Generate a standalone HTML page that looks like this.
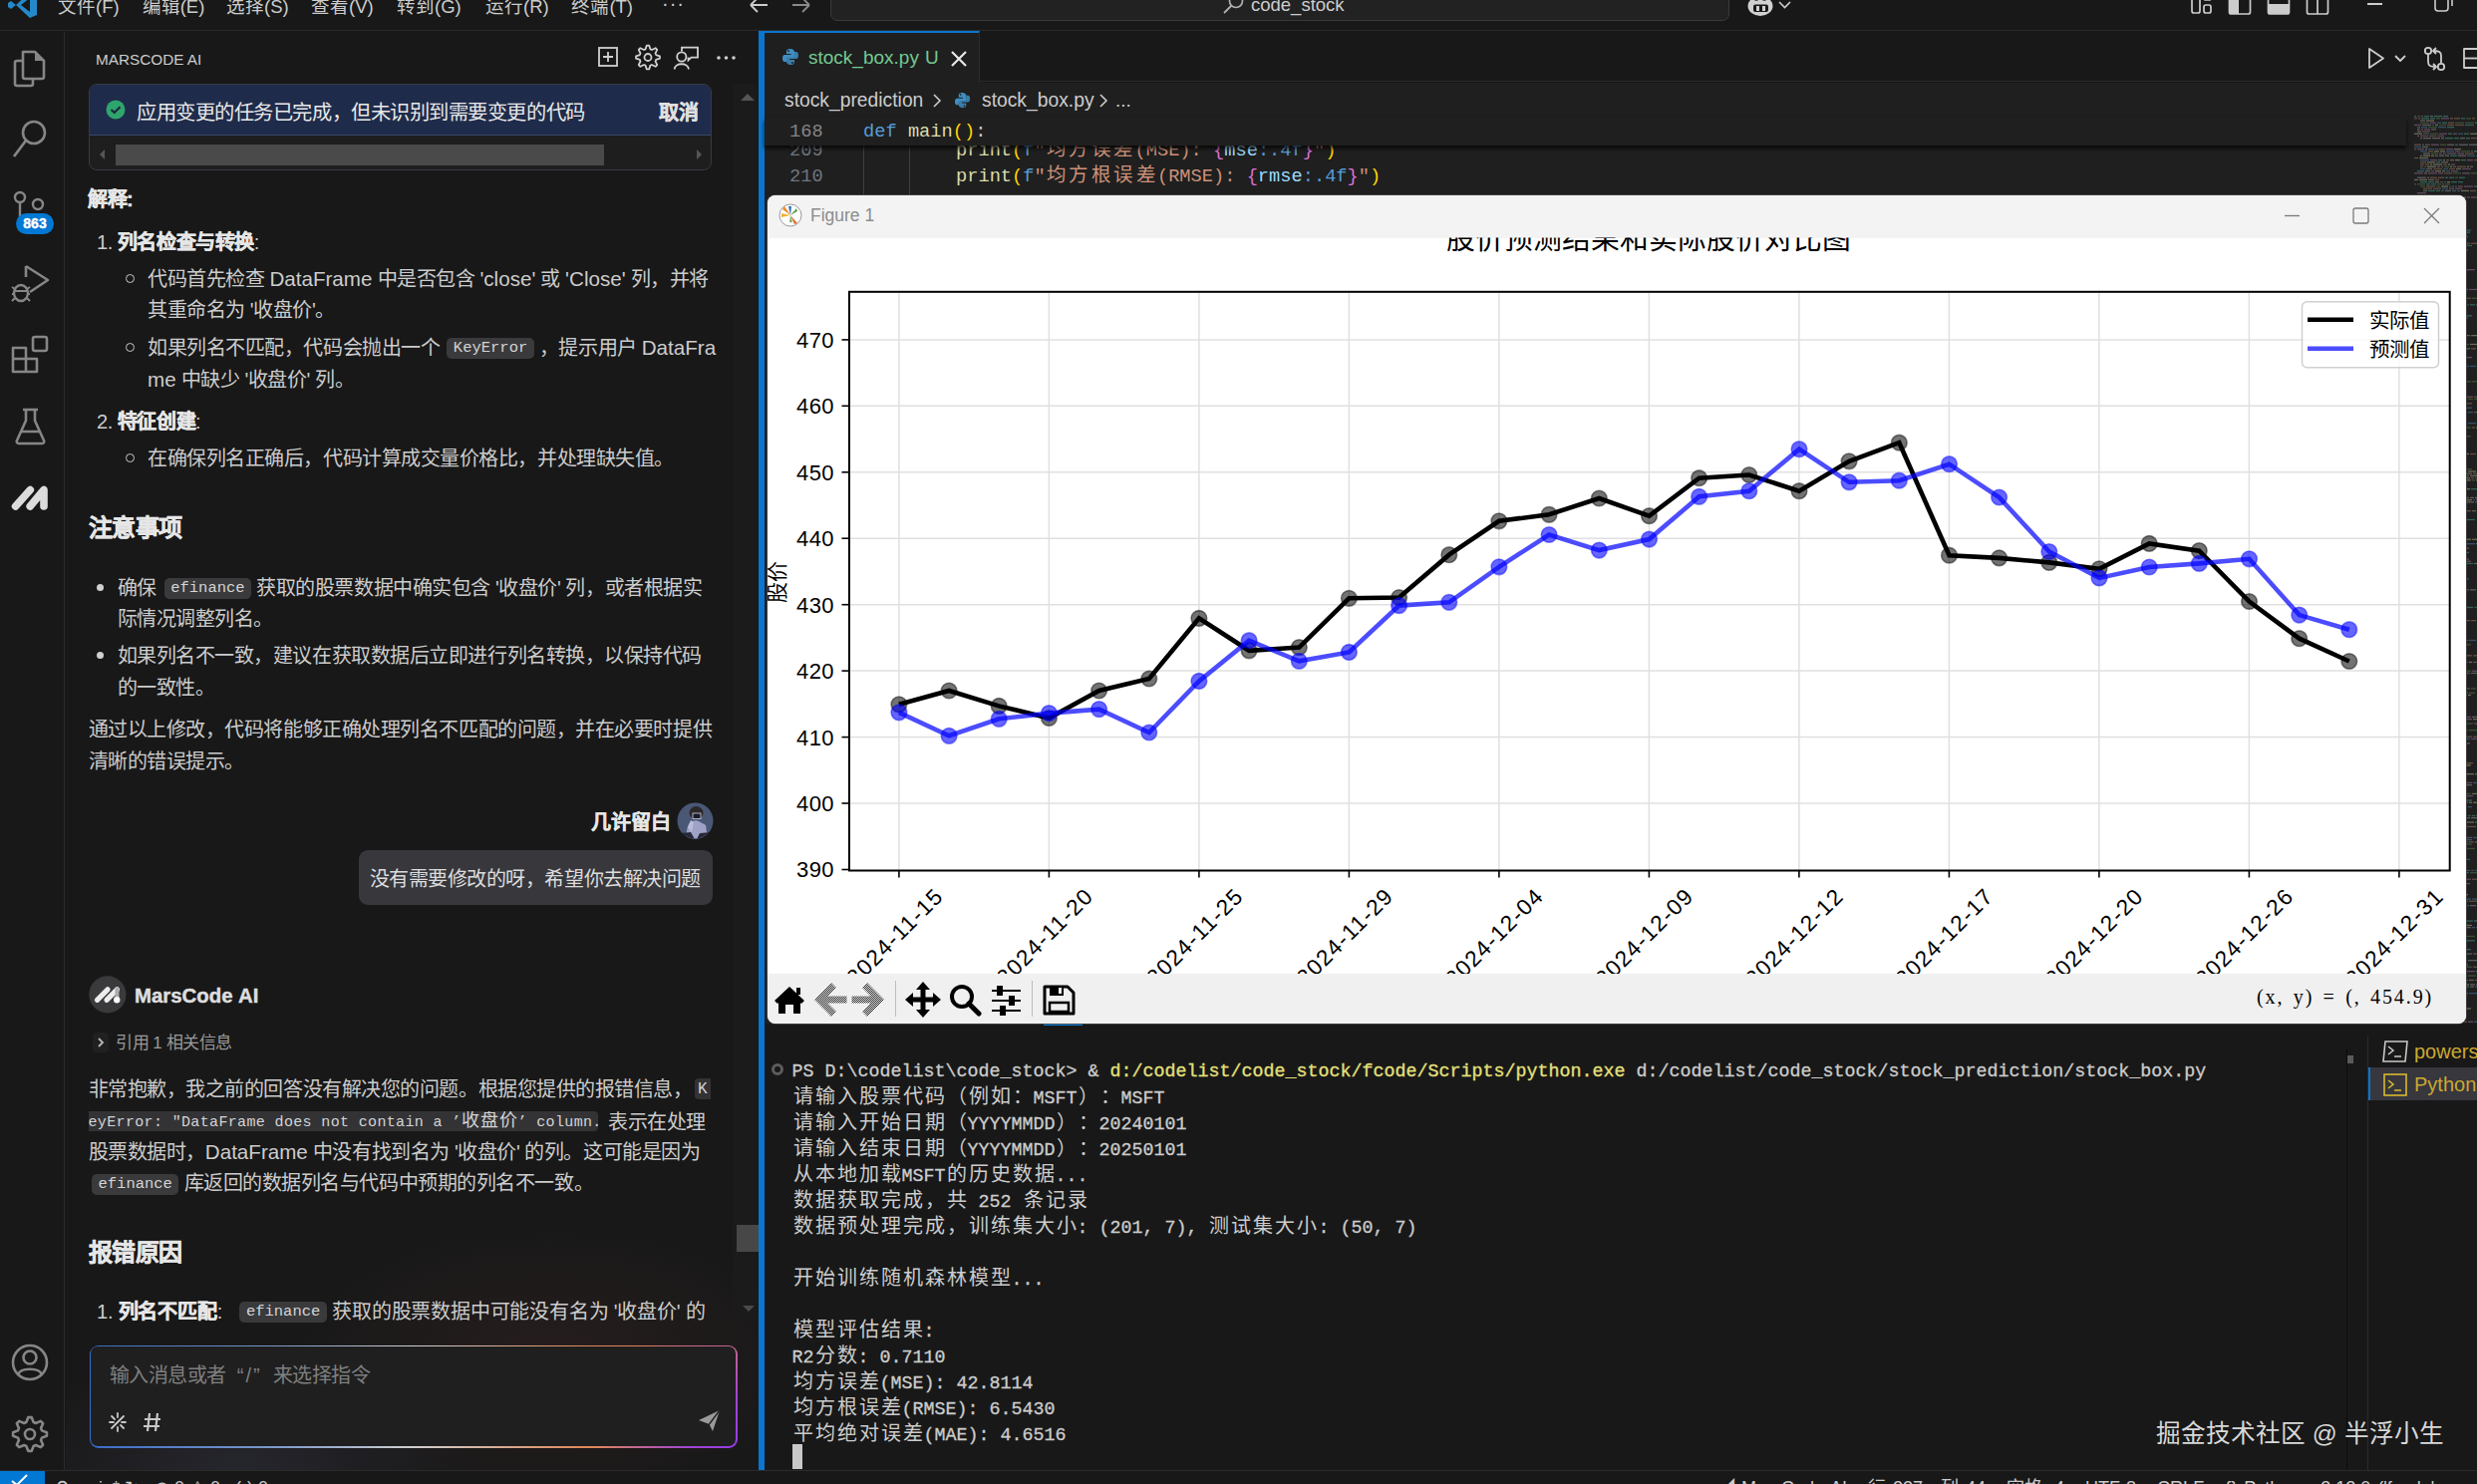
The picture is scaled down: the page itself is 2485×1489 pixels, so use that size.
<!DOCTYPE html><html lang="zh-CN"><head><meta charset="utf-8"><title>VS Code</title><style>
*{box-sizing:border-box;margin:0;padding:0}
html,body{width:2485px;height:1489px;overflow:hidden}
body{position:relative;background:#181818;font-family:"Liberation Sans",sans-serif;color:#cccccc}
.a{position:absolute;white-space:nowrap}
.mono{font-family:"Liberation Mono",monospace}
.b,b{font-weight:bold;-webkit-text-stroke:0.45px currentColor}
.pill{font-family:"Liberation Mono",monospace;background:#3a3a3c;border-radius:5px;color:#d4d4d4;font-size:15.5px;padding:1px 6.5px 2px 6.5px;position:relative;top:-2.5px;letter-spacing:0}
.L{font-size:1.03em;letter-spacing:0}
svg{position:absolute;overflow:visible}
</style></head><body><div class="a" style="left:0;top:0;width:2485px;height:31px;background:#181818;border-bottom:1px solid #2b2b2b"></div><svg style="left:8px;top:-8px" width="30" height="26" viewBox="0 0 30 26"><path d="M22 0 L29 3 L29 23 L22 26 L8 13 L3 17 L0 15 L0 11 L3 9 L8 13 Z" fill="#2489ca"/><path d="M22 6 L22 20 L13 13 Z" fill="#181818"/></svg><div class="a" style="left:58px;top:-5px;font-size:18.5px;line-height:24px;color:#cccccc">文件(F)</div><div class="a" style="left:142.7px;top:-5px;font-size:18.5px;line-height:24px;color:#cccccc">编辑(E)</div><div class="a" style="left:227px;top:-5px;font-size:18.5px;line-height:24px;color:#cccccc">选择(S)</div><div class="a" style="left:312px;top:-5px;font-size:18.5px;line-height:24px;color:#cccccc">查看(V)</div><div class="a" style="left:398px;top:-5px;font-size:18.5px;line-height:24px;color:#cccccc">转到(G)</div><div class="a" style="left:487px;top:-5px;font-size:18.5px;line-height:24px;color:#cccccc">运行(R)</div><div class="a" style="left:573.4px;top:-5px;font-size:18.5px;line-height:24px;color:#cccccc">终端(T)</div><div class="a" style="left:664px;top:-9px;font-size:20px;line-height:24px;color:#cccccc;letter-spacing:1px">···</div><svg style="left:750px;top:-3px" width="70" height="18" viewBox="0 0 70 18"><path d="M3 8 H20 M3 8 L10 1 M3 8 L10 15" stroke="#cccccc" stroke-width="1.8" fill="none"/><path d="M62 8 H45 M62 8 L55 1 M62 8 L55 15" stroke="#8a8a8a" stroke-width="1.8" fill="none"/></svg><div class="a" style="left:833px;top:-12px;width:902px;height:33px;background:#222222;border:1px solid #3a3a3a;border-radius:7px"></div><svg style="left:1226px;top:-6px" width="24" height="22" viewBox="0 0 24 22"><circle cx="14" cy="7" r="6.5" stroke="#b0b0b0" stroke-width="1.7" fill="none"/><path d="M9.5 11.5 L2 19" stroke="#b0b0b0" stroke-width="1.8"/></svg><div class="a" style="left:1255px;top:-7px;font-size:18.5px;line-height:24px;color:#cccccc">code_stock</div><svg style="left:1753px;top:-8px" width="48" height="26" viewBox="0 0 48 26"><ellipse cx="13" cy="14" rx="12.5" ry="10" fill="#d0d0d0"/><circle cx="9" cy="6" r="5.2" fill="#d0d0d0"/><circle cx="17" cy="6" r="5.2" fill="#d0d0d0"/><circle cx="9" cy="6" r="2.8" fill="#181818"/><circle cx="17" cy="6" r="2.8" fill="#181818"/><rect x="6" y="12.5" width="15" height="7.5" rx="2" fill="#181818"/><rect x="9" y="14" width="3" height="5" fill="#d0d0d0"/><rect x="15" y="14" width="3" height="5" fill="#d0d0d0"/><path d="M32 10 L37.5 15.5 L43 10" stroke="#cccccc" stroke-width="1.6" fill="none"/></svg><svg style="left:2198px;top:-6px" width="140" height="22" viewBox="0 0 140 22"><g stroke="#cccccc" stroke-width="1.7" fill="none"><rect x="1" y="-2" width="8" height="21" rx="2"/><rect x="13" y="-2" width="7" height="8" rx="2"/><rect x="13" y="11" width="7" height="8" rx="2"/><rect x="38.5" y="-2" width="21" height="22" rx="2"/><rect x="77.5" y="-2" width="21" height="22" rx="2"/><rect x="116.5" y="-2" width="21" height="22" rx="2"/><path d="M127 -2 V20"/></g><path d="M38.5 -2 H48 V20 H40.5 a2 2 0 0 1 -2 -2 Z" fill="#cccccc"/><path d="M77.5 10 H98.5 V18 a2 2 0 0 1 -2 2 H79.5 a2 2 0 0 1 -2 -2 Z" fill="#cccccc"/></svg><div class="a" style="left:2375px;top:3px;width:15px;height:1.6px;background:#cccccc"></div><svg style="left:2440px;top:-6px" width="24" height="20" viewBox="0 0 24 20"><rect x="3" y="4" width="13" height="13" rx="3" stroke="#cccccc" stroke-width="1.6" fill="none"/><path d="M8 1 H16 a4 4 0 0 1 4 4 V12" stroke="#cccccc" stroke-width="1.6" fill="none"/></svg><div class="a" style="left:0;top:32px;width:65px;height:1443px;background:#181818;border-right:1px solid #2b2b2b"></div><svg style="left:12px;top:49px" width="36" height="40" viewBox="0 0 36 40"><path d="M11 3 H23 L32 12 V28 a2 2 0 0 1 -2 2 H13 a2 2 0 0 1 -2 -2 Z" stroke="#868686" stroke-width="2.6" fill="none" stroke-linejoin="round"/><path d="M23 3 V12 H32" fill="#868686"/><path d="M11 12 H5 a2 2 0 0 0 -2 2 V35 a2 2 0 0 0 2 2 H19 a2 2 0 0 0 2 -2 V30" stroke="#868686" stroke-width="2.6" fill="none"/></svg><svg style="left:12px;top:120px" width="38" height="40" viewBox="0 0 38 40"><circle cx="22" cy="13" r="11" stroke="#868686" stroke-width="2.6" fill="none"/><path d="M14 21 L2 37" stroke="#868686" stroke-width="2.8"/></svg><svg style="left:12px;top:192px" width="40" height="44" viewBox="0 0 40 44"><circle cx="8" cy="6" r="5" stroke="#868686" stroke-width="2.4" fill="none"/><circle cx="26" cy="13" r="5" stroke="#868686" stroke-width="2.4" fill="none"/><path d="M8 11 V40" stroke="#868686" stroke-width="2.4"/></svg><div class="a b" style="left:16px;top:214px;width:38px;height:21px;border-radius:11px;background:#0078d4;color:#fff;font-size:14px;line-height:21px;text-align:center">863</div><svg style="left:10px;top:264px" width="42" height="42" viewBox="0 0 42 42"><path d="M16 3 L38 17 L20 29" stroke="#868686" stroke-width="2.6" fill="none" stroke-linejoin="round"/><path d="M16 3 V14" stroke="#868686" stroke-width="2.6"/><ellipse cx="11" cy="30" rx="7" ry="8" stroke="#868686" stroke-width="2.4" fill="none"/><path d="M2 24 L5 26 M2 31 H4 M2 38 L5 35 M20 24 L17 26 M20 31 H18 M20 38 L17 35 M5 28 H17" stroke="#868686" stroke-width="2"/></svg><svg style="left:11px;top:336px" width="40" height="40" viewBox="0 0 40 40"><path d="M2 13 H15 V24 H26 V37 H2 Z M2 24 H15 V37" stroke="#868686" stroke-width="2.6" fill="none" stroke-linejoin="round"/><rect x="22" y="2" width="14" height="14" rx="2" stroke="#868686" stroke-width="2.6" fill="none"/></svg><svg style="left:14px;top:409px" width="34" height="38" viewBox="0 0 34 38"><path d="M9 2 H24 M12 2 V13 L3 33 a2 2 0 0 0 2 3 H28 a2 2 0 0 0 2 -3 L21 13 V2 M7 24 H26" stroke="#868686" stroke-width="2.6" fill="none" stroke-linejoin="round"/></svg><svg style="left:11px;top:486px" width="40" height="28" viewBox="0 0 40 28"><g stroke="#dcdcdc" stroke-width="7.6" stroke-linecap="round" stroke-linejoin="round" fill="none"><path d="M4.6 22 L19.3 5.5"/><path d="M19.2 22 L33 5.5 L33 22"/></g></svg><svg style="left:11px;top:1348px" width="38" height="38" viewBox="0 0 38 38"><circle cx="19" cy="19" r="17" stroke="#868686" stroke-width="2.6" fill="none"/><circle cx="19" cy="14" r="6.5" stroke="#868686" stroke-width="2.6" fill="none"/><path d="M7 31 C10 24 28 24 31 31" stroke="#868686" stroke-width="2.6" fill="none"/></svg><svg style="left:11px;top:1420px" width="38" height="38" viewBox="0 0 38 38"><path d="M35.92 17.33 L35.92 20.67 L30.96 22.63 L30.02 24.89 L32.14 29.78 L29.78 32.14 L24.89 30.02 L22.63 30.96 L20.67 35.92 L17.33 35.92 L15.37 30.96 L13.11 30.02 L8.22 32.14 L5.86 29.78 L7.98 24.89 L7.04 22.63 L2.08 20.67 L2.08 17.33 L7.04 15.37 L7.98 13.11 L5.86 8.22 L8.22 5.86 L13.11 7.98 L15.37 7.04 L17.33 2.08 L20.67 2.08 L22.63 7.04 L24.89 7.98 L29.78 5.86 L32.14 8.22 L30.02 13.11 L30.96 15.37 Z" stroke="#868686" stroke-width="2.6" fill="none" stroke-linejoin="round"/><circle cx="19" cy="19" r="5" stroke="#868686" stroke-width="2.6" fill="none"/></svg><div class="a" style="left:66px;top:32px;width:695px;height:1443px;background:#181818"></div><div class="a" style="left:66px;top:1240px;width:695px;height:235px;background:radial-gradient(ellipse 45% 70% at 25% 100%, rgba(70,70,95,0.30), rgba(24,24,24,0) 75%),radial-gradient(ellipse 50% 80% at 70% 55%, rgba(80,45,45,0.28), rgba(24,24,24,0) 75%)"></div><div class="a" style="left:735px;top:84px;width:25px;height:1240px;background:#1b1b1b"></div><svg style="left:742px;top:92px" width="16" height="10" viewBox="0 0 16 10"><path d="M1 9 L8 2 L15 9 Z" fill="#555"/></svg><svg style="left:743px;top:1309px" width="16" height="10" viewBox="0 0 16 10"><path d="M2 1 L8 7 L14 1 Z" fill="#4a4a4a"/></svg><div class="a" style="left:739px;top:1229px;width:22px;height:27px;background:#474747"></div><div class="a" style="left:96px;top:51px;font-size:15.3px;line-height:18px;color:#cccccc">MARSCODE AI</div><svg style="left:598px;top:45px" width="145" height="28" viewBox="0 0 145 28"><g stroke="#d0d0d0" stroke-width="1.8" fill="none"><rect x="3" y="3" width="18" height="18"/><path d="M12 7 V17 M7 12 H17"/><path d="M86 6.5 V2.7 H102 V12.6 H95.5 L92.5 15.5 V12.6"/><circle cx="85.8" cy="12" r="4.6"/><path d="M78.5 24.5 C79.5 17.5 92 17.5 93 24.5"/></g><path d="M63.94 11.32 L63.94 13.68 L60.13 14.97 L59.50 16.51 L61.28 20.11 L59.61 21.78 L56.01 20.00 L54.47 20.63 L53.18 24.44 L50.82 24.44 L49.53 20.63 L47.99 20.00 L44.39 21.78 L42.72 20.11 L44.50 16.51 L43.87 14.97 L40.06 13.68 L40.06 11.32 L43.87 10.03 L44.50 8.49 L42.72 4.89 L44.39 3.22 L47.99 5.00 L49.53 4.37 L50.82 0.56 L53.18 0.56 L54.47 4.37 L56.01 5.00 L59.61 3.22 L61.28 4.89 L59.50 8.49 L60.13 10.03 Z" stroke="#d0d0d0" stroke-width="1.8" fill="none" stroke-linejoin="round"/><circle cx="52" cy="12.5" r="3.5" stroke="#d0d0d0" stroke-width="1.8" fill="none"/><circle cx="123" cy="13" r="1.8" fill="#d0d0d0"/><circle cx="130.5" cy="13" r="1.8" fill="#d0d0d0"/><circle cx="138" cy="13" r="1.8" fill="#d0d0d0"/></svg><div class="a" style="left:89px;top:84px;width:625px;height:87px;border:1.5px solid #353a45;border-radius:8px;background:#1e1e1e;overflow:hidden"><div style="position:absolute;left:0;top:0;width:100%;height:51px;background:#1f2b4a;border-bottom:1.5px solid #3a4866"></div></div><svg style="left:106px;top:100px" width="20" height="20" viewBox="0 0 20 20"><circle cx="10" cy="10" r="9.5" fill="#2fa56e"/><path d="M5.5 10 L8.7 13 L14.5 7.2" stroke="#1b2a3a" stroke-width="2.2" fill="none"/></svg><div class="a" style="left:137px;top:101px;font-size:20.3px;line-height:24px;color:#e8e8e8;letter-spacing:-0.45px">应用变更的任务已完成，但未识别到需要变更的代码</div><div class="a b" style="left:661px;top:101px;font-size:20px;line-height:24px;color:#e0e0e0">取消</div><svg style="left:97px;top:148px" width="612" height="14" viewBox="0 0 612 14"><path d="M8 2 L3 7 L8 12 Z" fill="#555"/><path d="M602 2 L607 7 L602 12 Z" fill="#555"/></svg><div class="a" style="left:116px;top:145px;width:490px;height:21px;background:#4a4a4a"></div><div class="a b" style="left:88px;top:187.6px;font-size:20px;line-height:24px;color:#e6e6e6;letter-spacing:-0.45px">解释:</div><div class="a" style="left:97px;top:230.6px;font-size:20px;line-height:24px;color:#cccccc;letter-spacing:-0.45px">1. <b style="color:#e6e6e6">列名检查与转换</b>:</div><div class="a" style="left:125.5px;top:274.5px;width:9px;height:9px;border:1.6px solid #c8c8c8;border-radius:50%"></div><div class="a" style="left:148px;top:267.6px;font-size:20px;line-height:24px;color:#cccccc;letter-spacing:-0.45px">代码首先检查 <span class="L">DataFrame</span> 中是否包含 <span class="L">'close'</span> 或 <span class="L">'Close'</span> 列，并将</div><div class="a" style="left:148px;top:298.6px;font-size:20px;line-height:24px;color:#cccccc;letter-spacing:-0.45px">其重命名为 '收盘价'。</div><div class="a" style="left:125.5px;top:343.5px;width:9px;height:9px;border:1.6px solid #c8c8c8;border-radius:50%"></div><div class="a" style="left:148px;top:336.6px;font-size:20px;line-height:24px;color:#cccccc;letter-spacing:-0.45px">如果列名不匹配，代码会抛出一个 <span class="pill" style="margin-left:2px">KeyError</span> ，提示用户 <span class="L">DataFra</span></div><div class="a" style="left:148px;top:368.6px;font-size:20px;line-height:24px;color:#cccccc;letter-spacing:-0.45px"><span class="L">me</span> 中缺少 '收盘价' 列。</div><div class="a" style="left:97px;top:411.2px;font-size:20px;line-height:24px;color:#cccccc;letter-spacing:-0.45px">2. <b style="color:#e6e6e6">特征创建</b>:</div><div class="a" style="left:125.5px;top:454.5px;width:9px;height:9px;border:1.6px solid #c8c8c8;border-radius:50%"></div><div class="a" style="left:148px;top:447.6px;font-size:20px;line-height:24px;color:#cccccc;letter-spacing:-0.45px">在确保列名正确后，代码计算成交量价格比，并处理缺失值。</div><div class="a b" style="left:88.5px;top:516.2px;font-size:24px;line-height:28px;color:#e6e6e6;letter-spacing:-0.45px">注意事项</div><div class="a" style="left:97.0px;top:585.5px;width:7px;height:7px;background:#d0d0d0;border-radius:50%"></div><div class="a" style="left:117.5px;top:577.6px;font-size:20px;line-height:24px;color:#cccccc;letter-spacing:-0.45px">确保 <span class="pill" style="margin:0 0 0 3px">efinance</span> 获取的股票数据中确实包含 '收盘价' 列，或者根据实</div><div class="a" style="left:117.5px;top:609.0px;font-size:20px;line-height:24px;color:#cccccc;letter-spacing:-0.45px">际情况调整列名。</div><div class="a" style="left:97.0px;top:653.5px;width:7px;height:7px;background:#d0d0d0;border-radius:50%"></div><div class="a" style="left:117.5px;top:645.6px;font-size:20px;line-height:24px;color:#cccccc;letter-spacing:-0.45px">如果列名不一致，建议在获取数据后立即进行列名转换，以保持代码</div><div class="a" style="left:117.5px;top:677.6px;font-size:20px;line-height:24px;color:#cccccc;letter-spacing:-0.45px">的一致性。</div><div class="a" style="left:88.5px;top:720.2px;font-size:20px;line-height:24px;color:#cccccc;letter-spacing:-0.45px">通过以上修改，代码将能够正确处理列名不匹配的问题，并在必要时提供</div><div class="a" style="left:88.5px;top:751.6px;font-size:20px;line-height:24px;color:#cccccc;letter-spacing:-0.45px">清晰的错误提示。</div><div class="a b" style="left:563px;top:812.5px;width:110px;text-align:right;font-size:20px;line-height:24px;color:#e6e6e6">几许留白</div><svg style="left:679px;top:805px" width="37" height="37" viewBox="0 0 37 37"><defs><clipPath id="av"><circle cx="18.5" cy="18.5" r="18"/></clipPath></defs><circle cx="18.5" cy="18.5" r="18" fill="#4a5876"/><g clip-path="url(#av)"><ellipse cx="19.5" cy="10.5" rx="7" ry="6.5" fill="#2b2829"/><path d="M8 37 L11 24 C13 19 18 17 22 19 L29 23 L31 37 Z" fill="#9fa2c6"/><path d="M11 25 L14 18 L17 20 L15 30 Z" fill="#b8bcd8"/><path d="M2 37 L4 31 L14 30 L18 37 Z M20 37 L23 31 L35 30 L37 37 Z" fill="#262838"/><rect x="16" y="11" width="8" height="5.5" fill="#1b1b30" stroke="#d8d8e0" stroke-width="0.8"/></g></svg><div class="a" style="left:359.5px;top:853px;width:355px;height:55px;background:#37373c;border-radius:9px"></div><div class="a" style="left:370.5px;top:870.1px;font-size:20px;line-height:24px;color:#dcdcdc;letter-spacing:-0.45px">没有需要修改的呀，希望你去解决问题</div><svg style="left:88px;top:979px" width="40" height="40" viewBox="0 0 40 40"><circle cx="19.9" cy="18.9" r="18.6" fill="#3a3a3c"/><g stroke="#ececec" stroke-width="5.2" stroke-linecap="round" fill="none"><path d="M9.5 24.3 L20 13.8"/><path d="M19 24.3 L29.5 13.8"/></g><path d="M29.5 13.8 V22" stroke="#aaa" stroke-width="4" stroke-linecap="round"/><circle cx="29.2" cy="24.2" r="3.2" fill="#ffffff"/></svg><div class="a b" style="left:135px;top:986.6px;font-size:19.8px;line-height:24px;color:#dedede;letter-spacing:0px"><span class="L">MarsCode</span> <span class="L">AI</span></div><svg style="left:93px;top:1036px" width="16" height="20" viewBox="0 0 16 20"><rect x="0" y="0" width="16" height="20" rx="4" fill="#202020"/><path d="M6 6 L10 10 L6 14" stroke="#b8b8b8" stroke-width="1.8" fill="none"/></svg><div class="a" style="left:116px;top:1034.6px;font-size:17px;line-height:24px;color:#9a9a9a;letter-spacing:-0.45px">引用 1 相关信息</div><div class="a" style="left:88.5px;top:1080.6px;font-size:20px;line-height:24px;color:#cccccc;letter-spacing:-0.45px">非常抱歉，我之前的回答没有解决您的问题。根据您提供的报错信息，</div><div class="a mono" style="left:697px;top:1082px;width:16px;height:21px;background:#333336;border-radius:4px 0 0 4px;font-size:16px;line-height:22px;color:#d4d4d4;padding-left:3px">K</div><div class="a mono" style="left:88.5px;top:1114.5px;width:511px;height:20.5px;background:#333336;border-radius:0 4px 4px 0;overflow:hidden;font-size:15px;line-height:21px;color:#d4d4d4;letter-spacing:0.35px">eyError: "DataFrame does not contain a ’<span style="font-size:18px;letter-spacing:1px">收盘价</span>’ column."</div><div class="a" style="left:610px;top:1113.6px;font-size:20px;line-height:24px;color:#cccccc;letter-spacing:-0.45px">表示在处理</div><div class="a" style="left:88.5px;top:1144.0px;font-size:20px;line-height:24px;color:#cccccc;letter-spacing:-0.45px">股票数据时，<span class="L">DataFrame</span> 中没有找到名为 '收盘价' 的列。这可能是因为</div><div class="a" style="left:92px;top:1175.1px;font-size:20px;line-height:24px;color:#cccccc;letter-spacing:-0.45px"><span class="pill" style="">efinance</span> 库返回的数据列名与代码中预期的列名不一致。</div><div class="a b" style="left:88.8px;top:1243.3px;font-size:24px;line-height:28px;color:#e6e6e6;letter-spacing:-0.45px">报错原因</div><div class="a" style="left:97px;top:1303.6px;font-size:20px;line-height:24px;color:#cccccc;letter-spacing:-0.2px">1. <b style="color:#e6e6e6">列名不匹配</b>: <span class="pill" style="margin-left:12px">efinance</span> 获取的股票数据中可能没有名为 '收盘价' 的</div><div class="a" style="left:89.5px;top:1349.5px;width:650px;height:103px;border-radius:9px;padding:1.6px;background:radial-gradient(ellipse 22% 140% at 100% 100%, rgba(150,60,230,1) 0%, rgba(150,60,230,0.85) 35%, rgba(150,60,230,0) 100%),linear-gradient(90deg,#3a6cc8 0%,#7a98c8 28%,#d0d0d0 50%,#e08a5a 76%,#e07a60 100%)"><div style="width:100%;height:100%;border-radius:7px;background:#1f1f20"></div></div><div class="a" style="left:109.5px;top:1368.1px;font-size:20px;line-height:24px;color:#7f7f7f;letter-spacing:-0.45px">输入消息或者<span style="display:inline-block;width:47px;text-align:center;letter-spacing:2px">“/”</span>来选择指令</div><svg style="left:108px;top:1416px" width="62" height="22" viewBox="0 0 62 22"><g stroke="#c8c8c8" stroke-width="1.8" stroke-linecap="round"><path d="M10 2 V6 M10 16 V20 M2 11 H6 M14 11 H18 M4 5 L7 8 M13 14 L16 17 M16 5 L4 17"/></g><path d="M42 2 L40 20 M50 2 L48 20 M37 8 H53 M36 15 H52" stroke="#c8c8c8" stroke-width="2.2"/></svg><svg style="left:698px;top:1412px" width="28" height="28" viewBox="0 0 28 28"><path d="M3 13 L24 3 L17 24 L13.5 17 Z" fill="#9a9a9a"/><path d="M13.5 17 L24 3 M13.5 17 L11 24" stroke="#202022" stroke-width="1.4"/></svg><div class="a" style="left:761px;top:31px;width:6px;height:1444px;background:#0a76d2"></div><div class="a" style="left:767px;top:32px;width:1718px;height:50px;background:#181818;border-bottom:1px solid #2b2b2b"></div><div class="a" style="left:767px;top:31px;width:216px;height:52px;background:#1f1f1f;border-top:2px solid #0a76d2;border-right:1px solid #2b2b2b"></div><svg style="left:784px;top:48px" width="18" height="18" viewBox="0 0 18 18"><path d="M9 1 C5 1 5 3 5 4 V6 H9.5 V7 H3 C1.5 7 1 9 1 10.5 C1 12 1.5 14 3 14 H5 V11.5 C5 10.5 6 9.5 7 9.5 H11 C12 9.5 13 8.5 13 7.5 V4 C13 2.5 11.5 1 9 1 Z" fill="#3e8ec2"/><path d="M9 17 C13 17 13 15 13 14 V12 H8.5 V11 H15 C16.5 11 17 9 17 7.5 C17 6 16.5 4 15 4 H13 V6.5 C13 7.5 12 8.5 11 8.5 H7 C6 8.5 5 9.5 5 10.5 V14 C5 15.5 6.5 17 9 17 Z" fill="#3e8ec2" opacity="0.85"/><circle cx="7" cy="3" r="0.9" fill="#1f1f1f"/><circle cx="11" cy="15" r="0.9" fill="#1f1f1f"/></svg><div class="a" style="left:811px;top:46px;font-size:19px;line-height:24px;color:#73c991">stock_box.py</div><div class="a" style="left:928px;top:46px;font-size:19px;line-height:24px;color:#73c991">U</div><svg style="left:953px;top:50px" width="18" height="18" viewBox="0 0 18 18"><path d="M2 2 L16 16 M16 2 L2 16" stroke="#e8e8e8" stroke-width="2.2"/></svg><svg style="left:2360px;top:44px" width="125" height="30" viewBox="0 0 125 30"><g stroke="#cccccc" stroke-width="1.8" fill="none" stroke-linejoin="round"><path d="M17 5 L31 14.5 L17 24 Z"/><path d="M43 12 L48 17 L53 12"/><circle cx="76" cy="7" r="3.2"/><circle cx="89" cy="23" r="3.2"/><path d="M76 10.5 V18 C76 22 78 23 84 23 M81 20 L84 23 L81 26"/><path d="M89 19.5 V12 C89 8 87 7 81 7 M84 4 L81 7 L84 10"/><rect x="112" y="5" width="20" height="19"/><path d="M112 14.5 H132"/></g></svg><div class="a" style="left:767px;top:83px;width:1718px;height:947px;background:#1f1f1f"></div><div class="a" style="left:787px;top:89px;font-size:19.3px;line-height:24px;color:#cccccc">stock_prediction</div><svg style="left:934px;top:93px" width="12" height="16" viewBox="0 0 12 16"><path d="M3 2 L9 8 L3 14" stroke="#cccccc" stroke-width="1.6" fill="none"/></svg><svg style="left:957px;top:92px" width="17.099999999999998" height="17.099999999999998" viewBox="0 0 18 18"><path d="M9 1 C5 1 5 3 5 4 V6 H9.5 V7 H3 C1.5 7 1 9 1 10.5 C1 12 1.5 14 3 14 H5 V11.5 C5 10.5 6 9.5 7 9.5 H11 C12 9.5 13 8.5 13 7.5 V4 C13 2.5 11.5 1 9 1 Z" fill="#3e8ec2"/><path d="M9 17 C13 17 13 15 13 14 V12 H8.5 V11 H15 C16.5 11 17 9 17 7.5 C17 6 16.5 4 15 4 H13 V6.5 C13 7.5 12 8.5 11 8.5 H7 C6 8.5 5 9.5 5 10.5 V14 C5 15.5 6.5 17 9 17 Z" fill="#3e8ec2" opacity="0.85"/><circle cx="7" cy="3" r="0.9" fill="#1f1f1f"/><circle cx="11" cy="15" r="0.9" fill="#1f1f1f"/></svg><div class="a" style="left:985px;top:89px;font-size:19.3px;line-height:24px;color:#cccccc">stock_box.py</div><svg style="left:1101px;top:93px" width="12" height="16" viewBox="0 0 12 16"><path d="M3 2 L9 8 L3 14" stroke="#cccccc" stroke-width="1.6" fill="none"/></svg><div class="a" style="left:1119px;top:89px;font-size:19px;line-height:24px;color:#cccccc">...</div><div class="a mono" style="left:792px;top:165.3px;font-size:18.7px;line-height:24px"><span style="color:#6e7681">210</span></div><div class="a mono" style="left:959px;top:165.3px;font-size:18.7px;line-height:24px"><span style="color:#dcdcaa">print</span><span style="color:#ffd700">(</span><span style="color:#569cd6">f</span><span style="color:#ce9178">&quot;<span style="display:inline-block;width:22.44px;text-align:center;font-size:19.5px">均</span><span style="display:inline-block;width:22.44px;text-align:center;font-size:19.5px">方</span><span style="display:inline-block;width:22.44px;text-align:center;font-size:19.5px">根</span><span style="display:inline-block;width:22.44px;text-align:center;font-size:19.5px">误</span><span style="display:inline-block;width:22.44px;text-align:center;font-size:19.5px">差</span>(RMSE): </span><span style="color:#da70d6">{</span><span style="color:#9cdcfe">rmse</span><span style="color:#569cd6">:.4f</span><span style="color:#da70d6">}</span><span style="color:#ce9178">&quot;</span><span style="color:#ffd700">)</span></div><div class="a mono" style="left:792px;top:139px;font-size:18.7px;line-height:24px"><span style="color:#6e7681">209</span></div><div class="a mono" style="left:959px;top:139px;font-size:18.7px;line-height:24px"><span style="color:#dcdcaa">print</span><span style="color:#ffd700">(</span><span style="color:#569cd6">f</span><span style="color:#ce9178">&quot;<span style="display:inline-block;width:22.44px;text-align:center;font-size:19.5px">均</span><span style="display:inline-block;width:22.44px;text-align:center;font-size:19.5px">方</span><span style="display:inline-block;width:22.44px;text-align:center;font-size:19.5px">误</span><span style="display:inline-block;width:22.44px;text-align:center;font-size:19.5px">差</span>(MSE): </span><span style="color:#da70d6">{</span><span style="color:#9cdcfe">mse</span><span style="color:#569cd6">:.4f</span><span style="color:#da70d6">}</span><span style="color:#ce9178">&quot;</span><span style="color:#ffd700">)</span></div><div class="a" style="left:866px;top:140px;width:1px;height:60px;background:#404040"></div><div class="a" style="left:912px;top:140px;width:1px;height:60px;background:#404040"></div><div class="a" style="left:767px;top:118px;width:1647px;height:28px;background:#1f1f1f;box-shadow:0 3px 4px rgba(0,0,0,0.75)"></div><div class="a mono" style="left:792px;top:120px;font-size:18.7px;line-height:24px"><span style="color:#858585">168</span></div><div class="a mono" style="left:866px;top:120px;font-size:18.7px;line-height:24px"><span style="color:#569cd6">def</span><span style="color:#ccc"> </span><span style="color:#dcdcaa">main</span><span style="color:#ffd700">()</span><span style="color:#cccccc">:</span></div><svg style="left:0;top:0" width="2485" height="1489" viewBox="0 0 2485 1489" ><rect x="2422" y="116.0" width="2" height="1.3" fill="#4ec9b0" opacity="0.4"/><rect x="2425" y="116.0" width="3" height="1.3" fill="#6a9955" opacity="0.4"/><rect x="2429" y="116.0" width="2" height="1.3" fill="#ce9178" opacity="0.4"/><rect x="2432" y="116.0" width="5" height="1.3" fill="#4ec9b0" opacity="0.4"/><rect x="2438" y="116.0" width="3" height="1.3" fill="#bbbbbb" opacity="0.4"/><rect x="2442" y="116.0" width="8" height="1.3" fill="#4ec9b0" opacity="0.4"/><rect x="2451" y="116.0" width="5" height="1.3" fill="#4ec9b0" opacity="0.4"/><rect x="2422" y="118.2" width="3" height="1.3" fill="#c586c0" opacity="0.4"/><rect x="2426" y="118.2" width="2" height="1.3" fill="#ce9178" opacity="0.4"/><rect x="2429" y="118.2" width="8" height="1.3" fill="#4ec9b0" opacity="0.4"/><rect x="2438" y="118.2" width="5" height="1.3" fill="#4ec9b0" opacity="0.4"/><rect x="2444" y="118.2" width="4" height="1.3" fill="#6a9955" opacity="0.4"/><rect x="2449" y="118.2" width="8" height="1.3" fill="#c586c0" opacity="0.4"/><rect x="2458" y="118.2" width="3" height="1.3" fill="#ce9178" opacity="0.4"/><rect x="2462" y="118.2" width="6" height="1.3" fill="#ce9178" opacity="0.4"/><rect x="2469" y="118.2" width="4" height="1.3" fill="#4ec9b0" opacity="0.4"/><rect x="2474" y="118.2" width="5" height="1.3" fill="#6a9955" opacity="0.4"/><rect x="2480" y="118.2" width="3" height="1.3" fill="#ce9178" opacity="0.4"/><rect x="2428" y="120.4" width="5" height="1.3" fill="#bbbbbb" opacity="0.4"/><rect x="2434" y="120.4" width="8" height="1.3" fill="#dcdcaa" opacity="0.4"/><rect x="2428" y="122.6" width="9" height="1.3" fill="#6a9955" opacity="0.4"/><rect x="2438" y="122.6" width="6" height="1.3" fill="#c586c0" opacity="0.4"/><rect x="2445" y="122.6" width="4" height="1.3" fill="#569cd6" opacity="0.4"/><rect x="2450" y="122.6" width="5" height="1.3" fill="#4ec9b0" opacity="0.4"/><rect x="2456" y="122.6" width="6" height="1.3" fill="#ce9178" opacity="0.4"/><rect x="2463" y="122.6" width="9" height="1.3" fill="#6a9955" opacity="0.4"/><rect x="2473" y="122.6" width="9" height="1.3" fill="#6a9955" opacity="0.4"/><rect x="2483" y="122.6" width="2" height="1.3" fill="#4ec9b0" opacity="0.4"/><rect x="2422" y="124.8" width="7" height="1.3" fill="#c586c0" opacity="0.4"/><rect x="2430" y="124.8" width="9" height="1.3" fill="#bbbbbb" opacity="0.4"/><rect x="2440" y="124.8" width="2" height="1.3" fill="#569cd6" opacity="0.4"/><rect x="2443" y="124.8" width="3" height="1.3" fill="#dcdcaa" opacity="0.4"/><rect x="2447" y="124.8" width="7" height="1.3" fill="#6a9955" opacity="0.4"/><rect x="2455" y="124.8" width="7" height="1.3" fill="#ce9178" opacity="0.4"/><rect x="2463" y="124.8" width="9" height="1.3" fill="#ce9178" opacity="0.4"/><rect x="2473" y="124.8" width="9" height="1.3" fill="#4ec9b0" opacity="0.4"/><rect x="2425" y="127.0" width="3" height="1.3" fill="#4ec9b0" opacity="0.4"/><rect x="2429" y="127.0" width="6" height="1.3" fill="#569cd6" opacity="0.4"/><rect x="2436" y="127.0" width="9" height="1.3" fill="#6a9955" opacity="0.4"/><rect x="2446" y="127.0" width="8" height="1.3" fill="#569cd6" opacity="0.4"/><rect x="2455" y="127.0" width="7" height="1.3" fill="#4ec9b0" opacity="0.4"/><rect x="2425" y="129.2" width="3" height="1.3" fill="#bbbbbb" opacity="0.4"/><rect x="2429" y="129.2" width="2" height="1.3" fill="#c586c0" opacity="0.4"/><rect x="2432" y="129.2" width="6" height="1.3" fill="#c586c0" opacity="0.4"/><rect x="2439" y="129.2" width="5" height="1.3" fill="#bbbbbb" opacity="0.4"/><rect x="2425" y="131.4" width="4" height="1.3" fill="#bbbbbb" opacity="0.4"/><rect x="2430" y="131.4" width="8" height="1.3" fill="#ce9178" opacity="0.4"/><rect x="2422" y="133.6" width="8" height="1.3" fill="#dcdcaa" opacity="0.4"/><rect x="2431" y="133.6" width="6" height="1.3" fill="#569cd6" opacity="0.4"/><rect x="2438" y="133.6" width="8" height="1.3" fill="#6a9955" opacity="0.4"/><rect x="2447" y="133.6" width="8" height="1.3" fill="#c586c0" opacity="0.4"/><rect x="2456" y="133.6" width="4" height="1.3" fill="#4ec9b0" opacity="0.4"/><rect x="2461" y="133.6" width="4" height="1.3" fill="#c586c0" opacity="0.4"/><rect x="2466" y="133.6" width="5" height="1.3" fill="#569cd6" opacity="0.4"/><rect x="2472" y="133.6" width="5" height="1.3" fill="#4ec9b0" opacity="0.4"/><rect x="2478" y="133.6" width="7" height="1.3" fill="#dcdcaa" opacity="0.4"/><rect x="2425" y="135.8" width="2" height="1.3" fill="#c586c0" opacity="0.4"/><rect x="2428" y="135.8" width="8" height="1.3" fill="#ce9178" opacity="0.4"/><rect x="2437" y="135.8" width="7" height="1.3" fill="#ce9178" opacity="0.4"/><rect x="2445" y="135.8" width="7" height="1.3" fill="#c586c0" opacity="0.4"/><rect x="2428" y="138.0" width="2" height="1.3" fill="#bbbbbb" opacity="0.4"/><rect x="2431" y="138.0" width="8" height="1.3" fill="#bbbbbb" opacity="0.4"/><rect x="2440" y="138.0" width="8" height="1.3" fill="#bbbbbb" opacity="0.4"/><rect x="2449" y="138.0" width="3" height="1.3" fill="#bbbbbb" opacity="0.4"/><rect x="2453" y="138.0" width="8" height="1.3" fill="#4ec9b0" opacity="0.4"/><rect x="2462" y="138.0" width="5" height="1.3" fill="#4ec9b0" opacity="0.4"/><rect x="2468" y="138.0" width="5" height="1.3" fill="#bbbbbb" opacity="0.4"/><rect x="2474" y="138.0" width="4" height="1.3" fill="#4ec9b0" opacity="0.4"/><rect x="2479" y="138.0" width="6" height="1.3" fill="#ce9178" opacity="0.4"/><rect x="2422" y="144.6" width="7" height="1.3" fill="#ce9178" opacity="0.4"/><rect x="2430" y="144.6" width="2" height="1.3" fill="#4ec9b0" opacity="0.4"/><rect x="2433" y="144.6" width="5" height="1.3" fill="#ce9178" opacity="0.4"/><rect x="2439" y="144.6" width="8" height="1.3" fill="#c586c0" opacity="0.4"/><rect x="2448" y="144.6" width="6" height="1.3" fill="#6a9955" opacity="0.4"/><rect x="2455" y="144.6" width="7" height="1.3" fill="#bbbbbb" opacity="0.4"/><rect x="2463" y="144.6" width="3" height="1.3" fill="#4ec9b0" opacity="0.4"/><rect x="2467" y="144.6" width="9" height="1.3" fill="#bbbbbb" opacity="0.4"/><rect x="2477" y="144.6" width="8" height="1.3" fill="#bbbbbb" opacity="0.4"/><rect x="2422" y="146.8" width="7" height="1.3" fill="#569cd6" opacity="0.4"/><rect x="2430" y="146.8" width="6" height="1.3" fill="#bbbbbb" opacity="0.4"/><rect x="2422" y="149.0" width="2" height="1.3" fill="#c586c0" opacity="0.4"/><rect x="2425" y="149.0" width="7" height="1.3" fill="#c586c0" opacity="0.4"/><rect x="2433" y="149.0" width="2" height="1.3" fill="#dcdcaa" opacity="0.4"/><rect x="2436" y="149.0" width="6" height="1.3" fill="#569cd6" opacity="0.4"/><rect x="2443" y="149.0" width="3" height="1.3" fill="#569cd6" opacity="0.4"/><rect x="2447" y="149.0" width="6" height="1.3" fill="#ce9178" opacity="0.4"/><rect x="2454" y="149.0" width="7" height="1.3" fill="#c586c0" opacity="0.4"/><rect x="2462" y="149.0" width="7" height="1.3" fill="#dcdcaa" opacity="0.4"/><rect x="2428" y="151.2" width="7" height="1.3" fill="#569cd6" opacity="0.4"/><rect x="2436" y="151.2" width="5" height="1.3" fill="#ce9178" opacity="0.4"/><rect x="2442" y="151.2" width="5" height="1.3" fill="#dcdcaa" opacity="0.4"/><rect x="2448" y="151.2" width="5" height="1.3" fill="#dcdcaa" opacity="0.4"/><rect x="2454" y="151.2" width="8" height="1.3" fill="#569cd6" opacity="0.4"/><rect x="2463" y="151.2" width="5" height="1.3" fill="#c586c0" opacity="0.4"/><rect x="2469" y="151.2" width="9" height="1.3" fill="#6a9955" opacity="0.4"/><rect x="2479" y="151.2" width="2" height="1.3" fill="#4ec9b0" opacity="0.4"/><rect x="2482" y="151.2" width="3" height="1.3" fill="#bbbbbb" opacity="0.4"/><rect x="2431" y="153.4" width="7" height="1.3" fill="#bbbbbb" opacity="0.4"/><rect x="2439" y="153.4" width="7" height="1.3" fill="#6a9955" opacity="0.4"/><rect x="2447" y="153.4" width="3" height="1.3" fill="#c586c0" opacity="0.4"/><rect x="2451" y="153.4" width="3" height="1.3" fill="#c586c0" opacity="0.4"/><rect x="2455" y="153.4" width="9" height="1.3" fill="#c586c0" opacity="0.4"/><rect x="2465" y="153.4" width="7" height="1.3" fill="#c586c0" opacity="0.4"/><rect x="2473" y="153.4" width="9" height="1.3" fill="#ce9178" opacity="0.4"/><rect x="2428" y="155.6" width="2" height="1.3" fill="#bbbbbb" opacity="0.4"/><rect x="2431" y="155.6" width="7" height="1.3" fill="#dcdcaa" opacity="0.4"/><rect x="2439" y="155.6" width="3" height="1.3" fill="#dcdcaa" opacity="0.4"/><rect x="2443" y="155.6" width="3" height="1.3" fill="#bbbbbb" opacity="0.4"/><rect x="2447" y="155.6" width="5" height="1.3" fill="#bbbbbb" opacity="0.4"/><rect x="2453" y="155.6" width="4" height="1.3" fill="#bbbbbb" opacity="0.4"/><rect x="2458" y="155.6" width="7" height="1.3" fill="#4ec9b0" opacity="0.4"/><rect x="2466" y="155.6" width="8" height="1.3" fill="#bbbbbb" opacity="0.4"/><rect x="2475" y="155.6" width="8" height="1.3" fill="#569cd6" opacity="0.4"/><rect x="2484" y="155.6" width="1" height="1.3" fill="#569cd6" opacity="0.4"/><rect x="2422" y="157.8" width="4" height="1.3" fill="#ce9178" opacity="0.4"/><rect x="2427" y="157.8" width="9" height="1.3" fill="#dcdcaa" opacity="0.4"/><rect x="2428" y="160.0" width="9" height="1.3" fill="#569cd6" opacity="0.4"/><rect x="2438" y="160.0" width="7" height="1.3" fill="#c586c0" opacity="0.4"/><rect x="2446" y="160.0" width="4" height="1.3" fill="#4ec9b0" opacity="0.4"/><rect x="2451" y="160.0" width="2" height="1.3" fill="#dcdcaa" opacity="0.4"/><rect x="2454" y="160.0" width="3" height="1.3" fill="#ce9178" opacity="0.4"/><rect x="2458" y="160.0" width="4" height="1.3" fill="#bbbbbb" opacity="0.4"/><rect x="2463" y="160.0" width="5" height="1.3" fill="#dcdcaa" opacity="0.4"/><rect x="2469" y="160.0" width="5" height="1.3" fill="#4ec9b0" opacity="0.4"/><rect x="2475" y="160.0" width="6" height="1.3" fill="#c586c0" opacity="0.4"/><rect x="2482" y="160.0" width="3" height="1.3" fill="#ce9178" opacity="0.4"/><rect x="2428" y="162.2" width="6" height="1.3" fill="#ce9178" opacity="0.4"/><rect x="2435" y="162.2" width="8" height="1.3" fill="#dcdcaa" opacity="0.4"/><rect x="2444" y="162.2" width="4" height="1.3" fill="#4ec9b0" opacity="0.4"/><rect x="2449" y="162.2" width="7" height="1.3" fill="#bbbbbb" opacity="0.4"/><rect x="2428" y="164.4" width="4" height="1.3" fill="#ce9178" opacity="0.4"/><rect x="2433" y="164.4" width="4" height="1.3" fill="#ce9178" opacity="0.4"/><rect x="2438" y="164.4" width="2" height="1.3" fill="#dcdcaa" opacity="0.4"/><rect x="2441" y="164.4" width="9" height="1.3" fill="#dcdcaa" opacity="0.4"/><rect x="2451" y="164.4" width="4" height="1.3" fill="#ce9178" opacity="0.4"/><rect x="2456" y="164.4" width="2" height="1.3" fill="#dcdcaa" opacity="0.4"/><rect x="2459" y="164.4" width="4" height="1.3" fill="#c586c0" opacity="0.4"/><rect x="2428" y="166.6" width="3" height="1.3" fill="#ce9178" opacity="0.4"/><rect x="2432" y="166.6" width="2" height="1.3" fill="#6a9955" opacity="0.4"/><rect x="2435" y="166.6" width="9" height="1.3" fill="#dcdcaa" opacity="0.4"/><rect x="2445" y="166.6" width="3" height="1.3" fill="#ce9178" opacity="0.4"/><rect x="2449" y="166.6" width="2" height="1.3" fill="#c586c0" opacity="0.4"/><rect x="2452" y="166.6" width="5" height="1.3" fill="#6a9955" opacity="0.4"/><rect x="2458" y="166.6" width="2" height="1.3" fill="#dcdcaa" opacity="0.4"/><rect x="2461" y="166.6" width="3" height="1.3" fill="#ce9178" opacity="0.4"/><rect x="2465" y="166.6" width="9" height="1.3" fill="#ce9178" opacity="0.4"/><rect x="2475" y="166.6" width="2" height="1.3" fill="#dcdcaa" opacity="0.4"/><rect x="2478" y="166.6" width="3" height="1.3" fill="#bbbbbb" opacity="0.4"/><rect x="2428" y="168.8" width="5" height="1.3" fill="#569cd6" opacity="0.4"/><rect x="2434" y="168.8" width="6" height="1.3" fill="#bbbbbb" opacity="0.4"/><rect x="2441" y="168.8" width="9" height="1.3" fill="#ce9178" opacity="0.4"/><rect x="2451" y="168.8" width="5" height="1.3" fill="#569cd6" opacity="0.4"/><rect x="2457" y="168.8" width="6" height="1.3" fill="#ce9178" opacity="0.4"/><rect x="2464" y="168.8" width="5" height="1.3" fill="#dcdcaa" opacity="0.4"/><rect x="2470" y="168.8" width="9" height="1.3" fill="#c586c0" opacity="0.4"/><rect x="2425" y="171.0" width="7" height="1.3" fill="#4ec9b0" opacity="0.4"/><rect x="2433" y="171.0" width="5" height="1.3" fill="#bbbbbb" opacity="0.4"/><rect x="2439" y="171.0" width="3" height="1.3" fill="#c586c0" opacity="0.4"/><rect x="2443" y="171.0" width="6" height="1.3" fill="#dcdcaa" opacity="0.4"/><rect x="2450" y="171.0" width="3" height="1.3" fill="#dcdcaa" opacity="0.4"/><rect x="2454" y="171.0" width="4" height="1.3" fill="#569cd6" opacity="0.4"/><rect x="2459" y="171.0" width="7" height="1.3" fill="#c586c0" opacity="0.4"/><rect x="2422" y="173.2" width="9" height="1.3" fill="#c586c0" opacity="0.4"/><rect x="2432" y="173.2" width="3" height="1.3" fill="#bbbbbb" opacity="0.4"/><rect x="2436" y="173.2" width="9" height="1.3" fill="#c586c0" opacity="0.4"/><rect x="2446" y="173.2" width="5" height="1.3" fill="#c586c0" opacity="0.4"/><rect x="2452" y="173.2" width="8" height="1.3" fill="#ce9178" opacity="0.4"/><rect x="2461" y="173.2" width="8" height="1.3" fill="#6a9955" opacity="0.4"/><rect x="2470" y="173.2" width="8" height="1.3" fill="#c586c0" opacity="0.4"/><rect x="2479" y="173.2" width="6" height="1.3" fill="#6a9955" opacity="0.4"/><rect x="2425" y="177.6" width="9" height="1.3" fill="#bbbbbb" opacity="0.4"/><rect x="2435" y="177.6" width="2" height="1.3" fill="#bbbbbb" opacity="0.4"/><rect x="2438" y="177.6" width="7" height="1.3" fill="#ce9178" opacity="0.4"/><rect x="2446" y="177.6" width="6" height="1.3" fill="#ce9178" opacity="0.4"/><rect x="2453" y="177.6" width="3" height="1.3" fill="#4ec9b0" opacity="0.4"/><rect x="2457" y="177.6" width="5" height="1.3" fill="#4ec9b0" opacity="0.4"/><rect x="2463" y="177.6" width="3" height="1.3" fill="#6a9955" opacity="0.4"/><rect x="2467" y="177.6" width="6" height="1.3" fill="#4ec9b0" opacity="0.4"/><rect x="2422" y="179.8" width="4" height="1.3" fill="#dcdcaa" opacity="0.4"/><rect x="2427" y="179.8" width="8" height="1.3" fill="#dcdcaa" opacity="0.4"/><rect x="2436" y="179.8" width="6" height="1.3" fill="#bbbbbb" opacity="0.4"/><rect x="2443" y="179.8" width="4" height="1.3" fill="#ce9178" opacity="0.4"/><rect x="2428" y="182.0" width="7" height="1.3" fill="#4ec9b0" opacity="0.4"/><rect x="2436" y="182.0" width="6" height="1.3" fill="#4ec9b0" opacity="0.4"/><rect x="2443" y="182.0" width="4" height="1.3" fill="#bbbbbb" opacity="0.4"/><rect x="2448" y="182.0" width="3" height="1.3" fill="#6a9955" opacity="0.4"/><rect x="2452" y="182.0" width="2" height="1.3" fill="#569cd6" opacity="0.4"/><rect x="2455" y="182.0" width="3" height="1.3" fill="#dcdcaa" opacity="0.4"/><rect x="2459" y="182.0" width="6" height="1.3" fill="#4ec9b0" opacity="0.4"/><rect x="2466" y="182.0" width="5" height="1.3" fill="#4ec9b0" opacity="0.4"/><rect x="2422" y="184.2" width="2" height="1.3" fill="#6a9955" opacity="0.4"/><rect x="2425" y="184.2" width="8" height="1.3" fill="#6a9955" opacity="0.4"/><rect x="2434" y="184.2" width="4" height="1.3" fill="#4ec9b0" opacity="0.4"/><rect x="2439" y="184.2" width="5" height="1.3" fill="#4ec9b0" opacity="0.4"/><rect x="2445" y="184.2" width="4" height="1.3" fill="#6a9955" opacity="0.4"/><rect x="2450" y="184.2" width="2" height="1.3" fill="#c586c0" opacity="0.4"/><rect x="2453" y="184.2" width="5" height="1.3" fill="#6a9955" opacity="0.4"/><rect x="2428" y="186.4" width="5" height="1.3" fill="#6a9955" opacity="0.4"/><rect x="2434" y="186.4" width="9" height="1.3" fill="#ce9178" opacity="0.4"/><rect x="2444" y="186.4" width="4" height="1.3" fill="#6a9955" opacity="0.4"/><rect x="2449" y="186.4" width="7" height="1.3" fill="#dcdcaa" opacity="0.4"/><rect x="2457" y="186.4" width="2" height="1.3" fill="#6a9955" opacity="0.4"/><rect x="2460" y="186.4" width="2" height="1.3" fill="#4ec9b0" opacity="0.4"/><rect x="2463" y="186.4" width="2" height="1.3" fill="#569cd6" opacity="0.4"/><rect x="2466" y="186.4" width="5" height="1.3" fill="#ce9178" opacity="0.4"/><rect x="2472" y="186.4" width="9" height="1.3" fill="#c586c0" opacity="0.4"/><rect x="2482" y="186.4" width="3" height="1.3" fill="#4ec9b0" opacity="0.4"/><rect x="2431" y="188.6" width="9" height="1.3" fill="#ce9178" opacity="0.4"/><rect x="2441" y="188.6" width="8" height="1.3" fill="#ce9178" opacity="0.4"/><rect x="2450" y="188.6" width="6" height="1.3" fill="#569cd6" opacity="0.4"/><rect x="2457" y="188.6" width="5" height="1.3" fill="#c586c0" opacity="0.4"/><rect x="2463" y="188.6" width="7" height="1.3" fill="#c586c0" opacity="0.4"/><rect x="2431" y="190.8" width="4" height="1.3" fill="#bbbbbb" opacity="0.4"/><rect x="2436" y="190.8" width="7" height="1.3" fill="#4ec9b0" opacity="0.4"/><rect x="2444" y="190.8" width="4" height="1.3" fill="#4ec9b0" opacity="0.4"/><rect x="2449" y="190.8" width="3" height="1.3" fill="#569cd6" opacity="0.4"/><rect x="2453" y="190.8" width="6" height="1.3" fill="#bbbbbb" opacity="0.4"/><rect x="2460" y="190.8" width="4" height="1.3" fill="#4ec9b0" opacity="0.4"/><rect x="2465" y="190.8" width="3" height="1.3" fill="#569cd6" opacity="0.4"/><rect x="2469" y="190.8" width="8" height="1.3" fill="#dcdcaa" opacity="0.4"/><rect x="2478" y="190.8" width="6" height="1.3" fill="#ce9178" opacity="0.4"/><rect x="2425" y="193.0" width="9" height="1.3" fill="#c586c0" opacity="0.4"/><rect x="2425" y="195.2" width="6" height="1.3" fill="#6a9955" opacity="0.4"/><rect x="2432" y="195.2" width="7" height="1.3" fill="#ce9178" opacity="0.4"/><rect x="2422" y="197.4" width="6" height="1.3" fill="#c586c0" opacity="0.4"/><rect x="2429" y="197.4" width="7" height="1.3" fill="#c586c0" opacity="0.4"/><rect x="2437" y="197.4" width="2" height="1.3" fill="#6a9955" opacity="0.4"/><rect x="2440" y="197.4" width="8" height="1.3" fill="#4ec9b0" opacity="0.4"/><rect x="2449" y="197.4" width="9" height="1.3" fill="#6a9955" opacity="0.4"/><rect x="2459" y="197.4" width="5" height="1.3" fill="#c586c0" opacity="0.4"/><rect x="2465" y="197.4" width="2" height="1.3" fill="#4ec9b0" opacity="0.4"/><rect x="2468" y="197.4" width="6" height="1.3" fill="#dcdcaa" opacity="0.4"/><rect x="2475" y="197.4" width="3" height="1.3" fill="#c586c0" opacity="0.4"/><rect x="2479" y="197.4" width="6" height="1.3" fill="#ce9178" opacity="0.4"/><rect x="2422" y="204.0" width="4" height="1.3" fill="#569cd6" opacity="0.4"/><rect x="2427" y="204.0" width="8" height="1.3" fill="#dcdcaa" opacity="0.4"/><rect x="2425" y="206.2" width="6" height="1.3" fill="#569cd6" opacity="0.4"/><rect x="2432" y="206.2" width="4" height="1.3" fill="#4ec9b0" opacity="0.4"/><rect x="2437" y="206.2" width="8" height="1.3" fill="#569cd6" opacity="0.4"/><rect x="2428" y="208.4" width="2" height="1.3" fill="#dcdcaa" opacity="0.4"/><rect x="2431" y="208.4" width="5" height="1.3" fill="#4ec9b0" opacity="0.4"/><rect x="2437" y="208.4" width="2" height="1.3" fill="#4ec9b0" opacity="0.4"/><rect x="2440" y="208.4" width="4" height="1.3" fill="#569cd6" opacity="0.4"/><rect x="2422" y="210.6" width="9" height="1.3" fill="#ce9178" opacity="0.4"/><rect x="2432" y="210.6" width="2" height="1.3" fill="#569cd6" opacity="0.4"/><rect x="2435" y="210.6" width="2" height="1.3" fill="#569cd6" opacity="0.4"/><rect x="2438" y="210.6" width="5" height="1.3" fill="#bbbbbb" opacity="0.4"/><rect x="2444" y="210.6" width="6" height="1.3" fill="#4ec9b0" opacity="0.4"/><rect x="2451" y="210.6" width="9" height="1.3" fill="#dcdcaa" opacity="0.4"/><rect x="2428" y="215.0" width="3" height="1.3" fill="#569cd6" opacity="0.4"/><rect x="2432" y="215.0" width="9" height="1.3" fill="#6a9955" opacity="0.4"/><rect x="2425" y="217.2" width="5" height="1.3" fill="#c586c0" opacity="0.4"/><rect x="2431" y="217.2" width="9" height="1.3" fill="#bbbbbb" opacity="0.4"/><rect x="2441" y="217.2" width="8" height="1.3" fill="#4ec9b0" opacity="0.4"/><rect x="2431" y="219.4" width="2" height="1.3" fill="#ce9178" opacity="0.4"/><rect x="2434" y="219.4" width="5" height="1.3" fill="#4ec9b0" opacity="0.4"/><rect x="2440" y="219.4" width="4" height="1.3" fill="#6a9955" opacity="0.4"/><rect x="2445" y="219.4" width="6" height="1.3" fill="#569cd6" opacity="0.4"/><rect x="2452" y="219.4" width="6" height="1.3" fill="#ce9178" opacity="0.4"/><rect x="2422" y="221.6" width="2" height="1.3" fill="#bbbbbb" opacity="0.4"/><rect x="2425" y="221.6" width="6" height="1.3" fill="#569cd6" opacity="0.4"/><rect x="2432" y="221.6" width="3" height="1.3" fill="#569cd6" opacity="0.4"/><rect x="2436" y="221.6" width="5" height="1.3" fill="#569cd6" opacity="0.4"/><rect x="2442" y="221.6" width="9" height="1.3" fill="#6a9955" opacity="0.4"/><rect x="2452" y="221.6" width="6" height="1.3" fill="#bbbbbb" opacity="0.4"/><rect x="2459" y="221.6" width="9" height="1.3" fill="#bbbbbb" opacity="0.4"/><rect x="2428" y="223.8" width="6" height="1.3" fill="#4ec9b0" opacity="0.4"/><rect x="2435" y="223.8" width="9" height="1.3" fill="#4ec9b0" opacity="0.4"/><rect x="2445" y="223.8" width="6" height="1.3" fill="#bbbbbb" opacity="0.4"/><rect x="2425" y="228.2" width="8" height="1.3" fill="#c586c0" opacity="0.4"/><rect x="2434" y="228.2" width="5" height="1.3" fill="#4ec9b0" opacity="0.4"/><rect x="2440" y="228.2" width="3" height="1.3" fill="#c586c0" opacity="0.4"/><rect x="2444" y="228.2" width="6" height="1.3" fill="#6a9955" opacity="0.4"/><rect x="2431" y="230.4" width="6" height="1.3" fill="#4ec9b0" opacity="0.4"/><rect x="2438" y="230.4" width="7" height="1.3" fill="#c586c0" opacity="0.4"/><rect x="2446" y="230.4" width="9" height="1.3" fill="#bbbbbb" opacity="0.4"/><rect x="2456" y="230.4" width="8" height="1.3" fill="#4ec9b0" opacity="0.4"/><rect x="2465" y="230.4" width="4" height="1.3" fill="#4ec9b0" opacity="0.4"/><rect x="2470" y="230.4" width="9" height="1.3" fill="#569cd6" opacity="0.4"/><rect x="2425" y="232.6" width="4" height="1.3" fill="#bbbbbb" opacity="0.4"/><rect x="2430" y="232.6" width="7" height="1.3" fill="#bbbbbb" opacity="0.4"/><rect x="2438" y="232.6" width="7" height="1.3" fill="#4ec9b0" opacity="0.4"/><rect x="2446" y="232.6" width="7" height="1.3" fill="#4ec9b0" opacity="0.4"/><rect x="2454" y="232.6" width="7" height="1.3" fill="#dcdcaa" opacity="0.4"/><rect x="2462" y="232.6" width="7" height="1.3" fill="#dcdcaa" opacity="0.4"/><rect x="2470" y="232.6" width="8" height="1.3" fill="#4ec9b0" opacity="0.4"/><rect x="2422" y="234.8" width="2" height="1.3" fill="#569cd6" opacity="0.4"/><rect x="2425" y="234.8" width="6" height="1.3" fill="#6a9955" opacity="0.4"/><rect x="2432" y="234.8" width="7" height="1.3" fill="#4ec9b0" opacity="0.4"/><rect x="2440" y="234.8" width="8" height="1.3" fill="#bbbbbb" opacity="0.4"/><rect x="2449" y="234.8" width="3" height="1.3" fill="#6a9955" opacity="0.4"/><rect x="2453" y="234.8" width="8" height="1.3" fill="#dcdcaa" opacity="0.4"/><rect x="2462" y="234.8" width="6" height="1.3" fill="#dcdcaa" opacity="0.4"/><rect x="2469" y="234.8" width="2" height="1.3" fill="#6a9955" opacity="0.4"/><rect x="2472" y="234.8" width="3" height="1.3" fill="#4ec9b0" opacity="0.4"/><rect x="2425" y="237.0" width="4" height="1.3" fill="#c586c0" opacity="0.4"/><rect x="2430" y="237.0" width="6" height="1.3" fill="#bbbbbb" opacity="0.4"/><rect x="2437" y="237.0" width="7" height="1.3" fill="#c586c0" opacity="0.4"/><rect x="2445" y="237.0" width="7" height="1.3" fill="#dcdcaa" opacity="0.4"/><rect x="2453" y="237.0" width="8" height="1.3" fill="#4ec9b0" opacity="0.4"/><rect x="2462" y="237.0" width="8" height="1.3" fill="#ce9178" opacity="0.4"/><rect x="2471" y="237.0" width="5" height="1.3" fill="#569cd6" opacity="0.4"/><rect x="2425" y="241.4" width="4" height="1.3" fill="#569cd6" opacity="0.4"/><rect x="2430" y="241.4" width="6" height="1.3" fill="#bbbbbb" opacity="0.4"/><rect x="2437" y="241.4" width="2" height="1.3" fill="#ce9178" opacity="0.4"/><rect x="2440" y="241.4" width="4" height="1.3" fill="#c586c0" opacity="0.4"/><rect x="2445" y="241.4" width="9" height="1.3" fill="#bbbbbb" opacity="0.4"/><rect x="2455" y="241.4" width="7" height="1.3" fill="#6a9955" opacity="0.4"/><rect x="2431" y="243.6" width="6" height="1.3" fill="#bbbbbb" opacity="0.4"/><rect x="2438" y="243.6" width="5" height="1.3" fill="#6a9955" opacity="0.4"/><rect x="2444" y="243.6" width="9" height="1.3" fill="#ce9178" opacity="0.4"/><rect x="2454" y="243.6" width="8" height="1.3" fill="#4ec9b0" opacity="0.4"/><rect x="2463" y="243.6" width="4" height="1.3" fill="#569cd6" opacity="0.4"/><rect x="2468" y="243.6" width="4" height="1.3" fill="#4ec9b0" opacity="0.4"/><rect x="2473" y="243.6" width="5" height="1.3" fill="#ce9178" opacity="0.4"/><rect x="2479" y="243.6" width="6" height="1.3" fill="#ce9178" opacity="0.4"/><rect x="2425" y="245.8" width="9" height="1.3" fill="#bbbbbb" opacity="0.4"/><rect x="2435" y="245.8" width="4" height="1.3" fill="#ce9178" opacity="0.4"/><rect x="2440" y="245.8" width="5" height="1.3" fill="#c586c0" opacity="0.4"/><rect x="2446" y="245.8" width="3" height="1.3" fill="#c586c0" opacity="0.4"/><rect x="2450" y="245.8" width="7" height="1.3" fill="#ce9178" opacity="0.4"/><rect x="2458" y="245.8" width="3" height="1.3" fill="#6a9955" opacity="0.4"/><rect x="2462" y="245.8" width="5" height="1.3" fill="#6a9955" opacity="0.4"/><rect x="2468" y="245.8" width="6" height="1.3" fill="#dcdcaa" opacity="0.4"/><rect x="2475" y="245.8" width="5" height="1.3" fill="#4ec9b0" opacity="0.4"/><rect x="2425" y="248.0" width="8" height="1.3" fill="#569cd6" opacity="0.4"/><rect x="2434" y="248.0" width="5" height="1.3" fill="#bbbbbb" opacity="0.4"/><rect x="2440" y="248.0" width="6" height="1.3" fill="#6a9955" opacity="0.4"/><rect x="2447" y="248.0" width="2" height="1.3" fill="#bbbbbb" opacity="0.4"/><rect x="2450" y="248.0" width="6" height="1.3" fill="#ce9178" opacity="0.4"/><rect x="2422" y="250.2" width="5" height="1.3" fill="#4ec9b0" opacity="0.4"/><rect x="2428" y="250.2" width="6" height="1.3" fill="#c586c0" opacity="0.4"/><rect x="2435" y="250.2" width="8" height="1.3" fill="#bbbbbb" opacity="0.4"/><rect x="2444" y="250.2" width="9" height="1.3" fill="#bbbbbb" opacity="0.4"/><rect x="2454" y="250.2" width="6" height="1.3" fill="#dcdcaa" opacity="0.4"/><rect x="2461" y="250.2" width="2" height="1.3" fill="#c586c0" opacity="0.4"/><rect x="2464" y="250.2" width="2" height="1.3" fill="#bbbbbb" opacity="0.4"/><rect x="2467" y="250.2" width="9" height="1.3" fill="#ce9178" opacity="0.4"/><rect x="2422" y="252.4" width="9" height="1.3" fill="#bbbbbb" opacity="0.4"/><rect x="2432" y="252.4" width="5" height="1.3" fill="#dcdcaa" opacity="0.4"/><rect x="2438" y="252.4" width="3" height="1.3" fill="#c586c0" opacity="0.4"/><rect x="2442" y="252.4" width="4" height="1.3" fill="#c586c0" opacity="0.4"/><rect x="2447" y="252.4" width="3" height="1.3" fill="#dcdcaa" opacity="0.4"/><rect x="2451" y="252.4" width="9" height="1.3" fill="#4ec9b0" opacity="0.4"/><rect x="2422" y="254.6" width="4" height="1.3" fill="#c586c0" opacity="0.4"/><rect x="2427" y="254.6" width="2" height="1.3" fill="#569cd6" opacity="0.4"/><rect x="2422" y="256.8" width="6" height="1.3" fill="#ce9178" opacity="0.4"/><rect x="2429" y="256.8" width="8" height="1.3" fill="#569cd6" opacity="0.4"/><rect x="2438" y="256.8" width="3" height="1.3" fill="#4ec9b0" opacity="0.4"/><rect x="2442" y="256.8" width="3" height="1.3" fill="#6a9955" opacity="0.4"/><rect x="2446" y="256.8" width="5" height="1.3" fill="#bbbbbb" opacity="0.4"/><rect x="2452" y="256.8" width="6" height="1.3" fill="#c586c0" opacity="0.4"/><rect x="2459" y="256.8" width="2" height="1.3" fill="#4ec9b0" opacity="0.4"/><rect x="2462" y="256.8" width="6" height="1.3" fill="#bbbbbb" opacity="0.4"/><rect x="2469" y="256.8" width="6" height="1.3" fill="#6a9955" opacity="0.4"/><rect x="2422" y="259.0" width="5" height="1.3" fill="#ce9178" opacity="0.4"/><rect x="2428" y="259.0" width="5" height="1.3" fill="#4ec9b0" opacity="0.4"/><rect x="2434" y="259.0" width="8" height="1.3" fill="#569cd6" opacity="0.4"/><rect x="2443" y="259.0" width="6" height="1.3" fill="#4ec9b0" opacity="0.4"/><rect x="2450" y="259.0" width="2" height="1.3" fill="#c586c0" opacity="0.4"/><rect x="2453" y="259.0" width="9" height="1.3" fill="#569cd6" opacity="0.4"/><rect x="2422" y="261.2" width="5" height="1.3" fill="#569cd6" opacity="0.4"/><rect x="2428" y="261.2" width="8" height="1.3" fill="#6a9955" opacity="0.4"/><rect x="2437" y="261.2" width="5" height="1.3" fill="#bbbbbb" opacity="0.4"/><rect x="2443" y="261.2" width="2" height="1.3" fill="#569cd6" opacity="0.4"/><rect x="2425" y="263.4" width="8" height="1.3" fill="#c586c0" opacity="0.4"/><rect x="2434" y="263.4" width="2" height="1.3" fill="#dcdcaa" opacity="0.4"/><rect x="2437" y="263.4" width="6" height="1.3" fill="#569cd6" opacity="0.4"/><rect x="2444" y="263.4" width="3" height="1.3" fill="#c586c0" opacity="0.4"/><rect x="2448" y="263.4" width="9" height="1.3" fill="#c586c0" opacity="0.4"/><rect x="2422" y="265.6" width="9" height="1.3" fill="#c586c0" opacity="0.4"/><rect x="2432" y="265.6" width="6" height="1.3" fill="#dcdcaa" opacity="0.4"/><rect x="2439" y="265.6" width="6" height="1.3" fill="#4ec9b0" opacity="0.4"/><rect x="2425" y="267.8" width="4" height="1.3" fill="#c586c0" opacity="0.4"/><rect x="2430" y="267.8" width="9" height="1.3" fill="#bbbbbb" opacity="0.4"/><rect x="2440" y="267.8" width="2" height="1.3" fill="#ce9178" opacity="0.4"/><rect x="2443" y="267.8" width="4" height="1.3" fill="#bbbbbb" opacity="0.4"/><rect x="2448" y="267.8" width="2" height="1.3" fill="#c586c0" opacity="0.4"/><rect x="2451" y="267.8" width="2" height="1.3" fill="#ce9178" opacity="0.4"/><rect x="2454" y="267.8" width="4" height="1.3" fill="#bbbbbb" opacity="0.4"/><rect x="2459" y="267.8" width="2" height="1.3" fill="#569cd6" opacity="0.4"/><rect x="2462" y="267.8" width="2" height="1.3" fill="#c586c0" opacity="0.4"/><rect x="2465" y="267.8" width="8" height="1.3" fill="#bbbbbb" opacity="0.4"/><rect x="2425" y="270.0" width="3" height="1.3" fill="#4ec9b0" opacity="0.4"/><rect x="2429" y="270.0" width="4" height="1.3" fill="#6a9955" opacity="0.4"/><rect x="2434" y="270.0" width="5" height="1.3" fill="#c586c0" opacity="0.4"/><rect x="2440" y="270.0" width="9" height="1.3" fill="#4ec9b0" opacity="0.4"/><rect x="2450" y="270.0" width="6" height="1.3" fill="#569cd6" opacity="0.4"/><rect x="2457" y="270.0" width="8" height="1.3" fill="#dcdcaa" opacity="0.4"/><rect x="2466" y="270.0" width="7" height="1.3" fill="#6a9955" opacity="0.4"/><rect x="2474" y="270.0" width="9" height="1.3" fill="#c586c0" opacity="0.4"/><rect x="2422" y="278.8" width="5" height="1.3" fill="#bbbbbb" opacity="0.4"/><rect x="2428" y="278.8" width="7" height="1.3" fill="#dcdcaa" opacity="0.4"/><rect x="2436" y="278.8" width="6" height="1.3" fill="#dcdcaa" opacity="0.4"/><rect x="2443" y="278.8" width="8" height="1.3" fill="#4ec9b0" opacity="0.4"/><rect x="2452" y="278.8" width="2" height="1.3" fill="#569cd6" opacity="0.4"/><rect x="2455" y="278.8" width="9" height="1.3" fill="#c586c0" opacity="0.4"/><rect x="2425" y="281.0" width="7" height="1.3" fill="#6a9955" opacity="0.4"/><rect x="2433" y="281.0" width="9" height="1.3" fill="#4ec9b0" opacity="0.4"/><rect x="2443" y="281.0" width="8" height="1.3" fill="#c586c0" opacity="0.4"/><rect x="2425" y="283.2" width="8" height="1.3" fill="#4ec9b0" opacity="0.4"/><rect x="2434" y="283.2" width="9" height="1.3" fill="#4ec9b0" opacity="0.4"/><rect x="2422" y="285.4" width="5" height="1.3" fill="#569cd6" opacity="0.4"/><rect x="2428" y="285.4" width="3" height="1.3" fill="#ce9178" opacity="0.4"/><rect x="2432" y="285.4" width="7" height="1.3" fill="#6a9955" opacity="0.4"/><rect x="2440" y="285.4" width="6" height="1.3" fill="#6a9955" opacity="0.4"/><rect x="2428" y="287.6" width="6" height="1.3" fill="#569cd6" opacity="0.4"/><rect x="2435" y="287.6" width="7" height="1.3" fill="#6a9955" opacity="0.4"/><rect x="2431" y="289.8" width="3" height="1.3" fill="#4ec9b0" opacity="0.4"/><rect x="2435" y="289.8" width="5" height="1.3" fill="#4ec9b0" opacity="0.4"/><rect x="2441" y="289.8" width="9" height="1.3" fill="#569cd6" opacity="0.4"/><rect x="2451" y="289.8" width="9" height="1.3" fill="#dcdcaa" opacity="0.4"/><rect x="2461" y="289.8" width="8" height="1.3" fill="#dcdcaa" opacity="0.4"/><rect x="2470" y="289.8" width="6" height="1.3" fill="#bbbbbb" opacity="0.4"/><rect x="2477" y="289.8" width="8" height="1.3" fill="#c586c0" opacity="0.4"/><rect x="2422" y="292.0" width="6" height="1.3" fill="#dcdcaa" opacity="0.4"/><rect x="2429" y="292.0" width="4" height="1.3" fill="#ce9178" opacity="0.4"/><rect x="2425" y="294.2" width="7" height="1.3" fill="#dcdcaa" opacity="0.4"/><rect x="2433" y="294.2" width="3" height="1.3" fill="#ce9178" opacity="0.4"/><rect x="2437" y="294.2" width="5" height="1.3" fill="#bbbbbb" opacity="0.4"/><rect x="2443" y="294.2" width="4" height="1.3" fill="#c586c0" opacity="0.4"/><rect x="2448" y="294.2" width="8" height="1.3" fill="#4ec9b0" opacity="0.4"/><rect x="2457" y="294.2" width="2" height="1.3" fill="#bbbbbb" opacity="0.4"/><rect x="2460" y="294.2" width="7" height="1.3" fill="#c586c0" opacity="0.4"/><rect x="2422" y="296.4" width="6" height="1.3" fill="#ce9178" opacity="0.4"/><rect x="2429" y="296.4" width="3" height="1.3" fill="#c586c0" opacity="0.4"/><rect x="2433" y="296.4" width="3" height="1.3" fill="#bbbbbb" opacity="0.4"/><rect x="2431" y="298.6" width="9" height="1.3" fill="#c586c0" opacity="0.4"/><rect x="2441" y="298.6" width="5" height="1.3" fill="#c586c0" opacity="0.4"/><rect x="2447" y="298.6" width="8" height="1.3" fill="#bbbbbb" opacity="0.4"/><rect x="2456" y="298.6" width="5" height="1.3" fill="#569cd6" opacity="0.4"/><rect x="2462" y="298.6" width="3" height="1.3" fill="#dcdcaa" opacity="0.4"/><rect x="2466" y="298.6" width="6" height="1.3" fill="#6a9955" opacity="0.4"/><rect x="2473" y="298.6" width="6" height="1.3" fill="#ce9178" opacity="0.4"/><rect x="2480" y="298.6" width="5" height="1.3" fill="#6a9955" opacity="0.4"/><rect x="2425" y="300.8" width="9" height="1.3" fill="#c586c0" opacity="0.4"/><rect x="2435" y="300.8" width="4" height="1.3" fill="#c586c0" opacity="0.4"/><rect x="2440" y="300.8" width="5" height="1.3" fill="#c586c0" opacity="0.4"/><rect x="2428" y="303.0" width="7" height="1.3" fill="#4ec9b0" opacity="0.4"/><rect x="2436" y="303.0" width="8" height="1.3" fill="#6a9955" opacity="0.4"/><rect x="2445" y="303.0" width="5" height="1.3" fill="#ce9178" opacity="0.4"/><rect x="2431" y="305.2" width="3" height="1.3" fill="#569cd6" opacity="0.4"/><rect x="2435" y="305.2" width="9" height="1.3" fill="#4ec9b0" opacity="0.4"/><rect x="2445" y="305.2" width="3" height="1.3" fill="#4ec9b0" opacity="0.4"/><rect x="2449" y="305.2" width="9" height="1.3" fill="#dcdcaa" opacity="0.4"/><rect x="2459" y="305.2" width="5" height="1.3" fill="#dcdcaa" opacity="0.4"/><rect x="2465" y="305.2" width="9" height="1.3" fill="#6a9955" opacity="0.4"/><rect x="2475" y="305.2" width="2" height="1.3" fill="#6a9955" opacity="0.4"/><rect x="2478" y="305.2" width="5" height="1.3" fill="#4ec9b0" opacity="0.4"/><rect x="2484" y="305.2" width="1" height="1.3" fill="#c586c0" opacity="0.4"/><rect x="2428" y="307.4" width="3" height="1.3" fill="#6a9955" opacity="0.4"/><rect x="2432" y="307.4" width="4" height="1.3" fill="#bbbbbb" opacity="0.4"/><rect x="2437" y="307.4" width="6" height="1.3" fill="#dcdcaa" opacity="0.4"/><rect x="2444" y="307.4" width="2" height="1.3" fill="#4ec9b0" opacity="0.4"/><rect x="2447" y="307.4" width="7" height="1.3" fill="#c586c0" opacity="0.4"/><rect x="2422" y="311.8" width="6" height="1.3" fill="#4ec9b0" opacity="0.4"/><rect x="2429" y="311.8" width="5" height="1.3" fill="#dcdcaa" opacity="0.4"/><rect x="2435" y="311.8" width="2" height="1.3" fill="#dcdcaa" opacity="0.4"/><rect x="2438" y="311.8" width="7" height="1.3" fill="#bbbbbb" opacity="0.4"/><rect x="2422" y="314.0" width="6" height="1.3" fill="#4ec9b0" opacity="0.4"/><rect x="2429" y="314.0" width="5" height="1.3" fill="#4ec9b0" opacity="0.4"/><rect x="2435" y="314.0" width="9" height="1.3" fill="#ce9178" opacity="0.4"/><rect x="2445" y="314.0" width="9" height="1.3" fill="#4ec9b0" opacity="0.4"/><rect x="2455" y="314.0" width="8" height="1.3" fill="#4ec9b0" opacity="0.4"/><rect x="2464" y="314.0" width="8" height="1.3" fill="#569cd6" opacity="0.4"/><rect x="2431" y="316.2" width="3" height="1.3" fill="#569cd6" opacity="0.4"/><rect x="2435" y="316.2" width="4" height="1.3" fill="#bbbbbb" opacity="0.4"/><rect x="2440" y="316.2" width="6" height="1.3" fill="#bbbbbb" opacity="0.4"/><rect x="2447" y="316.2" width="6" height="1.3" fill="#569cd6" opacity="0.4"/><rect x="2454" y="316.2" width="6" height="1.3" fill="#bbbbbb" opacity="0.4"/><rect x="2461" y="316.2" width="2" height="1.3" fill="#6a9955" opacity="0.4"/><rect x="2464" y="316.2" width="7" height="1.3" fill="#bbbbbb" opacity="0.4"/><rect x="2472" y="316.2" width="8" height="1.3" fill="#4ec9b0" opacity="0.4"/><rect x="2425" y="318.4" width="5" height="1.3" fill="#bbbbbb" opacity="0.4"/><rect x="2431" y="318.4" width="8" height="1.3" fill="#c586c0" opacity="0.4"/><rect x="2440" y="318.4" width="2" height="1.3" fill="#bbbbbb" opacity="0.4"/><rect x="2443" y="318.4" width="4" height="1.3" fill="#bbbbbb" opacity="0.4"/><rect x="2448" y="318.4" width="3" height="1.3" fill="#dcdcaa" opacity="0.4"/><rect x="2452" y="318.4" width="3" height="1.3" fill="#bbbbbb" opacity="0.4"/><rect x="2456" y="318.4" width="7" height="1.3" fill="#bbbbbb" opacity="0.4"/><rect x="2464" y="318.4" width="4" height="1.3" fill="#c586c0" opacity="0.4"/><rect x="2469" y="318.4" width="2" height="1.3" fill="#4ec9b0" opacity="0.4"/><rect x="2472" y="318.4" width="4" height="1.3" fill="#569cd6" opacity="0.4"/><rect x="2425" y="320.6" width="7" height="1.3" fill="#569cd6" opacity="0.4"/><rect x="2433" y="320.6" width="4" height="1.3" fill="#c586c0" opacity="0.4"/><rect x="2422" y="322.8" width="4" height="1.3" fill="#4ec9b0" opacity="0.4"/><rect x="2427" y="322.8" width="3" height="1.3" fill="#bbbbbb" opacity="0.4"/><rect x="2431" y="322.8" width="9" height="1.3" fill="#dcdcaa" opacity="0.4"/><rect x="2441" y="322.8" width="5" height="1.3" fill="#6a9955" opacity="0.4"/><rect x="2447" y="322.8" width="4" height="1.3" fill="#dcdcaa" opacity="0.4"/><rect x="2452" y="322.8" width="2" height="1.3" fill="#bbbbbb" opacity="0.4"/><rect x="2455" y="322.8" width="7" height="1.3" fill="#4ec9b0" opacity="0.4"/><rect x="2431" y="325.0" width="3" height="1.3" fill="#569cd6" opacity="0.4"/><rect x="2435" y="325.0" width="4" height="1.3" fill="#569cd6" opacity="0.4"/><rect x="2440" y="325.0" width="5" height="1.3" fill="#ce9178" opacity="0.4"/><rect x="2446" y="325.0" width="8" height="1.3" fill="#ce9178" opacity="0.4"/><rect x="2455" y="325.0" width="5" height="1.3" fill="#dcdcaa" opacity="0.4"/><rect x="2461" y="325.0" width="9" height="1.3" fill="#c586c0" opacity="0.4"/><rect x="2422" y="327.2" width="4" height="1.3" fill="#bbbbbb" opacity="0.4"/><rect x="2427" y="327.2" width="7" height="1.3" fill="#4ec9b0" opacity="0.4"/><rect x="2435" y="327.2" width="4" height="1.3" fill="#c586c0" opacity="0.4"/><rect x="2440" y="327.2" width="5" height="1.3" fill="#4ec9b0" opacity="0.4"/><rect x="2446" y="327.2" width="2" height="1.3" fill="#569cd6" opacity="0.4"/><rect x="2449" y="327.2" width="7" height="1.3" fill="#4ec9b0" opacity="0.4"/><rect x="2425" y="329.4" width="6" height="1.3" fill="#569cd6" opacity="0.4"/><rect x="2432" y="329.4" width="8" height="1.3" fill="#6a9955" opacity="0.4"/><rect x="2441" y="329.4" width="5" height="1.3" fill="#bbbbbb" opacity="0.4"/><rect x="2447" y="329.4" width="8" height="1.3" fill="#569cd6" opacity="0.4"/><rect x="2456" y="329.4" width="7" height="1.3" fill="#bbbbbb" opacity="0.4"/><rect x="2464" y="329.4" width="9" height="1.3" fill="#c586c0" opacity="0.4"/><rect x="2425" y="333.8" width="5" height="1.3" fill="#bbbbbb" opacity="0.4"/><rect x="2431" y="333.8" width="9" height="1.3" fill="#dcdcaa" opacity="0.4"/><rect x="2441" y="333.8" width="4" height="1.3" fill="#dcdcaa" opacity="0.4"/><rect x="2446" y="333.8" width="9" height="1.3" fill="#bbbbbb" opacity="0.4"/><rect x="2456" y="333.8" width="3" height="1.3" fill="#4ec9b0" opacity="0.4"/><rect x="2460" y="333.8" width="4" height="1.3" fill="#6a9955" opacity="0.4"/><rect x="2422" y="336.0" width="9" height="1.3" fill="#ce9178" opacity="0.4"/><rect x="2432" y="336.0" width="2" height="1.3" fill="#4ec9b0" opacity="0.4"/><rect x="2435" y="336.0" width="4" height="1.3" fill="#4ec9b0" opacity="0.4"/><rect x="2440" y="336.0" width="7" height="1.3" fill="#dcdcaa" opacity="0.4"/><rect x="2448" y="336.0" width="3" height="1.3" fill="#4ec9b0" opacity="0.4"/><rect x="2452" y="336.0" width="8" height="1.3" fill="#569cd6" opacity="0.4"/><rect x="2461" y="336.0" width="4" height="1.3" fill="#4ec9b0" opacity="0.4"/><rect x="2466" y="336.0" width="3" height="1.3" fill="#ce9178" opacity="0.4"/><rect x="2470" y="336.0" width="3" height="1.3" fill="#c586c0" opacity="0.4"/><rect x="2474" y="336.0" width="4" height="1.3" fill="#bbbbbb" opacity="0.4"/><rect x="2479" y="336.0" width="6" height="1.3" fill="#dcdcaa" opacity="0.4"/><rect x="2422" y="338.2" width="5" height="1.3" fill="#4ec9b0" opacity="0.4"/><rect x="2428" y="338.2" width="7" height="1.3" fill="#ce9178" opacity="0.4"/><rect x="2436" y="338.2" width="6" height="1.3" fill="#c586c0" opacity="0.4"/><rect x="2443" y="338.2" width="7" height="1.3" fill="#ce9178" opacity="0.4"/><rect x="2451" y="338.2" width="6" height="1.3" fill="#dcdcaa" opacity="0.4"/><rect x="2458" y="338.2" width="9" height="1.3" fill="#c586c0" opacity="0.4"/><rect x="2468" y="338.2" width="6" height="1.3" fill="#ce9178" opacity="0.4"/><rect x="2425" y="340.4" width="6" height="1.3" fill="#ce9178" opacity="0.4"/><rect x="2432" y="340.4" width="5" height="1.3" fill="#6a9955" opacity="0.4"/><rect x="2438" y="340.4" width="7" height="1.3" fill="#4ec9b0" opacity="0.4"/><rect x="2425" y="342.6" width="6" height="1.3" fill="#569cd6" opacity="0.4"/><rect x="2432" y="342.6" width="7" height="1.3" fill="#bbbbbb" opacity="0.4"/><rect x="2440" y="342.6" width="4" height="1.3" fill="#dcdcaa" opacity="0.4"/><rect x="2422" y="344.8" width="2" height="1.3" fill="#569cd6" opacity="0.4"/><rect x="2425" y="344.8" width="7" height="1.3" fill="#dcdcaa" opacity="0.4"/><rect x="2433" y="344.8" width="9" height="1.3" fill="#ce9178" opacity="0.4"/><rect x="2443" y="344.8" width="3" height="1.3" fill="#6a9955" opacity="0.4"/><rect x="2447" y="344.8" width="8" height="1.3" fill="#569cd6" opacity="0.4"/><rect x="2456" y="344.8" width="7" height="1.3" fill="#6a9955" opacity="0.4"/><rect x="2464" y="344.8" width="8" height="1.3" fill="#6a9955" opacity="0.4"/><rect x="2473" y="344.8" width="4" height="1.3" fill="#6a9955" opacity="0.4"/><rect x="2478" y="344.8" width="7" height="1.3" fill="#dcdcaa" opacity="0.4"/><rect x="2428" y="349.2" width="2" height="1.3" fill="#6a9955" opacity="0.4"/><rect x="2431" y="349.2" width="6" height="1.3" fill="#6a9955" opacity="0.4"/><rect x="2438" y="349.2" width="7" height="1.3" fill="#569cd6" opacity="0.4"/><rect x="2446" y="349.2" width="2" height="1.3" fill="#569cd6" opacity="0.4"/><rect x="2449" y="349.2" width="2" height="1.3" fill="#c586c0" opacity="0.4"/><rect x="2452" y="349.2" width="4" height="1.3" fill="#6a9955" opacity="0.4"/><rect x="2457" y="349.2" width="8" height="1.3" fill="#bbbbbb" opacity="0.4"/><rect x="2466" y="349.2" width="7" height="1.3" fill="#4ec9b0" opacity="0.4"/><rect x="2474" y="349.2" width="4" height="1.3" fill="#bbbbbb" opacity="0.4"/><rect x="2479" y="349.2" width="5" height="1.3" fill="#ce9178" opacity="0.4"/><rect x="2422" y="351.4" width="2" height="1.3" fill="#ce9178" opacity="0.4"/><rect x="2425" y="351.4" width="7" height="1.3" fill="#6a9955" opacity="0.4"/><rect x="2422" y="355.8" width="6" height="1.3" fill="#ce9178" opacity="0.4"/><rect x="2429" y="355.8" width="4" height="1.3" fill="#c586c0" opacity="0.4"/><rect x="2434" y="355.8" width="7" height="1.3" fill="#ce9178" opacity="0.4"/><rect x="2442" y="355.8" width="9" height="1.3" fill="#c586c0" opacity="0.4"/><rect x="2452" y="355.8" width="4" height="1.3" fill="#4ec9b0" opacity="0.4"/><rect x="2422" y="358.0" width="4" height="1.3" fill="#bbbbbb" opacity="0.4"/><rect x="2427" y="358.0" width="3" height="1.3" fill="#4ec9b0" opacity="0.4"/><rect x="2431" y="358.0" width="4" height="1.3" fill="#dcdcaa" opacity="0.4"/><rect x="2436" y="358.0" width="6" height="1.3" fill="#bbbbbb" opacity="0.4"/><rect x="2443" y="358.0" width="6" height="1.3" fill="#4ec9b0" opacity="0.4"/><rect x="2450" y="358.0" width="2" height="1.3" fill="#569cd6" opacity="0.4"/><rect x="2453" y="358.0" width="7" height="1.3" fill="#ce9178" opacity="0.4"/><rect x="2461" y="358.0" width="9" height="1.3" fill="#ce9178" opacity="0.4"/><rect x="2471" y="358.0" width="9" height="1.3" fill="#c586c0" opacity="0.4"/><rect x="2422" y="360.2" width="2" height="1.3" fill="#ce9178" opacity="0.4"/><rect x="2425" y="360.2" width="2" height="1.3" fill="#bbbbbb" opacity="0.4"/><rect x="2428" y="360.2" width="4" height="1.3" fill="#c586c0" opacity="0.4"/><rect x="2422" y="362.4" width="5" height="1.3" fill="#c586c0" opacity="0.4"/><rect x="2428" y="362.4" width="8" height="1.3" fill="#c586c0" opacity="0.4"/><rect x="2431" y="364.6" width="8" height="1.3" fill="#dcdcaa" opacity="0.4"/><rect x="2440" y="364.6" width="4" height="1.3" fill="#ce9178" opacity="0.4"/><rect x="2445" y="364.6" width="6" height="1.3" fill="#4ec9b0" opacity="0.4"/><rect x="2452" y="364.6" width="6" height="1.3" fill="#569cd6" opacity="0.4"/><rect x="2459" y="364.6" width="2" height="1.3" fill="#569cd6" opacity="0.4"/><rect x="2462" y="364.6" width="9" height="1.3" fill="#569cd6" opacity="0.4"/><rect x="2425" y="366.8" width="8" height="1.3" fill="#569cd6" opacity="0.4"/><rect x="2434" y="366.8" width="9" height="1.3" fill="#4ec9b0" opacity="0.4"/><rect x="2444" y="366.8" width="9" height="1.3" fill="#c586c0" opacity="0.4"/><rect x="2454" y="366.8" width="5" height="1.3" fill="#4ec9b0" opacity="0.4"/><rect x="2460" y="366.8" width="6" height="1.3" fill="#c586c0" opacity="0.4"/><rect x="2467" y="366.8" width="2" height="1.3" fill="#4ec9b0" opacity="0.4"/><rect x="2470" y="366.8" width="7" height="1.3" fill="#569cd6" opacity="0.4"/><rect x="2478" y="366.8" width="6" height="1.3" fill="#569cd6" opacity="0.4"/><rect x="2431" y="371.2" width="6" height="1.3" fill="#6a9955" opacity="0.4"/><rect x="2438" y="371.2" width="5" height="1.3" fill="#4ec9b0" opacity="0.4"/><rect x="2444" y="371.2" width="2" height="1.3" fill="#c586c0" opacity="0.4"/><rect x="2447" y="371.2" width="6" height="1.3" fill="#c586c0" opacity="0.4"/><rect x="2454" y="371.2" width="5" height="1.3" fill="#c586c0" opacity="0.4"/><rect x="2460" y="371.2" width="7" height="1.3" fill="#c586c0" opacity="0.4"/><rect x="2425" y="373.4" width="5" height="1.3" fill="#bbbbbb" opacity="0.4"/><rect x="2431" y="373.4" width="9" height="1.3" fill="#bbbbbb" opacity="0.4"/><rect x="2441" y="373.4" width="2" height="1.3" fill="#dcdcaa" opacity="0.4"/><rect x="2444" y="373.4" width="2" height="1.3" fill="#bbbbbb" opacity="0.4"/><rect x="2447" y="373.4" width="5" height="1.3" fill="#ce9178" opacity="0.4"/><rect x="2453" y="373.4" width="6" height="1.3" fill="#dcdcaa" opacity="0.4"/><rect x="2460" y="373.4" width="5" height="1.3" fill="#bbbbbb" opacity="0.4"/><rect x="2466" y="373.4" width="3" height="1.3" fill="#ce9178" opacity="0.4"/><rect x="2470" y="373.4" width="4" height="1.3" fill="#c586c0" opacity="0.4"/><rect x="2422" y="380.0" width="4" height="1.3" fill="#569cd6" opacity="0.4"/><rect x="2427" y="380.0" width="2" height="1.3" fill="#4ec9b0" opacity="0.4"/><rect x="2430" y="380.0" width="2" height="1.3" fill="#c586c0" opacity="0.4"/><rect x="2433" y="380.0" width="2" height="1.3" fill="#569cd6" opacity="0.4"/><rect x="2436" y="380.0" width="3" height="1.3" fill="#569cd6" opacity="0.4"/><rect x="2440" y="380.0" width="2" height="1.3" fill="#4ec9b0" opacity="0.4"/><rect x="2443" y="380.0" width="7" height="1.3" fill="#c586c0" opacity="0.4"/><rect x="2451" y="380.0" width="3" height="1.3" fill="#dcdcaa" opacity="0.4"/><rect x="2431" y="382.2" width="8" height="1.3" fill="#4ec9b0" opacity="0.4"/><rect x="2440" y="382.2" width="5" height="1.3" fill="#c586c0" opacity="0.4"/><rect x="2446" y="382.2" width="5" height="1.3" fill="#4ec9b0" opacity="0.4"/><rect x="2452" y="382.2" width="2" height="1.3" fill="#4ec9b0" opacity="0.4"/><rect x="2455" y="382.2" width="3" height="1.3" fill="#dcdcaa" opacity="0.4"/><rect x="2459" y="382.2" width="6" height="1.3" fill="#bbbbbb" opacity="0.4"/><rect x="2466" y="382.2" width="3" height="1.3" fill="#c586c0" opacity="0.4"/><rect x="2470" y="382.2" width="3" height="1.3" fill="#dcdcaa" opacity="0.4"/><rect x="2474" y="382.2" width="5" height="1.3" fill="#6a9955" opacity="0.4"/><rect x="2480" y="382.2" width="5" height="1.3" fill="#6a9955" opacity="0.4"/><rect x="2422" y="384.4" width="6" height="1.3" fill="#6a9955" opacity="0.4"/><rect x="2429" y="384.4" width="2" height="1.3" fill="#569cd6" opacity="0.4"/><rect x="2432" y="384.4" width="7" height="1.3" fill="#6a9955" opacity="0.4"/><rect x="2440" y="384.4" width="9" height="1.3" fill="#dcdcaa" opacity="0.4"/><rect x="2450" y="384.4" width="6" height="1.3" fill="#ce9178" opacity="0.4"/><rect x="2425" y="386.6" width="8" height="1.3" fill="#ce9178" opacity="0.4"/><rect x="2425" y="388.8" width="2" height="1.3" fill="#ce9178" opacity="0.4"/><rect x="2428" y="388.8" width="5" height="1.3" fill="#569cd6" opacity="0.4"/><rect x="2434" y="388.8" width="3" height="1.3" fill="#ce9178" opacity="0.4"/><rect x="2438" y="388.8" width="6" height="1.3" fill="#c586c0" opacity="0.4"/><rect x="2445" y="388.8" width="8" height="1.3" fill="#4ec9b0" opacity="0.4"/><rect x="2454" y="388.8" width="5" height="1.3" fill="#6a9955" opacity="0.4"/><rect x="2460" y="388.8" width="2" height="1.3" fill="#4ec9b0" opacity="0.4"/><rect x="2422" y="391.0" width="4" height="1.3" fill="#bbbbbb" opacity="0.4"/><rect x="2427" y="391.0" width="7" height="1.3" fill="#dcdcaa" opacity="0.4"/><rect x="2435" y="391.0" width="6" height="1.3" fill="#ce9178" opacity="0.4"/><rect x="2442" y="391.0" width="4" height="1.3" fill="#6a9955" opacity="0.4"/><rect x="2447" y="391.0" width="5" height="1.3" fill="#569cd6" opacity="0.4"/><rect x="2453" y="391.0" width="5" height="1.3" fill="#bbbbbb" opacity="0.4"/><rect x="2459" y="391.0" width="4" height="1.3" fill="#4ec9b0" opacity="0.4"/><rect x="2422" y="393.2" width="3" height="1.3" fill="#569cd6" opacity="0.4"/><rect x="2426" y="393.2" width="7" height="1.3" fill="#6a9955" opacity="0.4"/><rect x="2434" y="393.2" width="3" height="1.3" fill="#bbbbbb" opacity="0.4"/><rect x="2438" y="393.2" width="8" height="1.3" fill="#569cd6" opacity="0.4"/><rect x="2447" y="393.2" width="3" height="1.3" fill="#bbbbbb" opacity="0.4"/><rect x="2451" y="393.2" width="2" height="1.3" fill="#6a9955" opacity="0.4"/><rect x="2454" y="393.2" width="5" height="1.3" fill="#6a9955" opacity="0.4"/><rect x="2460" y="393.2" width="6" height="1.3" fill="#bbbbbb" opacity="0.4"/><rect x="2428" y="395.4" width="8" height="1.3" fill="#569cd6" opacity="0.4"/><rect x="2437" y="395.4" width="5" height="1.3" fill="#bbbbbb" opacity="0.4"/><rect x="2443" y="395.4" width="4" height="1.3" fill="#ce9178" opacity="0.4"/><rect x="2431" y="397.6" width="2" height="1.3" fill="#6a9955" opacity="0.4"/><rect x="2434" y="397.6" width="7" height="1.3" fill="#ce9178" opacity="0.4"/><rect x="2442" y="397.6" width="4" height="1.3" fill="#dcdcaa" opacity="0.4"/><rect x="2447" y="397.6" width="9" height="1.3" fill="#569cd6" opacity="0.4"/><rect x="2457" y="397.6" width="7" height="1.3" fill="#c586c0" opacity="0.4"/><rect x="2465" y="397.6" width="9" height="1.3" fill="#bbbbbb" opacity="0.4"/><rect x="2475" y="397.6" width="6" height="1.3" fill="#ce9178" opacity="0.4"/><rect x="2482" y="397.6" width="3" height="1.3" fill="#c586c0" opacity="0.4"/><rect x="2431" y="399.8" width="5" height="1.3" fill="#ce9178" opacity="0.4"/><rect x="2437" y="399.8" width="5" height="1.3" fill="#6a9955" opacity="0.4"/><rect x="2443" y="399.8" width="6" height="1.3" fill="#dcdcaa" opacity="0.4"/><rect x="2450" y="399.8" width="4" height="1.3" fill="#569cd6" opacity="0.4"/><rect x="2455" y="399.8" width="4" height="1.3" fill="#c586c0" opacity="0.4"/><rect x="2460" y="399.8" width="7" height="1.3" fill="#ce9178" opacity="0.4"/><rect x="2468" y="399.8" width="7" height="1.3" fill="#c586c0" opacity="0.4"/><rect x="2476" y="399.8" width="5" height="1.3" fill="#6a9955" opacity="0.4"/><rect x="2482" y="399.8" width="3" height="1.3" fill="#6a9955" opacity="0.4"/><rect x="2431" y="402.0" width="4" height="1.3" fill="#569cd6" opacity="0.4"/><rect x="2436" y="402.0" width="3" height="1.3" fill="#c586c0" opacity="0.4"/><rect x="2440" y="402.0" width="8" height="1.3" fill="#c586c0" opacity="0.4"/><rect x="2425" y="404.2" width="6" height="1.3" fill="#bbbbbb" opacity="0.4"/><rect x="2432" y="404.2" width="6" height="1.3" fill="#c586c0" opacity="0.4"/><rect x="2439" y="404.2" width="3" height="1.3" fill="#569cd6" opacity="0.4"/><rect x="2443" y="404.2" width="3" height="1.3" fill="#6a9955" opacity="0.4"/><rect x="2447" y="404.2" width="5" height="1.3" fill="#bbbbbb" opacity="0.4"/><rect x="2453" y="404.2" width="9" height="1.3" fill="#4ec9b0" opacity="0.4"/><rect x="2463" y="404.2" width="2" height="1.3" fill="#bbbbbb" opacity="0.4"/><rect x="2466" y="404.2" width="8" height="1.3" fill="#569cd6" opacity="0.4"/><rect x="2475" y="404.2" width="5" height="1.3" fill="#ce9178" opacity="0.4"/><rect x="2425" y="406.4" width="2" height="1.3" fill="#c586c0" opacity="0.4"/><rect x="2428" y="406.4" width="6" height="1.3" fill="#ce9178" opacity="0.4"/><rect x="2435" y="406.4" width="8" height="1.3" fill="#4ec9b0" opacity="0.4"/><rect x="2444" y="406.4" width="5" height="1.3" fill="#dcdcaa" opacity="0.4"/><rect x="2450" y="406.4" width="8" height="1.3" fill="#569cd6" opacity="0.4"/><rect x="2459" y="406.4" width="8" height="1.3" fill="#dcdcaa" opacity="0.4"/><rect x="2431" y="408.6" width="5" height="1.3" fill="#569cd6" opacity="0.4"/><rect x="2437" y="408.6" width="4" height="1.3" fill="#569cd6" opacity="0.4"/><rect x="2442" y="408.6" width="3" height="1.3" fill="#bbbbbb" opacity="0.4"/><rect x="2446" y="408.6" width="8" height="1.3" fill="#6a9955" opacity="0.4"/><rect x="2455" y="408.6" width="6" height="1.3" fill="#569cd6" opacity="0.4"/><rect x="2462" y="408.6" width="3" height="1.3" fill="#bbbbbb" opacity="0.4"/><rect x="2466" y="408.6" width="5" height="1.3" fill="#dcdcaa" opacity="0.4"/><rect x="2472" y="408.6" width="8" height="1.3" fill="#569cd6" opacity="0.4"/><rect x="2422" y="410.8" width="8" height="1.3" fill="#bbbbbb" opacity="0.4"/><rect x="2431" y="410.8" width="9" height="1.3" fill="#4ec9b0" opacity="0.4"/><rect x="2441" y="410.8" width="8" height="1.3" fill="#ce9178" opacity="0.4"/><rect x="2422" y="413.0" width="7" height="1.3" fill="#dcdcaa" opacity="0.4"/><rect x="2430" y="413.0" width="2" height="1.3" fill="#bbbbbb" opacity="0.4"/><rect x="2433" y="413.0" width="9" height="1.3" fill="#4ec9b0" opacity="0.4"/><rect x="2443" y="413.0" width="2" height="1.3" fill="#6a9955" opacity="0.4"/><rect x="2446" y="413.0" width="5" height="1.3" fill="#c586c0" opacity="0.4"/><rect x="2452" y="413.0" width="5" height="1.3" fill="#ce9178" opacity="0.4"/><rect x="2458" y="413.0" width="7" height="1.3" fill="#4ec9b0" opacity="0.4"/><rect x="2466" y="413.0" width="9" height="1.3" fill="#ce9178" opacity="0.4"/><rect x="2476" y="413.0" width="5" height="1.3" fill="#569cd6" opacity="0.4"/><rect x="2482" y="413.0" width="3" height="1.3" fill="#ce9178" opacity="0.4"/><rect x="2425" y="417.4" width="7" height="1.3" fill="#bbbbbb" opacity="0.4"/><rect x="2433" y="417.4" width="9" height="1.3" fill="#c586c0" opacity="0.4"/><rect x="2443" y="417.4" width="4" height="1.3" fill="#bbbbbb" opacity="0.4"/><rect x="2448" y="417.4" width="3" height="1.3" fill="#569cd6" opacity="0.4"/><rect x="2452" y="417.4" width="7" height="1.3" fill="#569cd6" opacity="0.4"/><rect x="2460" y="417.4" width="2" height="1.3" fill="#6a9955" opacity="0.4"/><rect x="2463" y="417.4" width="6" height="1.3" fill="#bbbbbb" opacity="0.4"/><rect x="2422" y="419.6" width="8" height="1.3" fill="#bbbbbb" opacity="0.4"/><rect x="2431" y="419.6" width="7" height="1.3" fill="#ce9178" opacity="0.4"/><rect x="2422" y="421.8" width="8" height="1.3" fill="#ce9178" opacity="0.4"/><rect x="2431" y="421.8" width="5" height="1.3" fill="#dcdcaa" opacity="0.4"/><rect x="2437" y="421.8" width="8" height="1.3" fill="#bbbbbb" opacity="0.4"/><rect x="2446" y="421.8" width="5" height="1.3" fill="#c586c0" opacity="0.4"/><rect x="2422" y="424.0" width="5" height="1.3" fill="#bbbbbb" opacity="0.4"/><rect x="2428" y="424.0" width="5" height="1.3" fill="#dcdcaa" opacity="0.4"/><rect x="2434" y="424.0" width="4" height="1.3" fill="#6a9955" opacity="0.4"/><rect x="2439" y="424.0" width="8" height="1.3" fill="#bbbbbb" opacity="0.4"/><rect x="2448" y="424.0" width="6" height="1.3" fill="#dcdcaa" opacity="0.4"/><rect x="2455" y="424.0" width="4" height="1.3" fill="#dcdcaa" opacity="0.4"/><rect x="2460" y="424.0" width="9" height="1.3" fill="#6a9955" opacity="0.4"/><rect x="2470" y="424.0" width="5" height="1.3" fill="#6a9955" opacity="0.4"/><rect x="2476" y="424.0" width="8" height="1.3" fill="#569cd6" opacity="0.4"/><rect x="2425" y="426.2" width="4" height="1.3" fill="#bbbbbb" opacity="0.4"/><rect x="2430" y="426.2" width="2" height="1.3" fill="#dcdcaa" opacity="0.4"/><rect x="2433" y="426.2" width="6" height="1.3" fill="#6a9955" opacity="0.4"/><rect x="2440" y="426.2" width="5" height="1.3" fill="#569cd6" opacity="0.4"/><rect x="2446" y="426.2" width="6" height="1.3" fill="#6a9955" opacity="0.4"/><rect x="2453" y="426.2" width="9" height="1.3" fill="#bbbbbb" opacity="0.4"/><rect x="2463" y="426.2" width="8" height="1.3" fill="#ce9178" opacity="0.4"/><rect x="2472" y="426.2" width="3" height="1.3" fill="#569cd6" opacity="0.4"/><rect x="2422" y="428.4" width="6" height="1.3" fill="#dcdcaa" opacity="0.4"/><rect x="2429" y="428.4" width="8" height="1.3" fill="#4ec9b0" opacity="0.4"/><rect x="2438" y="428.4" width="3" height="1.3" fill="#dcdcaa" opacity="0.4"/><rect x="2442" y="428.4" width="7" height="1.3" fill="#dcdcaa" opacity="0.4"/><rect x="2450" y="428.4" width="4" height="1.3" fill="#ce9178" opacity="0.4"/><rect x="2455" y="428.4" width="7" height="1.3" fill="#569cd6" opacity="0.4"/><rect x="2463" y="428.4" width="2" height="1.3" fill="#569cd6" opacity="0.4"/><rect x="2466" y="428.4" width="2" height="1.3" fill="#c586c0" opacity="0.4"/><rect x="2469" y="428.4" width="3" height="1.3" fill="#569cd6" opacity="0.4"/><rect x="2473" y="428.4" width="6" height="1.3" fill="#6a9955" opacity="0.4"/><rect x="2480" y="428.4" width="3" height="1.3" fill="#ce9178" opacity="0.4"/><rect x="2484" y="428.4" width="1" height="1.3" fill="#dcdcaa" opacity="0.4"/><rect x="2425" y="430.6" width="4" height="1.3" fill="#c586c0" opacity="0.4"/><rect x="2430" y="430.6" width="8" height="1.3" fill="#dcdcaa" opacity="0.4"/><rect x="2439" y="430.6" width="4" height="1.3" fill="#ce9178" opacity="0.4"/><rect x="2444" y="430.6" width="3" height="1.3" fill="#569cd6" opacity="0.4"/><rect x="2448" y="430.6" width="6" height="1.3" fill="#c586c0" opacity="0.4"/><rect x="2422" y="432.8" width="3" height="1.3" fill="#569cd6" opacity="0.4"/><rect x="2426" y="432.8" width="9" height="1.3" fill="#569cd6" opacity="0.4"/><rect x="2436" y="432.8" width="3" height="1.3" fill="#ce9178" opacity="0.4"/><rect x="2440" y="432.8" width="3" height="1.3" fill="#6a9955" opacity="0.4"/><rect x="2444" y="432.8" width="8" height="1.3" fill="#c586c0" opacity="0.4"/><rect x="2453" y="432.8" width="4" height="1.3" fill="#bbbbbb" opacity="0.4"/><rect x="2458" y="432.8" width="9" height="1.3" fill="#ce9178" opacity="0.4"/><rect x="2422" y="437.2" width="9" height="1.3" fill="#c586c0" opacity="0.4"/><rect x="2432" y="437.2" width="9" height="1.3" fill="#c586c0" opacity="0.4"/><rect x="2442" y="437.2" width="2" height="1.3" fill="#c586c0" opacity="0.4"/><rect x="2445" y="437.2" width="7" height="1.3" fill="#bbbbbb" opacity="0.4"/><rect x="2453" y="437.2" width="9" height="1.3" fill="#569cd6" opacity="0.4"/><rect x="2463" y="437.2" width="6" height="1.3" fill="#dcdcaa" opacity="0.4"/><rect x="2470" y="437.2" width="9" height="1.3" fill="#6a9955" opacity="0.4"/><rect x="2431" y="439.4" width="4" height="1.3" fill="#569cd6" opacity="0.4"/><rect x="2436" y="439.4" width="7" height="1.3" fill="#569cd6" opacity="0.4"/><rect x="2422" y="441.6" width="2" height="1.3" fill="#569cd6" opacity="0.4"/><rect x="2425" y="441.6" width="7" height="1.3" fill="#dcdcaa" opacity="0.4"/><rect x="2433" y="441.6" width="3" height="1.3" fill="#ce9178" opacity="0.4"/><rect x="2437" y="441.6" width="9" height="1.3" fill="#bbbbbb" opacity="0.4"/><rect x="2447" y="441.6" width="4" height="1.3" fill="#4ec9b0" opacity="0.4"/><rect x="2452" y="441.6" width="5" height="1.3" fill="#569cd6" opacity="0.4"/><rect x="2458" y="441.6" width="8" height="1.3" fill="#569cd6" opacity="0.4"/><rect x="2467" y="441.6" width="4" height="1.3" fill="#6a9955" opacity="0.4"/><rect x="2425" y="446.0" width="5" height="1.3" fill="#6a9955" opacity="0.4"/><rect x="2431" y="446.0" width="8" height="1.3" fill="#6a9955" opacity="0.4"/><rect x="2440" y="446.0" width="8" height="1.3" fill="#6a9955" opacity="0.4"/><rect x="2449" y="446.0" width="2" height="1.3" fill="#dcdcaa" opacity="0.4"/><rect x="2452" y="446.0" width="6" height="1.3" fill="#6a9955" opacity="0.4"/><rect x="2459" y="446.0" width="7" height="1.3" fill="#dcdcaa" opacity="0.4"/><rect x="2425" y="448.2" width="6" height="1.3" fill="#dcdcaa" opacity="0.4"/><rect x="2432" y="448.2" width="7" height="1.3" fill="#c586c0" opacity="0.4"/><rect x="2440" y="448.2" width="9" height="1.3" fill="#dcdcaa" opacity="0.4"/><rect x="2450" y="448.2" width="3" height="1.3" fill="#6a9955" opacity="0.4"/><rect x="2454" y="448.2" width="5" height="1.3" fill="#6a9955" opacity="0.4"/><rect x="2460" y="448.2" width="6" height="1.3" fill="#c586c0" opacity="0.4"/><rect x="2431" y="450.4" width="2" height="1.3" fill="#bbbbbb" opacity="0.4"/><rect x="2434" y="450.4" width="8" height="1.3" fill="#ce9178" opacity="0.4"/><rect x="2443" y="450.4" width="2" height="1.3" fill="#bbbbbb" opacity="0.4"/><rect x="2422" y="452.6" width="5" height="1.3" fill="#dcdcaa" opacity="0.4"/><rect x="2428" y="452.6" width="9" height="1.3" fill="#ce9178" opacity="0.4"/><rect x="2422" y="454.8" width="8" height="1.3" fill="#ce9178" opacity="0.4"/><rect x="2431" y="454.8" width="4" height="1.3" fill="#569cd6" opacity="0.4"/><rect x="2436" y="454.8" width="3" height="1.3" fill="#c586c0" opacity="0.4"/><rect x="2440" y="454.8" width="2" height="1.3" fill="#569cd6" opacity="0.4"/><rect x="2443" y="454.8" width="9" height="1.3" fill="#569cd6" opacity="0.4"/><rect x="2453" y="454.8" width="4" height="1.3" fill="#4ec9b0" opacity="0.4"/><rect x="2458" y="454.8" width="4" height="1.3" fill="#dcdcaa" opacity="0.4"/><rect x="2463" y="454.8" width="2" height="1.3" fill="#bbbbbb" opacity="0.4"/><rect x="2466" y="454.8" width="3" height="1.3" fill="#569cd6" opacity="0.4"/><rect x="2470" y="454.8" width="2" height="1.3" fill="#6a9955" opacity="0.4"/><rect x="2473" y="454.8" width="4" height="1.3" fill="#dcdcaa" opacity="0.4"/><rect x="2478" y="454.8" width="6" height="1.3" fill="#ce9178" opacity="0.4"/><rect x="2425" y="457.0" width="8" height="1.3" fill="#4ec9b0" opacity="0.4"/><rect x="2434" y="457.0" width="7" height="1.3" fill="#4ec9b0" opacity="0.4"/><rect x="2442" y="457.0" width="8" height="1.3" fill="#ce9178" opacity="0.4"/><rect x="2422" y="459.2" width="2" height="1.3" fill="#dcdcaa" opacity="0.4"/><rect x="2425" y="459.2" width="3" height="1.3" fill="#dcdcaa" opacity="0.4"/><rect x="2429" y="459.2" width="8" height="1.3" fill="#ce9178" opacity="0.4"/><rect x="2438" y="459.2" width="8" height="1.3" fill="#bbbbbb" opacity="0.4"/><rect x="2447" y="459.2" width="3" height="1.3" fill="#4ec9b0" opacity="0.4"/><rect x="2451" y="459.2" width="8" height="1.3" fill="#ce9178" opacity="0.4"/><rect x="2460" y="459.2" width="4" height="1.3" fill="#bbbbbb" opacity="0.4"/><rect x="2428" y="461.4" width="3" height="1.3" fill="#569cd6" opacity="0.4"/><rect x="2432" y="461.4" width="9" height="1.3" fill="#c586c0" opacity="0.4"/><rect x="2431" y="463.6" width="8" height="1.3" fill="#4ec9b0" opacity="0.4"/><rect x="2422" y="468.0" width="3" height="1.3" fill="#c586c0" opacity="0.4"/><rect x="2426" y="468.0" width="9" height="1.3" fill="#4ec9b0" opacity="0.4"/><rect x="2436" y="468.0" width="6" height="1.3" fill="#569cd6" opacity="0.4"/><rect x="2425" y="470.2" width="4" height="1.3" fill="#4ec9b0" opacity="0.4"/><rect x="2430" y="470.2" width="7" height="1.3" fill="#dcdcaa" opacity="0.4"/><rect x="2438" y="470.2" width="4" height="1.3" fill="#569cd6" opacity="0.4"/><rect x="2443" y="470.2" width="3" height="1.3" fill="#6a9955" opacity="0.4"/><rect x="2447" y="470.2" width="9" height="1.3" fill="#bbbbbb" opacity="0.4"/><rect x="2457" y="470.2" width="6" height="1.3" fill="#4ec9b0" opacity="0.4"/><rect x="2464" y="470.2" width="2" height="1.3" fill="#4ec9b0" opacity="0.4"/><rect x="2467" y="470.2" width="2" height="1.3" fill="#4ec9b0" opacity="0.4"/><rect x="2470" y="470.2" width="3" height="1.3" fill="#bbbbbb" opacity="0.4"/><rect x="2474" y="470.2" width="6" height="1.3" fill="#6a9955" opacity="0.4"/><rect x="2422" y="472.4" width="9" height="1.3" fill="#ce9178" opacity="0.4"/><rect x="2432" y="472.4" width="2" height="1.3" fill="#6a9955" opacity="0.4"/><rect x="2435" y="472.4" width="7" height="1.3" fill="#ce9178" opacity="0.4"/><rect x="2443" y="472.4" width="9" height="1.3" fill="#bbbbbb" opacity="0.4"/><rect x="2453" y="472.4" width="4" height="1.3" fill="#c586c0" opacity="0.4"/><rect x="2458" y="472.4" width="3" height="1.3" fill="#6a9955" opacity="0.4"/><rect x="2462" y="472.4" width="4" height="1.3" fill="#569cd6" opacity="0.4"/><rect x="2467" y="472.4" width="8" height="1.3" fill="#bbbbbb" opacity="0.4"/><rect x="2476" y="472.4" width="8" height="1.3" fill="#dcdcaa" opacity="0.4"/><rect x="2425" y="474.6" width="7" height="1.3" fill="#6a9955" opacity="0.4"/><rect x="2433" y="474.6" width="6" height="1.3" fill="#4ec9b0" opacity="0.4"/><rect x="2440" y="474.6" width="7" height="1.3" fill="#dcdcaa" opacity="0.4"/><rect x="2448" y="474.6" width="2" height="1.3" fill="#dcdcaa" opacity="0.4"/><rect x="2451" y="474.6" width="4" height="1.3" fill="#ce9178" opacity="0.4"/><rect x="2456" y="474.6" width="6" height="1.3" fill="#ce9178" opacity="0.4"/><rect x="2463" y="474.6" width="8" height="1.3" fill="#c586c0" opacity="0.4"/><rect x="2472" y="474.6" width="8" height="1.3" fill="#bbbbbb" opacity="0.4"/><rect x="2481" y="474.6" width="4" height="1.3" fill="#ce9178" opacity="0.4"/><rect x="2422" y="476.8" width="9" height="1.3" fill="#6a9955" opacity="0.4"/><rect x="2432" y="476.8" width="2" height="1.3" fill="#6a9955" opacity="0.4"/><rect x="2435" y="476.8" width="6" height="1.3" fill="#6a9955" opacity="0.4"/><rect x="2442" y="476.8" width="8" height="1.3" fill="#c586c0" opacity="0.4"/><rect x="2451" y="476.8" width="2" height="1.3" fill="#6a9955" opacity="0.4"/><rect x="2454" y="476.8" width="4" height="1.3" fill="#dcdcaa" opacity="0.4"/><rect x="2459" y="476.8" width="4" height="1.3" fill="#6a9955" opacity="0.4"/><rect x="2464" y="476.8" width="9" height="1.3" fill="#6a9955" opacity="0.4"/><rect x="2474" y="476.8" width="3" height="1.3" fill="#ce9178" opacity="0.4"/><rect x="2478" y="476.8" width="7" height="1.3" fill="#dcdcaa" opacity="0.4"/><rect x="2431" y="479.0" width="5" height="1.3" fill="#6a9955" opacity="0.4"/><rect x="2437" y="479.0" width="2" height="1.3" fill="#569cd6" opacity="0.4"/><rect x="2440" y="479.0" width="8" height="1.3" fill="#bbbbbb" opacity="0.4"/><rect x="2449" y="479.0" width="5" height="1.3" fill="#6a9955" opacity="0.4"/><rect x="2455" y="479.0" width="2" height="1.3" fill="#dcdcaa" opacity="0.4"/><rect x="2458" y="479.0" width="8" height="1.3" fill="#bbbbbb" opacity="0.4"/><rect x="2467" y="479.0" width="3" height="1.3" fill="#ce9178" opacity="0.4"/><rect x="2471" y="479.0" width="7" height="1.3" fill="#dcdcaa" opacity="0.4"/><rect x="2479" y="479.0" width="3" height="1.3" fill="#c586c0" opacity="0.4"/><rect x="2483" y="479.0" width="2" height="1.3" fill="#ce9178" opacity="0.4"/><rect x="2425" y="481.2" width="7" height="1.3" fill="#bbbbbb" opacity="0.4"/><rect x="2433" y="481.2" width="5" height="1.3" fill="#c586c0" opacity="0.4"/><rect x="2439" y="481.2" width="5" height="1.3" fill="#c586c0" opacity="0.4"/><rect x="2445" y="481.2" width="3" height="1.3" fill="#c586c0" opacity="0.4"/><rect x="2449" y="481.2" width="6" height="1.3" fill="#6a9955" opacity="0.4"/><rect x="2456" y="481.2" width="7" height="1.3" fill="#bbbbbb" opacity="0.4"/><rect x="2464" y="481.2" width="4" height="1.3" fill="#c586c0" opacity="0.4"/><rect x="2469" y="481.2" width="2" height="1.3" fill="#bbbbbb" opacity="0.4"/><rect x="2472" y="481.2" width="7" height="1.3" fill="#dcdcaa" opacity="0.4"/><rect x="2480" y="481.2" width="3" height="1.3" fill="#6a9955" opacity="0.4"/><rect x="2484" y="481.2" width="1" height="1.3" fill="#dcdcaa" opacity="0.4"/><rect x="2422" y="485.6" width="6" height="1.3" fill="#ce9178" opacity="0.4"/><rect x="2429" y="485.6" width="2" height="1.3" fill="#4ec9b0" opacity="0.4"/><rect x="2432" y="485.6" width="2" height="1.3" fill="#c586c0" opacity="0.4"/><rect x="2435" y="485.6" width="9" height="1.3" fill="#ce9178" opacity="0.4"/><rect x="2445" y="485.6" width="5" height="1.3" fill="#6a9955" opacity="0.4"/><rect x="2451" y="485.6" width="6" height="1.3" fill="#bbbbbb" opacity="0.4"/><rect x="2428" y="490.0" width="4" height="1.3" fill="#6a9955" opacity="0.4"/><rect x="2433" y="490.0" width="2" height="1.3" fill="#6a9955" opacity="0.4"/><rect x="2436" y="490.0" width="5" height="1.3" fill="#c586c0" opacity="0.4"/><rect x="2442" y="490.0" width="8" height="1.3" fill="#4ec9b0" opacity="0.4"/><rect x="2451" y="490.0" width="2" height="1.3" fill="#4ec9b0" opacity="0.4"/><rect x="2454" y="490.0" width="2" height="1.3" fill="#ce9178" opacity="0.4"/><rect x="2457" y="490.0" width="7" height="1.3" fill="#dcdcaa" opacity="0.4"/><rect x="2465" y="490.0" width="9" height="1.3" fill="#bbbbbb" opacity="0.4"/><rect x="2475" y="490.0" width="3" height="1.3" fill="#dcdcaa" opacity="0.4"/><rect x="2479" y="490.0" width="6" height="1.3" fill="#4ec9b0" opacity="0.4"/><rect x="2422" y="492.2" width="7" height="1.3" fill="#ce9178" opacity="0.4"/><rect x="2430" y="492.2" width="5" height="1.3" fill="#569cd6" opacity="0.4"/><rect x="2436" y="492.2" width="3" height="1.3" fill="#569cd6" opacity="0.4"/><rect x="2440" y="492.2" width="8" height="1.3" fill="#c586c0" opacity="0.4"/><rect x="2422" y="494.4" width="5" height="1.3" fill="#569cd6" opacity="0.4"/><rect x="2428" y="494.4" width="5" height="1.3" fill="#c586c0" opacity="0.4"/><rect x="2434" y="494.4" width="2" height="1.3" fill="#6a9955" opacity="0.4"/><rect x="2437" y="494.4" width="7" height="1.3" fill="#4ec9b0" opacity="0.4"/><rect x="2445" y="494.4" width="2" height="1.3" fill="#dcdcaa" opacity="0.4"/><rect x="2448" y="494.4" width="2" height="1.3" fill="#6a9955" opacity="0.4"/><rect x="2451" y="494.4" width="9" height="1.3" fill="#4ec9b0" opacity="0.4"/><rect x="2422" y="498.8" width="5" height="1.3" fill="#569cd6" opacity="0.4"/><rect x="2428" y="498.8" width="6" height="1.3" fill="#ce9178" opacity="0.4"/><rect x="2435" y="498.8" width="9" height="1.3" fill="#dcdcaa" opacity="0.4"/><rect x="2445" y="498.8" width="3" height="1.3" fill="#bbbbbb" opacity="0.4"/><rect x="2449" y="498.8" width="7" height="1.3" fill="#6a9955" opacity="0.4"/><rect x="2457" y="498.8" width="6" height="1.3" fill="#bbbbbb" opacity="0.4"/><rect x="2464" y="498.8" width="3" height="1.3" fill="#6a9955" opacity="0.4"/><rect x="2468" y="498.8" width="9" height="1.3" fill="#bbbbbb" opacity="0.4"/><rect x="2478" y="498.8" width="4" height="1.3" fill="#bbbbbb" opacity="0.4"/><rect x="2483" y="498.8" width="2" height="1.3" fill="#dcdcaa" opacity="0.4"/><rect x="2431" y="501.0" width="2" height="1.3" fill="#bbbbbb" opacity="0.4"/><rect x="2434" y="501.0" width="5" height="1.3" fill="#dcdcaa" opacity="0.4"/><rect x="2440" y="501.0" width="2" height="1.3" fill="#c586c0" opacity="0.4"/><rect x="2443" y="501.0" width="5" height="1.3" fill="#4ec9b0" opacity="0.4"/><rect x="2449" y="501.0" width="7" height="1.3" fill="#569cd6" opacity="0.4"/><rect x="2457" y="501.0" width="4" height="1.3" fill="#dcdcaa" opacity="0.4"/><rect x="2462" y="501.0" width="9" height="1.3" fill="#4ec9b0" opacity="0.4"/><rect x="2472" y="501.0" width="8" height="1.3" fill="#dcdcaa" opacity="0.4"/><rect x="2481" y="501.0" width="2" height="1.3" fill="#569cd6" opacity="0.4"/><rect x="2484" y="501.0" width="1" height="1.3" fill="#bbbbbb" opacity="0.4"/><rect x="2425" y="503.2" width="5" height="1.3" fill="#bbbbbb" opacity="0.4"/><rect x="2431" y="503.2" width="3" height="1.3" fill="#569cd6" opacity="0.4"/><rect x="2435" y="503.2" width="7" height="1.3" fill="#c586c0" opacity="0.4"/><rect x="2443" y="503.2" width="7" height="1.3" fill="#c586c0" opacity="0.4"/><rect x="2451" y="503.2" width="2" height="1.3" fill="#c586c0" opacity="0.4"/><rect x="2454" y="503.2" width="9" height="1.3" fill="#ce9178" opacity="0.4"/><rect x="2464" y="503.2" width="4" height="1.3" fill="#bbbbbb" opacity="0.4"/><rect x="2469" y="503.2" width="4" height="1.3" fill="#6a9955" opacity="0.4"/><rect x="2474" y="503.2" width="8" height="1.3" fill="#bbbbbb" opacity="0.4"/><rect x="2483" y="503.2" width="2" height="1.3" fill="#c586c0" opacity="0.4"/><rect x="2425" y="507.6" width="4" height="1.3" fill="#6a9955" opacity="0.4"/><rect x="2430" y="507.6" width="9" height="1.3" fill="#4ec9b0" opacity="0.4"/><rect x="2440" y="507.6" width="7" height="1.3" fill="#bbbbbb" opacity="0.4"/><rect x="2448" y="507.6" width="9" height="1.3" fill="#4ec9b0" opacity="0.4"/><rect x="2428" y="509.8" width="5" height="1.3" fill="#ce9178" opacity="0.4"/><rect x="2434" y="509.8" width="9" height="1.3" fill="#dcdcaa" opacity="0.4"/><rect x="2425" y="512.0" width="5" height="1.3" fill="#6a9955" opacity="0.4"/><rect x="2431" y="512.0" width="8" height="1.3" fill="#6a9955" opacity="0.4"/><rect x="2440" y="512.0" width="5" height="1.3" fill="#c586c0" opacity="0.4"/><rect x="2446" y="512.0" width="3" height="1.3" fill="#bbbbbb" opacity="0.4"/><rect x="2450" y="512.0" width="6" height="1.3" fill="#bbbbbb" opacity="0.4"/><rect x="2457" y="512.0" width="4" height="1.3" fill="#4ec9b0" opacity="0.4"/><rect x="2462" y="512.0" width="6" height="1.3" fill="#c586c0" opacity="0.4"/><rect x="2469" y="512.0" width="2" height="1.3" fill="#bbbbbb" opacity="0.4"/><rect x="2472" y="512.0" width="7" height="1.3" fill="#ce9178" opacity="0.4"/><rect x="2480" y="512.0" width="4" height="1.3" fill="#bbbbbb" opacity="0.4"/><rect x="2428" y="516.4" width="4" height="1.3" fill="#6a9955" opacity="0.4"/><rect x="2433" y="516.4" width="8" height="1.3" fill="#4ec9b0" opacity="0.4"/><rect x="2442" y="516.4" width="8" height="1.3" fill="#c586c0" opacity="0.4"/><rect x="2451" y="516.4" width="6" height="1.3" fill="#ce9178" opacity="0.4"/><rect x="2422" y="518.6" width="5" height="1.3" fill="#569cd6" opacity="0.4"/><rect x="2428" y="518.6" width="4" height="1.3" fill="#c586c0" opacity="0.4"/><rect x="2433" y="518.6" width="3" height="1.3" fill="#dcdcaa" opacity="0.4"/><rect x="2437" y="518.6" width="3" height="1.3" fill="#ce9178" opacity="0.4"/><rect x="2441" y="518.6" width="9" height="1.3" fill="#dcdcaa" opacity="0.4"/><rect x="2451" y="518.6" width="6" height="1.3" fill="#c586c0" opacity="0.4"/><rect x="2458" y="518.6" width="5" height="1.3" fill="#c586c0" opacity="0.4"/><rect x="2431" y="520.8" width="5" height="1.3" fill="#ce9178" opacity="0.4"/><rect x="2437" y="520.8" width="6" height="1.3" fill="#c586c0" opacity="0.4"/><rect x="2444" y="520.8" width="2" height="1.3" fill="#4ec9b0" opacity="0.4"/><rect x="2447" y="520.8" width="8" height="1.3" fill="#dcdcaa" opacity="0.4"/><rect x="2456" y="520.8" width="2" height="1.3" fill="#ce9178" opacity="0.4"/><rect x="2459" y="520.8" width="7" height="1.3" fill="#6a9955" opacity="0.4"/><rect x="2467" y="520.8" width="6" height="1.3" fill="#dcdcaa" opacity="0.4"/><rect x="2474" y="520.8" width="9" height="1.3" fill="#4ec9b0" opacity="0.4"/><rect x="2425" y="525.2" width="6" height="1.3" fill="#c586c0" opacity="0.4"/><rect x="2432" y="525.2" width="4" height="1.3" fill="#ce9178" opacity="0.4"/><rect x="2437" y="525.2" width="7" height="1.3" fill="#4ec9b0" opacity="0.4"/><rect x="2425" y="527.4" width="2" height="1.3" fill="#6a9955" opacity="0.4"/><rect x="2428" y="527.4" width="9" height="1.3" fill="#ce9178" opacity="0.4"/><rect x="2438" y="527.4" width="3" height="1.3" fill="#4ec9b0" opacity="0.4"/><rect x="2442" y="527.4" width="7" height="1.3" fill="#569cd6" opacity="0.4"/><rect x="2450" y="527.4" width="5" height="1.3" fill="#dcdcaa" opacity="0.4"/><rect x="2456" y="527.4" width="7" height="1.3" fill="#dcdcaa" opacity="0.4"/><rect x="2464" y="527.4" width="8" height="1.3" fill="#ce9178" opacity="0.4"/><rect x="2422" y="529.6" width="3" height="1.3" fill="#569cd6" opacity="0.4"/><rect x="2426" y="529.6" width="9" height="1.3" fill="#bbbbbb" opacity="0.4"/><rect x="2436" y="529.6" width="2" height="1.3" fill="#ce9178" opacity="0.4"/><rect x="2439" y="529.6" width="4" height="1.3" fill="#4ec9b0" opacity="0.4"/><rect x="2444" y="529.6" width="5" height="1.3" fill="#4ec9b0" opacity="0.4"/><rect x="2422" y="531.8" width="3" height="1.3" fill="#6a9955" opacity="0.4"/><rect x="2426" y="531.8" width="6" height="1.3" fill="#ce9178" opacity="0.4"/><rect x="2433" y="531.8" width="2" height="1.3" fill="#4ec9b0" opacity="0.4"/><rect x="2436" y="531.8" width="3" height="1.3" fill="#569cd6" opacity="0.4"/><rect x="2425" y="534.0" width="9" height="1.3" fill="#ce9178" opacity="0.4"/><rect x="2425" y="536.2" width="7" height="1.3" fill="#dcdcaa" opacity="0.4"/><rect x="2433" y="536.2" width="3" height="1.3" fill="#569cd6" opacity="0.4"/><rect x="2437" y="536.2" width="4" height="1.3" fill="#4ec9b0" opacity="0.4"/><rect x="2425" y="538.4" width="6" height="1.3" fill="#4ec9b0" opacity="0.4"/><rect x="2432" y="538.4" width="3" height="1.3" fill="#4ec9b0" opacity="0.4"/><rect x="2436" y="538.4" width="8" height="1.3" fill="#c586c0" opacity="0.4"/><rect x="2445" y="538.4" width="5" height="1.3" fill="#dcdcaa" opacity="0.4"/><rect x="2451" y="538.4" width="5" height="1.3" fill="#c586c0" opacity="0.4"/><rect x="2457" y="538.4" width="9" height="1.3" fill="#569cd6" opacity="0.4"/><rect x="2422" y="540.6" width="8" height="1.3" fill="#569cd6" opacity="0.4"/><rect x="2431" y="540.6" width="8" height="1.3" fill="#ce9178" opacity="0.4"/><rect x="2440" y="540.6" width="2" height="1.3" fill="#bbbbbb" opacity="0.4"/><rect x="2443" y="540.6" width="2" height="1.3" fill="#dcdcaa" opacity="0.4"/><rect x="2446" y="540.6" width="7" height="1.3" fill="#6a9955" opacity="0.4"/><rect x="2454" y="540.6" width="8" height="1.3" fill="#c586c0" opacity="0.4"/><rect x="2463" y="540.6" width="7" height="1.3" fill="#569cd6" opacity="0.4"/><rect x="2471" y="540.6" width="8" height="1.3" fill="#dcdcaa" opacity="0.4"/><rect x="2480" y="540.6" width="5" height="1.3" fill="#dcdcaa" opacity="0.4"/><rect x="2428" y="542.8" width="7" height="1.3" fill="#ce9178" opacity="0.4"/><rect x="2436" y="542.8" width="4" height="1.3" fill="#569cd6" opacity="0.4"/><rect x="2422" y="545.0" width="8" height="1.3" fill="#569cd6" opacity="0.4"/><rect x="2431" y="545.0" width="2" height="1.3" fill="#6a9955" opacity="0.4"/><rect x="2434" y="545.0" width="3" height="1.3" fill="#ce9178" opacity="0.4"/><rect x="2438" y="545.0" width="4" height="1.3" fill="#4ec9b0" opacity="0.4"/><rect x="2443" y="545.0" width="7" height="1.3" fill="#bbbbbb" opacity="0.4"/><rect x="2451" y="545.0" width="5" height="1.3" fill="#ce9178" opacity="0.4"/><rect x="2457" y="545.0" width="2" height="1.3" fill="#c586c0" opacity="0.4"/><rect x="2460" y="545.0" width="4" height="1.3" fill="#bbbbbb" opacity="0.4"/><rect x="2465" y="545.0" width="8" height="1.3" fill="#dcdcaa" opacity="0.4"/><rect x="2474" y="545.0" width="9" height="1.3" fill="#569cd6" opacity="0.4"/><rect x="2484" y="545.0" width="1" height="1.3" fill="#dcdcaa" opacity="0.4"/><rect x="2422" y="547.2" width="6" height="1.3" fill="#569cd6" opacity="0.4"/><rect x="2429" y="547.2" width="6" height="1.3" fill="#569cd6" opacity="0.4"/><rect x="2422" y="549.4" width="3" height="1.3" fill="#6a9955" opacity="0.4"/><rect x="2426" y="549.4" width="3" height="1.3" fill="#ce9178" opacity="0.4"/><rect x="2430" y="549.4" width="2" height="1.3" fill="#bbbbbb" opacity="0.4"/><rect x="2433" y="549.4" width="5" height="1.3" fill="#4ec9b0" opacity="0.4"/><rect x="2439" y="549.4" width="6" height="1.3" fill="#4ec9b0" opacity="0.4"/><rect x="2446" y="549.4" width="6" height="1.3" fill="#6a9955" opacity="0.4"/><rect x="2453" y="549.4" width="4" height="1.3" fill="#4ec9b0" opacity="0.4"/><rect x="2458" y="549.4" width="2" height="1.3" fill="#ce9178" opacity="0.4"/><rect x="2461" y="549.4" width="6" height="1.3" fill="#4ec9b0" opacity="0.4"/><rect x="2468" y="549.4" width="9" height="1.3" fill="#ce9178" opacity="0.4"/><rect x="2422" y="551.6" width="3" height="1.3" fill="#ce9178" opacity="0.4"/><rect x="2426" y="551.6" width="4" height="1.3" fill="#6a9955" opacity="0.4"/><rect x="2431" y="551.6" width="8" height="1.3" fill="#ce9178" opacity="0.4"/><rect x="2440" y="551.6" width="6" height="1.3" fill="#6a9955" opacity="0.4"/><rect x="2447" y="551.6" width="5" height="1.3" fill="#569cd6" opacity="0.4"/><rect x="2453" y="551.6" width="3" height="1.3" fill="#569cd6" opacity="0.4"/><rect x="2457" y="551.6" width="6" height="1.3" fill="#dcdcaa" opacity="0.4"/><rect x="2431" y="553.8" width="5" height="1.3" fill="#569cd6" opacity="0.4"/><rect x="2437" y="553.8" width="8" height="1.3" fill="#c586c0" opacity="0.4"/><rect x="2446" y="553.8" width="7" height="1.3" fill="#bbbbbb" opacity="0.4"/><rect x="2454" y="553.8" width="6" height="1.3" fill="#ce9178" opacity="0.4"/><rect x="2461" y="553.8" width="9" height="1.3" fill="#bbbbbb" opacity="0.4"/><rect x="2471" y="553.8" width="6" height="1.3" fill="#4ec9b0" opacity="0.4"/><rect x="2422" y="556.0" width="8" height="1.3" fill="#ce9178" opacity="0.4"/><rect x="2431" y="556.0" width="8" height="1.3" fill="#4ec9b0" opacity="0.4"/><rect x="2440" y="556.0" width="7" height="1.3" fill="#c586c0" opacity="0.4"/><rect x="2422" y="558.2" width="7" height="1.3" fill="#bbbbbb" opacity="0.4"/><rect x="2430" y="558.2" width="6" height="1.3" fill="#6a9955" opacity="0.4"/><rect x="2437" y="558.2" width="5" height="1.3" fill="#6a9955" opacity="0.4"/><rect x="2443" y="558.2" width="2" height="1.3" fill="#dcdcaa" opacity="0.4"/><rect x="2446" y="558.2" width="2" height="1.3" fill="#c586c0" opacity="0.4"/><rect x="2449" y="558.2" width="3" height="1.3" fill="#ce9178" opacity="0.4"/><rect x="2425" y="560.4" width="2" height="1.3" fill="#ce9178" opacity="0.4"/><rect x="2428" y="560.4" width="8" height="1.3" fill="#dcdcaa" opacity="0.4"/><rect x="2437" y="560.4" width="9" height="1.3" fill="#6a9955" opacity="0.4"/><rect x="2447" y="560.4" width="3" height="1.3" fill="#ce9178" opacity="0.4"/><rect x="2451" y="560.4" width="5" height="1.3" fill="#569cd6" opacity="0.4"/><rect x="2457" y="560.4" width="4" height="1.3" fill="#bbbbbb" opacity="0.4"/><rect x="2462" y="560.4" width="7" height="1.3" fill="#569cd6" opacity="0.4"/><rect x="2470" y="560.4" width="7" height="1.3" fill="#c586c0" opacity="0.4"/><rect x="2428" y="562.6" width="6" height="1.3" fill="#dcdcaa" opacity="0.4"/><rect x="2435" y="562.6" width="3" height="1.3" fill="#569cd6" opacity="0.4"/><rect x="2439" y="562.6" width="9" height="1.3" fill="#6a9955" opacity="0.4"/><rect x="2449" y="562.6" width="4" height="1.3" fill="#bbbbbb" opacity="0.4"/><rect x="2454" y="562.6" width="3" height="1.3" fill="#4ec9b0" opacity="0.4"/><rect x="2458" y="562.6" width="8" height="1.3" fill="#dcdcaa" opacity="0.4"/><rect x="2467" y="562.6" width="3" height="1.3" fill="#bbbbbb" opacity="0.4"/><rect x="2471" y="562.6" width="8" height="1.3" fill="#ce9178" opacity="0.4"/><rect x="2425" y="564.8" width="3" height="1.3" fill="#bbbbbb" opacity="0.4"/><rect x="2429" y="564.8" width="9" height="1.3" fill="#569cd6" opacity="0.4"/><rect x="2439" y="564.8" width="9" height="1.3" fill="#6a9955" opacity="0.4"/><rect x="2449" y="564.8" width="7" height="1.3" fill="#6a9955" opacity="0.4"/><rect x="2457" y="564.8" width="7" height="1.3" fill="#bbbbbb" opacity="0.4"/><rect x="2465" y="564.8" width="8" height="1.3" fill="#569cd6" opacity="0.4"/><rect x="2474" y="564.8" width="7" height="1.3" fill="#4ec9b0" opacity="0.4"/><rect x="2482" y="564.8" width="3" height="1.3" fill="#bbbbbb" opacity="0.4"/><rect x="2422" y="567.0" width="6" height="1.3" fill="#dcdcaa" opacity="0.4"/><rect x="2429" y="567.0" width="4" height="1.3" fill="#bbbbbb" opacity="0.4"/><rect x="2434" y="567.0" width="8" height="1.3" fill="#ce9178" opacity="0.4"/><rect x="2443" y="567.0" width="5" height="1.3" fill="#4ec9b0" opacity="0.4"/><rect x="2449" y="567.0" width="7" height="1.3" fill="#6a9955" opacity="0.4"/><rect x="2457" y="567.0" width="5" height="1.3" fill="#6a9955" opacity="0.4"/><rect x="2463" y="567.0" width="5" height="1.3" fill="#bbbbbb" opacity="0.4"/><rect x="2422" y="569.2" width="2" height="1.3" fill="#6a9955" opacity="0.4"/><rect x="2425" y="569.2" width="9" height="1.3" fill="#6a9955" opacity="0.4"/><rect x="2425" y="571.4" width="8" height="1.3" fill="#ce9178" opacity="0.4"/><rect x="2434" y="571.4" width="8" height="1.3" fill="#bbbbbb" opacity="0.4"/><rect x="2443" y="571.4" width="9" height="1.3" fill="#6a9955" opacity="0.4"/><rect x="2453" y="571.4" width="2" height="1.3" fill="#ce9178" opacity="0.4"/><rect x="2456" y="571.4" width="7" height="1.3" fill="#bbbbbb" opacity="0.4"/><rect x="2464" y="571.4" width="2" height="1.3" fill="#569cd6" opacity="0.4"/><rect x="2425" y="575.8" width="8" height="1.3" fill="#569cd6" opacity="0.4"/><rect x="2434" y="575.8" width="4" height="1.3" fill="#c586c0" opacity="0.4"/><rect x="2439" y="575.8" width="8" height="1.3" fill="#bbbbbb" opacity="0.4"/><rect x="2448" y="575.8" width="8" height="1.3" fill="#bbbbbb" opacity="0.4"/><rect x="2428" y="578.0" width="3" height="1.3" fill="#c586c0" opacity="0.4"/><rect x="2432" y="578.0" width="7" height="1.3" fill="#6a9955" opacity="0.4"/><rect x="2440" y="578.0" width="7" height="1.3" fill="#4ec9b0" opacity="0.4"/><rect x="2448" y="578.0" width="6" height="1.3" fill="#ce9178" opacity="0.4"/><rect x="2455" y="578.0" width="4" height="1.3" fill="#4ec9b0" opacity="0.4"/><rect x="2425" y="580.2" width="7" height="1.3" fill="#dcdcaa" opacity="0.4"/><rect x="2433" y="580.2" width="8" height="1.3" fill="#569cd6" opacity="0.4"/><rect x="2442" y="580.2" width="4" height="1.3" fill="#ce9178" opacity="0.4"/><rect x="2447" y="580.2" width="6" height="1.3" fill="#dcdcaa" opacity="0.4"/><rect x="2454" y="580.2" width="5" height="1.3" fill="#ce9178" opacity="0.4"/><rect x="2460" y="580.2" width="5" height="1.3" fill="#bbbbbb" opacity="0.4"/><rect x="2466" y="580.2" width="4" height="1.3" fill="#4ec9b0" opacity="0.4"/><rect x="2471" y="580.2" width="3" height="1.3" fill="#6a9955" opacity="0.4"/><rect x="2475" y="580.2" width="2" height="1.3" fill="#569cd6" opacity="0.4"/><rect x="2422" y="582.4" width="2" height="1.3" fill="#6a9955" opacity="0.4"/><rect x="2425" y="582.4" width="8" height="1.3" fill="#dcdcaa" opacity="0.4"/><rect x="2434" y="582.4" width="3" height="1.3" fill="#ce9178" opacity="0.4"/><rect x="2438" y="582.4" width="2" height="1.3" fill="#569cd6" opacity="0.4"/><rect x="2441" y="582.4" width="2" height="1.3" fill="#c586c0" opacity="0.4"/><rect x="2444" y="582.4" width="4" height="1.3" fill="#bbbbbb" opacity="0.4"/><rect x="2428" y="584.6" width="4" height="1.3" fill="#ce9178" opacity="0.4"/><rect x="2433" y="584.6" width="5" height="1.3" fill="#bbbbbb" opacity="0.4"/><rect x="2439" y="584.6" width="3" height="1.3" fill="#c586c0" opacity="0.4"/><rect x="2443" y="584.6" width="4" height="1.3" fill="#ce9178" opacity="0.4"/><rect x="2448" y="584.6" width="3" height="1.3" fill="#4ec9b0" opacity="0.4"/><rect x="2452" y="584.6" width="3" height="1.3" fill="#4ec9b0" opacity="0.4"/><rect x="2428" y="586.8" width="9" height="1.3" fill="#ce9178" opacity="0.4"/><rect x="2438" y="586.8" width="8" height="1.3" fill="#dcdcaa" opacity="0.4"/><rect x="2447" y="586.8" width="2" height="1.3" fill="#569cd6" opacity="0.4"/><rect x="2450" y="586.8" width="2" height="1.3" fill="#569cd6" opacity="0.4"/><rect x="2453" y="586.8" width="7" height="1.3" fill="#c586c0" opacity="0.4"/><rect x="2461" y="586.8" width="5" height="1.3" fill="#6a9955" opacity="0.4"/><rect x="2422" y="589.0" width="3" height="1.3" fill="#dcdcaa" opacity="0.4"/><rect x="2426" y="589.0" width="3" height="1.3" fill="#6a9955" opacity="0.4"/><rect x="2430" y="589.0" width="5" height="1.3" fill="#bbbbbb" opacity="0.4"/><rect x="2436" y="589.0" width="8" height="1.3" fill="#4ec9b0" opacity="0.4"/><rect x="2445" y="589.0" width="2" height="1.3" fill="#c586c0" opacity="0.4"/><rect x="2428" y="591.2" width="2" height="1.3" fill="#bbbbbb" opacity="0.4"/><rect x="2431" y="591.2" width="2" height="1.3" fill="#ce9178" opacity="0.4"/><rect x="2434" y="591.2" width="5" height="1.3" fill="#c586c0" opacity="0.4"/><rect x="2440" y="591.2" width="5" height="1.3" fill="#4ec9b0" opacity="0.4"/><rect x="2446" y="591.2" width="4" height="1.3" fill="#ce9178" opacity="0.4"/><rect x="2451" y="591.2" width="4" height="1.3" fill="#6a9955" opacity="0.4"/><rect x="2456" y="591.2" width="2" height="1.3" fill="#dcdcaa" opacity="0.4"/><rect x="2459" y="591.2" width="9" height="1.3" fill="#6a9955" opacity="0.4"/><rect x="2469" y="591.2" width="8" height="1.3" fill="#ce9178" opacity="0.4"/><rect x="2478" y="591.2" width="6" height="1.3" fill="#bbbbbb" opacity="0.4"/><rect x="2422" y="593.4" width="8" height="1.3" fill="#569cd6" opacity="0.4"/><rect x="2431" y="593.4" width="5" height="1.3" fill="#bbbbbb" opacity="0.4"/><rect x="2437" y="593.4" width="6" height="1.3" fill="#bbbbbb" opacity="0.4"/><rect x="2444" y="593.4" width="9" height="1.3" fill="#4ec9b0" opacity="0.4"/><rect x="2422" y="595.6" width="4" height="1.3" fill="#c586c0" opacity="0.4"/><rect x="2427" y="595.6" width="7" height="1.3" fill="#bbbbbb" opacity="0.4"/><rect x="2425" y="597.8" width="7" height="1.3" fill="#4ec9b0" opacity="0.4"/><rect x="2433" y="597.8" width="7" height="1.3" fill="#ce9178" opacity="0.4"/><rect x="2441" y="597.8" width="8" height="1.3" fill="#6a9955" opacity="0.4"/><rect x="2450" y="597.8" width="8" height="1.3" fill="#569cd6" opacity="0.4"/><rect x="2425" y="602.2" width="5" height="1.3" fill="#bbbbbb" opacity="0.4"/><rect x="2431" y="602.2" width="5" height="1.3" fill="#bbbbbb" opacity="0.4"/><rect x="2437" y="602.2" width="6" height="1.3" fill="#6a9955" opacity="0.4"/><rect x="2444" y="602.2" width="5" height="1.3" fill="#bbbbbb" opacity="0.4"/><rect x="2450" y="602.2" width="2" height="1.3" fill="#6a9955" opacity="0.4"/><rect x="2453" y="602.2" width="2" height="1.3" fill="#6a9955" opacity="0.4"/><rect x="2456" y="602.2" width="4" height="1.3" fill="#c586c0" opacity="0.4"/><rect x="2461" y="602.2" width="4" height="1.3" fill="#4ec9b0" opacity="0.4"/><rect x="2466" y="602.2" width="5" height="1.3" fill="#6a9955" opacity="0.4"/><rect x="2422" y="604.4" width="9" height="1.3" fill="#bbbbbb" opacity="0.4"/><rect x="2432" y="604.4" width="5" height="1.3" fill="#c586c0" opacity="0.4"/><rect x="2438" y="604.4" width="7" height="1.3" fill="#6a9955" opacity="0.4"/><rect x="2446" y="604.4" width="5" height="1.3" fill="#569cd6" opacity="0.4"/><rect x="2452" y="604.4" width="8" height="1.3" fill="#bbbbbb" opacity="0.4"/><rect x="2461" y="604.4" width="5" height="1.3" fill="#6a9955" opacity="0.4"/><rect x="2428" y="606.6" width="5" height="1.3" fill="#dcdcaa" opacity="0.4"/><rect x="2434" y="606.6" width="9" height="1.3" fill="#569cd6" opacity="0.4"/><rect x="2444" y="606.6" width="4" height="1.3" fill="#569cd6" opacity="0.4"/><rect x="2428" y="608.8" width="9" height="1.3" fill="#ce9178" opacity="0.4"/><rect x="2438" y="608.8" width="7" height="1.3" fill="#ce9178" opacity="0.4"/><rect x="2446" y="608.8" width="5" height="1.3" fill="#bbbbbb" opacity="0.4"/><rect x="2452" y="608.8" width="5" height="1.3" fill="#c586c0" opacity="0.4"/><rect x="2458" y="608.8" width="3" height="1.3" fill="#569cd6" opacity="0.4"/><rect x="2462" y="608.8" width="3" height="1.3" fill="#ce9178" opacity="0.4"/><rect x="2466" y="608.8" width="6" height="1.3" fill="#569cd6" opacity="0.4"/><rect x="2473" y="608.8" width="8" height="1.3" fill="#4ec9b0" opacity="0.4"/><rect x="2482" y="608.8" width="3" height="1.3" fill="#6a9955" opacity="0.4"/><rect x="2431" y="613.2" width="5" height="1.3" fill="#6a9955" opacity="0.4"/><rect x="2437" y="613.2" width="5" height="1.3" fill="#569cd6" opacity="0.4"/><rect x="2443" y="613.2" width="3" height="1.3" fill="#4ec9b0" opacity="0.4"/><rect x="2447" y="613.2" width="7" height="1.3" fill="#dcdcaa" opacity="0.4"/><rect x="2425" y="615.4" width="3" height="1.3" fill="#569cd6" opacity="0.4"/><rect x="2429" y="615.4" width="6" height="1.3" fill="#4ec9b0" opacity="0.4"/><rect x="2436" y="615.4" width="5" height="1.3" fill="#6a9955" opacity="0.4"/><rect x="2442" y="615.4" width="4" height="1.3" fill="#dcdcaa" opacity="0.4"/><rect x="2425" y="617.6" width="8" height="1.3" fill="#dcdcaa" opacity="0.4"/><rect x="2434" y="617.6" width="9" height="1.3" fill="#dcdcaa" opacity="0.4"/><rect x="2444" y="617.6" width="4" height="1.3" fill="#6a9955" opacity="0.4"/><rect x="2449" y="617.6" width="4" height="1.3" fill="#4ec9b0" opacity="0.4"/><rect x="2454" y="617.6" width="7" height="1.3" fill="#569cd6" opacity="0.4"/><rect x="2431" y="619.8" width="8" height="1.3" fill="#4ec9b0" opacity="0.4"/><rect x="2440" y="619.8" width="9" height="1.3" fill="#c586c0" opacity="0.4"/><rect x="2450" y="619.8" width="8" height="1.3" fill="#6a9955" opacity="0.4"/><rect x="2459" y="619.8" width="3" height="1.3" fill="#c586c0" opacity="0.4"/><rect x="2425" y="622.0" width="5" height="1.3" fill="#569cd6" opacity="0.4"/><rect x="2431" y="622.0" width="2" height="1.3" fill="#bbbbbb" opacity="0.4"/><rect x="2434" y="622.0" width="2" height="1.3" fill="#ce9178" opacity="0.4"/><rect x="2437" y="622.0" width="4" height="1.3" fill="#bbbbbb" opacity="0.4"/><rect x="2442" y="622.0" width="5" height="1.3" fill="#dcdcaa" opacity="0.4"/><rect x="2448" y="622.0" width="6" height="1.3" fill="#c586c0" opacity="0.4"/><rect x="2455" y="622.0" width="8" height="1.3" fill="#569cd6" opacity="0.4"/><rect x="2464" y="622.0" width="2" height="1.3" fill="#ce9178" opacity="0.4"/><rect x="2467" y="622.0" width="6" height="1.3" fill="#569cd6" opacity="0.4"/><rect x="2474" y="622.0" width="4" height="1.3" fill="#ce9178" opacity="0.4"/><rect x="2479" y="622.0" width="5" height="1.3" fill="#ce9178" opacity="0.4"/><rect x="2428" y="624.2" width="8" height="1.3" fill="#569cd6" opacity="0.4"/><rect x="2437" y="624.2" width="7" height="1.3" fill="#4ec9b0" opacity="0.4"/><rect x="2445" y="624.2" width="3" height="1.3" fill="#dcdcaa" opacity="0.4"/><rect x="2449" y="624.2" width="6" height="1.3" fill="#4ec9b0" opacity="0.4"/><rect x="2428" y="626.4" width="2" height="1.3" fill="#c586c0" opacity="0.4"/><rect x="2431" y="626.4" width="3" height="1.3" fill="#4ec9b0" opacity="0.4"/><rect x="2435" y="626.4" width="7" height="1.3" fill="#c586c0" opacity="0.4"/><rect x="2443" y="626.4" width="7" height="1.3" fill="#569cd6" opacity="0.4"/><rect x="2451" y="626.4" width="3" height="1.3" fill="#bbbbbb" opacity="0.4"/><rect x="2455" y="626.4" width="8" height="1.3" fill="#569cd6" opacity="0.4"/><rect x="2464" y="626.4" width="5" height="1.3" fill="#6a9955" opacity="0.4"/><rect x="2470" y="626.4" width="3" height="1.3" fill="#6a9955" opacity="0.4"/><rect x="2425" y="628.6" width="7" height="1.3" fill="#569cd6" opacity="0.4"/><rect x="2433" y="628.6" width="9" height="1.3" fill="#ce9178" opacity="0.4"/><rect x="2443" y="628.6" width="2" height="1.3" fill="#569cd6" opacity="0.4"/><rect x="2446" y="628.6" width="5" height="1.3" fill="#bbbbbb" opacity="0.4"/><rect x="2452" y="628.6" width="4" height="1.3" fill="#bbbbbb" opacity="0.4"/><rect x="2457" y="628.6" width="5" height="1.3" fill="#4ec9b0" opacity="0.4"/><rect x="2428" y="630.8" width="4" height="1.3" fill="#ce9178" opacity="0.4"/><rect x="2433" y="630.8" width="4" height="1.3" fill="#dcdcaa" opacity="0.4"/><rect x="2438" y="630.8" width="5" height="1.3" fill="#ce9178" opacity="0.4"/><rect x="2444" y="630.8" width="6" height="1.3" fill="#c586c0" opacity="0.4"/><rect x="2451" y="630.8" width="2" height="1.3" fill="#c586c0" opacity="0.4"/><rect x="2425" y="633.0" width="5" height="1.3" fill="#569cd6" opacity="0.4"/><rect x="2431" y="633.0" width="6" height="1.3" fill="#c586c0" opacity="0.4"/><rect x="2431" y="635.2" width="9" height="1.3" fill="#c586c0" opacity="0.4"/><rect x="2441" y="635.2" width="5" height="1.3" fill="#4ec9b0" opacity="0.4"/><rect x="2447" y="635.2" width="9" height="1.3" fill="#c586c0" opacity="0.4"/><rect x="2457" y="635.2" width="7" height="1.3" fill="#569cd6" opacity="0.4"/><rect x="2465" y="635.2" width="6" height="1.3" fill="#c586c0" opacity="0.4"/><rect x="2422" y="637.4" width="5" height="1.3" fill="#6a9955" opacity="0.4"/><rect x="2428" y="637.4" width="3" height="1.3" fill="#ce9178" opacity="0.4"/><rect x="2432" y="637.4" width="8" height="1.3" fill="#dcdcaa" opacity="0.4"/><rect x="2441" y="637.4" width="4" height="1.3" fill="#569cd6" opacity="0.4"/><rect x="2446" y="637.4" width="4" height="1.3" fill="#ce9178" opacity="0.4"/><rect x="2451" y="637.4" width="9" height="1.3" fill="#dcdcaa" opacity="0.4"/><rect x="2461" y="637.4" width="8" height="1.3" fill="#dcdcaa" opacity="0.4"/><rect x="2431" y="639.6" width="2" height="1.3" fill="#6a9955" opacity="0.4"/><rect x="2434" y="639.6" width="9" height="1.3" fill="#c586c0" opacity="0.4"/><rect x="2444" y="639.6" width="2" height="1.3" fill="#4ec9b0" opacity="0.4"/><rect x="2447" y="639.6" width="6" height="1.3" fill="#6a9955" opacity="0.4"/><rect x="2454" y="639.6" width="5" height="1.3" fill="#4ec9b0" opacity="0.4"/><rect x="2425" y="641.8" width="3" height="1.3" fill="#c586c0" opacity="0.4"/><rect x="2429" y="641.8" width="7" height="1.3" fill="#bbbbbb" opacity="0.4"/><rect x="2437" y="641.8" width="9" height="1.3" fill="#ce9178" opacity="0.4"/><rect x="2447" y="641.8" width="7" height="1.3" fill="#6a9955" opacity="0.4"/><rect x="2455" y="641.8" width="4" height="1.3" fill="#ce9178" opacity="0.4"/><rect x="2460" y="641.8" width="3" height="1.3" fill="#4ec9b0" opacity="0.4"/><rect x="2464" y="641.8" width="2" height="1.3" fill="#bbbbbb" opacity="0.4"/><rect x="2467" y="641.8" width="9" height="1.3" fill="#4ec9b0" opacity="0.4"/><rect x="2477" y="641.8" width="7" height="1.3" fill="#569cd6" opacity="0.4"/><rect x="2422" y="644.0" width="9" height="1.3" fill="#bbbbbb" opacity="0.4"/><rect x="2432" y="644.0" width="9" height="1.3" fill="#c586c0" opacity="0.4"/><rect x="2442" y="644.0" width="7" height="1.3" fill="#4ec9b0" opacity="0.4"/><rect x="2450" y="644.0" width="7" height="1.3" fill="#4ec9b0" opacity="0.4"/><rect x="2458" y="644.0" width="6" height="1.3" fill="#569cd6" opacity="0.4"/><rect x="2465" y="644.0" width="6" height="1.3" fill="#569cd6" opacity="0.4"/><rect x="2422" y="646.2" width="2" height="1.3" fill="#4ec9b0" opacity="0.4"/><rect x="2425" y="646.2" width="8" height="1.3" fill="#dcdcaa" opacity="0.4"/><rect x="2434" y="646.2" width="4" height="1.3" fill="#6a9955" opacity="0.4"/><rect x="2439" y="646.2" width="7" height="1.3" fill="#c586c0" opacity="0.4"/><rect x="2447" y="646.2" width="4" height="1.3" fill="#4ec9b0" opacity="0.4"/><rect x="2452" y="646.2" width="6" height="1.3" fill="#569cd6" opacity="0.4"/><rect x="2459" y="646.2" width="7" height="1.3" fill="#bbbbbb" opacity="0.4"/><rect x="2467" y="646.2" width="4" height="1.3" fill="#569cd6" opacity="0.4"/><rect x="2472" y="646.2" width="7" height="1.3" fill="#6a9955" opacity="0.4"/><rect x="2422" y="648.4" width="7" height="1.3" fill="#dcdcaa" opacity="0.4"/><rect x="2430" y="648.4" width="6" height="1.3" fill="#c586c0" opacity="0.4"/><rect x="2437" y="648.4" width="2" height="1.3" fill="#4ec9b0" opacity="0.4"/><rect x="2440" y="648.4" width="3" height="1.3" fill="#ce9178" opacity="0.4"/><rect x="2444" y="648.4" width="8" height="1.3" fill="#4ec9b0" opacity="0.4"/><rect x="2453" y="648.4" width="5" height="1.3" fill="#bbbbbb" opacity="0.4"/><rect x="2459" y="648.4" width="8" height="1.3" fill="#bbbbbb" opacity="0.4"/><rect x="2425" y="650.6" width="3" height="1.3" fill="#c586c0" opacity="0.4"/><rect x="2429" y="650.6" width="5" height="1.3" fill="#c586c0" opacity="0.4"/><rect x="2435" y="650.6" width="4" height="1.3" fill="#bbbbbb" opacity="0.4"/><rect x="2440" y="650.6" width="8" height="1.3" fill="#4ec9b0" opacity="0.4"/><rect x="2449" y="650.6" width="2" height="1.3" fill="#dcdcaa" opacity="0.4"/><rect x="2452" y="650.6" width="9" height="1.3" fill="#bbbbbb" opacity="0.4"/><rect x="2462" y="650.6" width="5" height="1.3" fill="#c586c0" opacity="0.4"/><rect x="2468" y="650.6" width="7" height="1.3" fill="#4ec9b0" opacity="0.4"/><rect x="2428" y="655.0" width="4" height="1.3" fill="#6a9955" opacity="0.4"/><rect x="2433" y="655.0" width="3" height="1.3" fill="#569cd6" opacity="0.4"/><rect x="2437" y="655.0" width="2" height="1.3" fill="#ce9178" opacity="0.4"/><rect x="2440" y="655.0" width="8" height="1.3" fill="#6a9955" opacity="0.4"/><rect x="2449" y="655.0" width="3" height="1.3" fill="#bbbbbb" opacity="0.4"/><rect x="2453" y="655.0" width="2" height="1.3" fill="#569cd6" opacity="0.4"/><rect x="2456" y="655.0" width="4" height="1.3" fill="#569cd6" opacity="0.4"/><rect x="2461" y="655.0" width="4" height="1.3" fill="#bbbbbb" opacity="0.4"/><rect x="2425" y="657.2" width="7" height="1.3" fill="#ce9178" opacity="0.4"/><rect x="2433" y="657.2" width="5" height="1.3" fill="#bbbbbb" opacity="0.4"/><rect x="2439" y="657.2" width="3" height="1.3" fill="#ce9178" opacity="0.4"/><rect x="2443" y="657.2" width="7" height="1.3" fill="#ce9178" opacity="0.4"/><rect x="2451" y="657.2" width="9" height="1.3" fill="#bbbbbb" opacity="0.4"/><rect x="2461" y="657.2" width="4" height="1.3" fill="#bbbbbb" opacity="0.4"/><rect x="2466" y="657.2" width="3" height="1.3" fill="#dcdcaa" opacity="0.4"/><rect x="2470" y="657.2" width="2" height="1.3" fill="#569cd6" opacity="0.4"/><rect x="2473" y="657.2" width="7" height="1.3" fill="#ce9178" opacity="0.4"/><rect x="2481" y="657.2" width="4" height="1.3" fill="#ce9178" opacity="0.4"/><rect x="2425" y="659.4" width="4" height="1.3" fill="#6a9955" opacity="0.4"/><rect x="2430" y="659.4" width="7" height="1.3" fill="#ce9178" opacity="0.4"/><rect x="2438" y="659.4" width="2" height="1.3" fill="#dcdcaa" opacity="0.4"/><rect x="2441" y="659.4" width="5" height="1.3" fill="#c586c0" opacity="0.4"/><rect x="2447" y="659.4" width="9" height="1.3" fill="#569cd6" opacity="0.4"/><rect x="2457" y="659.4" width="3" height="1.3" fill="#c586c0" opacity="0.4"/><rect x="2461" y="659.4" width="7" height="1.3" fill="#ce9178" opacity="0.4"/><rect x="2425" y="661.6" width="5" height="1.3" fill="#ce9178" opacity="0.4"/><rect x="2431" y="661.6" width="9" height="1.3" fill="#bbbbbb" opacity="0.4"/><rect x="2441" y="661.6" width="6" height="1.3" fill="#4ec9b0" opacity="0.4"/><rect x="2448" y="661.6" width="5" height="1.3" fill="#c586c0" opacity="0.4"/><rect x="2454" y="661.6" width="5" height="1.3" fill="#ce9178" opacity="0.4"/><rect x="2422" y="663.8" width="6" height="1.3" fill="#569cd6" opacity="0.4"/><rect x="2429" y="663.8" width="3" height="1.3" fill="#c586c0" opacity="0.4"/><rect x="2433" y="663.8" width="6" height="1.3" fill="#569cd6" opacity="0.4"/><rect x="2440" y="663.8" width="9" height="1.3" fill="#c586c0" opacity="0.4"/><rect x="2450" y="663.8" width="9" height="1.3" fill="#c586c0" opacity="0.4"/><rect x="2460" y="663.8" width="3" height="1.3" fill="#569cd6" opacity="0.4"/><rect x="2464" y="663.8" width="3" height="1.3" fill="#dcdcaa" opacity="0.4"/><rect x="2468" y="663.8" width="8" height="1.3" fill="#569cd6" opacity="0.4"/><rect x="2477" y="663.8" width="3" height="1.3" fill="#dcdcaa" opacity="0.4"/><rect x="2481" y="663.8" width="4" height="1.3" fill="#c586c0" opacity="0.4"/><rect x="2428" y="666.0" width="3" height="1.3" fill="#569cd6" opacity="0.4"/><rect x="2432" y="666.0" width="3" height="1.3" fill="#bbbbbb" opacity="0.4"/><rect x="2436" y="666.0" width="8" height="1.3" fill="#ce9178" opacity="0.4"/><rect x="2445" y="666.0" width="4" height="1.3" fill="#c586c0" opacity="0.4"/><rect x="2450" y="666.0" width="9" height="1.3" fill="#dcdcaa" opacity="0.4"/><rect x="2460" y="666.0" width="3" height="1.3" fill="#c586c0" opacity="0.4"/><rect x="2464" y="666.0" width="7" height="1.3" fill="#dcdcaa" opacity="0.4"/><rect x="2425" y="668.2" width="2" height="1.3" fill="#6a9955" opacity="0.4"/><rect x="2428" y="668.2" width="2" height="1.3" fill="#4ec9b0" opacity="0.4"/><rect x="2431" y="668.2" width="5" height="1.3" fill="#bbbbbb" opacity="0.4"/><rect x="2437" y="668.2" width="6" height="1.3" fill="#4ec9b0" opacity="0.4"/><rect x="2444" y="668.2" width="4" height="1.3" fill="#bbbbbb" opacity="0.4"/><rect x="2422" y="670.4" width="5" height="1.3" fill="#ce9178" opacity="0.4"/><rect x="2428" y="670.4" width="3" height="1.3" fill="#569cd6" opacity="0.4"/><rect x="2432" y="670.4" width="7" height="1.3" fill="#c586c0" opacity="0.4"/><rect x="2440" y="670.4" width="7" height="1.3" fill="#569cd6" opacity="0.4"/><rect x="2448" y="670.4" width="7" height="1.3" fill="#dcdcaa" opacity="0.4"/><rect x="2456" y="670.4" width="2" height="1.3" fill="#dcdcaa" opacity="0.4"/><rect x="2459" y="670.4" width="6" height="1.3" fill="#4ec9b0" opacity="0.4"/><rect x="2466" y="670.4" width="5" height="1.3" fill="#6a9955" opacity="0.4"/><rect x="2428" y="672.6" width="7" height="1.3" fill="#569cd6" opacity="0.4"/><rect x="2436" y="672.6" width="9" height="1.3" fill="#4ec9b0" opacity="0.4"/><rect x="2446" y="672.6" width="7" height="1.3" fill="#4ec9b0" opacity="0.4"/><rect x="2454" y="672.6" width="7" height="1.3" fill="#ce9178" opacity="0.4"/><rect x="2462" y="672.6" width="7" height="1.3" fill="#dcdcaa" opacity="0.4"/><rect x="2470" y="672.6" width="3" height="1.3" fill="#4ec9b0" opacity="0.4"/><rect x="2474" y="672.6" width="5" height="1.3" fill="#6a9955" opacity="0.4"/><rect x="2480" y="672.6" width="5" height="1.3" fill="#c586c0" opacity="0.4"/><rect x="2422" y="674.8" width="9" height="1.3" fill="#4ec9b0" opacity="0.4"/><rect x="2432" y="674.8" width="2" height="1.3" fill="#bbbbbb" opacity="0.4"/><rect x="2435" y="674.8" width="3" height="1.3" fill="#4ec9b0" opacity="0.4"/><rect x="2439" y="674.8" width="6" height="1.3" fill="#c586c0" opacity="0.4"/><rect x="2446" y="674.8" width="4" height="1.3" fill="#ce9178" opacity="0.4"/><rect x="2451" y="674.8" width="6" height="1.3" fill="#dcdcaa" opacity="0.4"/><rect x="2458" y="674.8" width="8" height="1.3" fill="#dcdcaa" opacity="0.4"/><rect x="2467" y="674.8" width="4" height="1.3" fill="#ce9178" opacity="0.4"/><rect x="2472" y="674.8" width="6" height="1.3" fill="#ce9178" opacity="0.4"/><rect x="2479" y="674.8" width="6" height="1.3" fill="#bbbbbb" opacity="0.4"/><rect x="2422" y="679.2" width="9" height="1.3" fill="#dcdcaa" opacity="0.4"/><rect x="2432" y="679.2" width="2" height="1.3" fill="#dcdcaa" opacity="0.4"/><rect x="2435" y="679.2" width="2" height="1.3" fill="#4ec9b0" opacity="0.4"/><rect x="2438" y="679.2" width="4" height="1.3" fill="#ce9178" opacity="0.4"/><rect x="2443" y="679.2" width="8" height="1.3" fill="#dcdcaa" opacity="0.4"/><rect x="2452" y="679.2" width="9" height="1.3" fill="#c586c0" opacity="0.4"/><rect x="2425" y="681.4" width="5" height="1.3" fill="#dcdcaa" opacity="0.4"/><rect x="2431" y="681.4" width="3" height="1.3" fill="#6a9955" opacity="0.4"/><rect x="2435" y="681.4" width="7" height="1.3" fill="#ce9178" opacity="0.4"/><rect x="2443" y="681.4" width="5" height="1.3" fill="#6a9955" opacity="0.4"/><rect x="2449" y="681.4" width="4" height="1.3" fill="#ce9178" opacity="0.4"/><rect x="2454" y="681.4" width="2" height="1.3" fill="#c586c0" opacity="0.4"/><rect x="2457" y="681.4" width="4" height="1.3" fill="#dcdcaa" opacity="0.4"/><rect x="2425" y="683.6" width="9" height="1.3" fill="#bbbbbb" opacity="0.4"/><rect x="2435" y="683.6" width="7" height="1.3" fill="#6a9955" opacity="0.4"/><rect x="2443" y="683.6" width="2" height="1.3" fill="#6a9955" opacity="0.4"/><rect x="2446" y="683.6" width="9" height="1.3" fill="#6a9955" opacity="0.4"/><rect x="2422" y="685.8" width="2" height="1.3" fill="#569cd6" opacity="0.4"/><rect x="2425" y="685.8" width="4" height="1.3" fill="#569cd6" opacity="0.4"/><rect x="2430" y="685.8" width="4" height="1.3" fill="#6a9955" opacity="0.4"/><rect x="2435" y="685.8" width="8" height="1.3" fill="#6a9955" opacity="0.4"/><rect x="2444" y="685.8" width="3" height="1.3" fill="#ce9178" opacity="0.4"/><rect x="2448" y="685.8" width="6" height="1.3" fill="#6a9955" opacity="0.4"/><rect x="2455" y="685.8" width="4" height="1.3" fill="#569cd6" opacity="0.4"/><rect x="2422" y="690.2" width="5" height="1.3" fill="#dcdcaa" opacity="0.4"/><rect x="2428" y="690.2" width="8" height="1.3" fill="#569cd6" opacity="0.4"/><rect x="2437" y="690.2" width="3" height="1.3" fill="#6a9955" opacity="0.4"/><rect x="2441" y="690.2" width="6" height="1.3" fill="#dcdcaa" opacity="0.4"/><rect x="2448" y="690.2" width="5" height="1.3" fill="#dcdcaa" opacity="0.4"/><rect x="2454" y="690.2" width="4" height="1.3" fill="#569cd6" opacity="0.4"/><rect x="2459" y="690.2" width="3" height="1.3" fill="#6a9955" opacity="0.4"/><rect x="2463" y="690.2" width="7" height="1.3" fill="#569cd6" opacity="0.4"/><rect x="2471" y="690.2" width="7" height="1.3" fill="#ce9178" opacity="0.4"/><rect x="2479" y="690.2" width="5" height="1.3" fill="#6a9955" opacity="0.4"/><rect x="2431" y="692.4" width="7" height="1.3" fill="#4ec9b0" opacity="0.4"/><rect x="2439" y="692.4" width="7" height="1.3" fill="#569cd6" opacity="0.4"/><rect x="2447" y="692.4" width="7" height="1.3" fill="#dcdcaa" opacity="0.4"/><rect x="2455" y="692.4" width="9" height="1.3" fill="#ce9178" opacity="0.4"/><rect x="2422" y="694.6" width="5" height="1.3" fill="#6a9955" opacity="0.4"/><rect x="2428" y="694.6" width="4" height="1.3" fill="#c586c0" opacity="0.4"/><rect x="2433" y="694.6" width="5" height="1.3" fill="#4ec9b0" opacity="0.4"/><rect x="2439" y="694.6" width="9" height="1.3" fill="#bbbbbb" opacity="0.4"/><rect x="2449" y="694.6" width="9" height="1.3" fill="#bbbbbb" opacity="0.4"/><rect x="2459" y="694.6" width="6" height="1.3" fill="#c586c0" opacity="0.4"/><rect x="2466" y="694.6" width="3" height="1.3" fill="#c586c0" opacity="0.4"/><rect x="2470" y="694.6" width="6" height="1.3" fill="#569cd6" opacity="0.4"/><rect x="2477" y="694.6" width="6" height="1.3" fill="#6a9955" opacity="0.4"/><rect x="2428" y="696.8" width="7" height="1.3" fill="#4ec9b0" opacity="0.4"/><rect x="2436" y="696.8" width="5" height="1.3" fill="#ce9178" opacity="0.4"/><rect x="2442" y="696.8" width="3" height="1.3" fill="#ce9178" opacity="0.4"/><rect x="2446" y="696.8" width="4" height="1.3" fill="#6a9955" opacity="0.4"/><rect x="2451" y="696.8" width="7" height="1.3" fill="#bbbbbb" opacity="0.4"/><rect x="2459" y="696.8" width="7" height="1.3" fill="#dcdcaa" opacity="0.4"/><rect x="2467" y="696.8" width="8" height="1.3" fill="#569cd6" opacity="0.4"/><rect x="2476" y="696.8" width="3" height="1.3" fill="#dcdcaa" opacity="0.4"/><rect x="2422" y="699.0" width="6" height="1.3" fill="#ce9178" opacity="0.4"/><rect x="2429" y="699.0" width="2" height="1.3" fill="#dcdcaa" opacity="0.4"/><rect x="2432" y="699.0" width="4" height="1.3" fill="#569cd6" opacity="0.4"/><rect x="2437" y="699.0" width="6" height="1.3" fill="#c586c0" opacity="0.4"/><rect x="2444" y="699.0" width="2" height="1.3" fill="#c586c0" opacity="0.4"/><rect x="2428" y="703.4" width="3" height="1.3" fill="#c586c0" opacity="0.4"/><rect x="2432" y="703.4" width="5" height="1.3" fill="#569cd6" opacity="0.4"/><rect x="2438" y="703.4" width="2" height="1.3" fill="#c586c0" opacity="0.4"/><rect x="2441" y="703.4" width="2" height="1.3" fill="#4ec9b0" opacity="0.4"/><rect x="2444" y="703.4" width="3" height="1.3" fill="#dcdcaa" opacity="0.4"/><rect x="2448" y="703.4" width="7" height="1.3" fill="#569cd6" opacity="0.4"/><rect x="2422" y="705.6" width="2" height="1.3" fill="#569cd6" opacity="0.4"/><rect x="2425" y="705.6" width="7" height="1.3" fill="#4ec9b0" opacity="0.4"/><rect x="2433" y="705.6" width="5" height="1.3" fill="#6a9955" opacity="0.4"/><rect x="2439" y="705.6" width="7" height="1.3" fill="#dcdcaa" opacity="0.4"/><rect x="2431" y="707.8" width="8" height="1.3" fill="#ce9178" opacity="0.4"/><rect x="2440" y="707.8" width="7" height="1.3" fill="#c586c0" opacity="0.4"/><rect x="2448" y="707.8" width="2" height="1.3" fill="#dcdcaa" opacity="0.4"/><rect x="2451" y="707.8" width="8" height="1.3" fill="#dcdcaa" opacity="0.4"/><rect x="2460" y="707.8" width="2" height="1.3" fill="#4ec9b0" opacity="0.4"/><rect x="2463" y="707.8" width="7" height="1.3" fill="#dcdcaa" opacity="0.4"/><rect x="2428" y="710.0" width="6" height="1.3" fill="#bbbbbb" opacity="0.4"/><rect x="2435" y="710.0" width="2" height="1.3" fill="#4ec9b0" opacity="0.4"/><rect x="2438" y="710.0" width="7" height="1.3" fill="#ce9178" opacity="0.4"/><rect x="2446" y="710.0" width="7" height="1.3" fill="#4ec9b0" opacity="0.4"/><rect x="2454" y="710.0" width="8" height="1.3" fill="#ce9178" opacity="0.4"/><rect x="2425" y="712.2" width="3" height="1.3" fill="#4ec9b0" opacity="0.4"/><rect x="2429" y="712.2" width="4" height="1.3" fill="#c586c0" opacity="0.4"/><rect x="2434" y="712.2" width="4" height="1.3" fill="#ce9178" opacity="0.4"/><rect x="2439" y="712.2" width="3" height="1.3" fill="#6a9955" opacity="0.4"/><rect x="2425" y="714.4" width="4" height="1.3" fill="#569cd6" opacity="0.4"/><rect x="2430" y="714.4" width="7" height="1.3" fill="#c586c0" opacity="0.4"/><rect x="2438" y="714.4" width="6" height="1.3" fill="#dcdcaa" opacity="0.4"/><rect x="2445" y="714.4" width="9" height="1.3" fill="#dcdcaa" opacity="0.4"/><rect x="2431" y="718.8" width="9" height="1.3" fill="#ce9178" opacity="0.4"/><rect x="2441" y="718.8" width="6" height="1.3" fill="#6a9955" opacity="0.4"/><rect x="2448" y="718.8" width="6" height="1.3" fill="#c586c0" opacity="0.4"/><rect x="2455" y="718.8" width="6" height="1.3" fill="#4ec9b0" opacity="0.4"/><rect x="2462" y="718.8" width="9" height="1.3" fill="#4ec9b0" opacity="0.4"/><rect x="2472" y="718.8" width="7" height="1.3" fill="#c586c0" opacity="0.4"/><rect x="2480" y="718.8" width="5" height="1.3" fill="#bbbbbb" opacity="0.4"/><rect x="2422" y="721.0" width="2" height="1.3" fill="#ce9178" opacity="0.4"/><rect x="2425" y="721.0" width="4" height="1.3" fill="#4ec9b0" opacity="0.4"/><rect x="2430" y="721.0" width="2" height="1.3" fill="#ce9178" opacity="0.4"/><rect x="2433" y="721.0" width="5" height="1.3" fill="#ce9178" opacity="0.4"/><rect x="2439" y="721.0" width="4" height="1.3" fill="#6a9955" opacity="0.4"/><rect x="2444" y="721.0" width="7" height="1.3" fill="#569cd6" opacity="0.4"/><rect x="2452" y="721.0" width="4" height="1.3" fill="#c586c0" opacity="0.4"/><rect x="2457" y="721.0" width="4" height="1.3" fill="#ce9178" opacity="0.4"/><rect x="2462" y="721.0" width="2" height="1.3" fill="#6a9955" opacity="0.4"/><rect x="2465" y="721.0" width="5" height="1.3" fill="#bbbbbb" opacity="0.4"/><rect x="2471" y="721.0" width="9" height="1.3" fill="#c586c0" opacity="0.4"/><rect x="2481" y="721.0" width="4" height="1.3" fill="#dcdcaa" opacity="0.4"/><rect x="2422" y="723.2" width="2" height="1.3" fill="#4ec9b0" opacity="0.4"/><rect x="2425" y="723.2" width="2" height="1.3" fill="#4ec9b0" opacity="0.4"/><rect x="2428" y="723.2" width="8" height="1.3" fill="#569cd6" opacity="0.4"/><rect x="2437" y="723.2" width="7" height="1.3" fill="#4ec9b0" opacity="0.4"/><rect x="2445" y="723.2" width="5" height="1.3" fill="#ce9178" opacity="0.4"/><rect x="2425" y="725.4" width="5" height="1.3" fill="#4ec9b0" opacity="0.4"/><rect x="2431" y="725.4" width="6" height="1.3" fill="#4ec9b0" opacity="0.4"/><rect x="2438" y="725.4" width="6" height="1.3" fill="#569cd6" opacity="0.4"/><rect x="2445" y="725.4" width="8" height="1.3" fill="#c586c0" opacity="0.4"/><rect x="2454" y="725.4" width="5" height="1.3" fill="#6a9955" opacity="0.4"/><rect x="2460" y="725.4" width="5" height="1.3" fill="#6a9955" opacity="0.4"/><rect x="2466" y="725.4" width="8" height="1.3" fill="#569cd6" opacity="0.4"/><rect x="2475" y="725.4" width="6" height="1.3" fill="#6a9955" opacity="0.4"/><rect x="2482" y="725.4" width="3" height="1.3" fill="#c586c0" opacity="0.4"/><rect x="2422" y="727.6" width="6" height="1.3" fill="#dcdcaa" opacity="0.4"/><rect x="2429" y="727.6" width="4" height="1.3" fill="#dcdcaa" opacity="0.4"/><rect x="2434" y="727.6" width="6" height="1.3" fill="#6a9955" opacity="0.4"/><rect x="2441" y="727.6" width="3" height="1.3" fill="#6a9955" opacity="0.4"/><rect x="2445" y="727.6" width="2" height="1.3" fill="#bbbbbb" opacity="0.4"/><rect x="2448" y="727.6" width="5" height="1.3" fill="#c586c0" opacity="0.4"/><rect x="2454" y="727.6" width="7" height="1.3" fill="#569cd6" opacity="0.4"/><rect x="2425" y="729.8" width="2" height="1.3" fill="#dcdcaa" opacity="0.4"/><rect x="2428" y="729.8" width="5" height="1.3" fill="#dcdcaa" opacity="0.4"/><rect x="2434" y="729.8" width="7" height="1.3" fill="#4ec9b0" opacity="0.4"/><rect x="2442" y="729.8" width="9" height="1.3" fill="#c586c0" opacity="0.4"/><rect x="2422" y="732.0" width="6" height="1.3" fill="#569cd6" opacity="0.4"/><rect x="2429" y="732.0" width="2" height="1.3" fill="#dcdcaa" opacity="0.4"/><rect x="2432" y="732.0" width="3" height="1.3" fill="#c586c0" opacity="0.4"/><rect x="2436" y="732.0" width="2" height="1.3" fill="#c586c0" opacity="0.4"/><rect x="2439" y="732.0" width="6" height="1.3" fill="#c586c0" opacity="0.4"/><rect x="2446" y="732.0" width="7" height="1.3" fill="#4ec9b0" opacity="0.4"/><rect x="2454" y="732.0" width="4" height="1.3" fill="#bbbbbb" opacity="0.4"/><rect x="2459" y="732.0" width="8" height="1.3" fill="#4ec9b0" opacity="0.4"/><rect x="2468" y="732.0" width="8" height="1.3" fill="#6a9955" opacity="0.4"/><rect x="2477" y="732.0" width="8" height="1.3" fill="#6a9955" opacity="0.4"/><rect x="2422" y="734.2" width="5" height="1.3" fill="#c586c0" opacity="0.4"/><rect x="2428" y="734.2" width="2" height="1.3" fill="#4ec9b0" opacity="0.4"/><rect x="2431" y="734.2" width="4" height="1.3" fill="#ce9178" opacity="0.4"/><rect x="2436" y="734.2" width="5" height="1.3" fill="#ce9178" opacity="0.4"/><rect x="2442" y="734.2" width="8" height="1.3" fill="#569cd6" opacity="0.4"/><rect x="2451" y="734.2" width="3" height="1.3" fill="#569cd6" opacity="0.4"/><rect x="2455" y="734.2" width="2" height="1.3" fill="#4ec9b0" opacity="0.4"/><rect x="2458" y="734.2" width="7" height="1.3" fill="#4ec9b0" opacity="0.4"/><rect x="2466" y="734.2" width="3" height="1.3" fill="#4ec9b0" opacity="0.4"/><rect x="2422" y="736.4" width="8" height="1.3" fill="#4ec9b0" opacity="0.4"/><rect x="2431" y="736.4" width="4" height="1.3" fill="#c586c0" opacity="0.4"/><rect x="2436" y="736.4" width="4" height="1.3" fill="#569cd6" opacity="0.4"/><rect x="2441" y="736.4" width="3" height="1.3" fill="#ce9178" opacity="0.4"/><rect x="2445" y="736.4" width="7" height="1.3" fill="#dcdcaa" opacity="0.4"/><rect x="2453" y="736.4" width="9" height="1.3" fill="#4ec9b0" opacity="0.4"/><rect x="2422" y="738.6" width="5" height="1.3" fill="#569cd6" opacity="0.4"/><rect x="2428" y="738.6" width="3" height="1.3" fill="#6a9955" opacity="0.4"/><rect x="2432" y="738.6" width="4" height="1.3" fill="#4ec9b0" opacity="0.4"/><rect x="2437" y="738.6" width="6" height="1.3" fill="#6a9955" opacity="0.4"/><rect x="2444" y="738.6" width="3" height="1.3" fill="#4ec9b0" opacity="0.4"/><rect x="2448" y="738.6" width="5" height="1.3" fill="#ce9178" opacity="0.4"/><rect x="2454" y="738.6" width="2" height="1.3" fill="#bbbbbb" opacity="0.4"/><rect x="2457" y="738.6" width="7" height="1.3" fill="#6a9955" opacity="0.4"/><rect x="2465" y="738.6" width="2" height="1.3" fill="#6a9955" opacity="0.4"/><rect x="2468" y="738.6" width="2" height="1.3" fill="#569cd6" opacity="0.4"/><rect x="2471" y="738.6" width="9" height="1.3" fill="#ce9178" opacity="0.4"/><rect x="2481" y="738.6" width="4" height="1.3" fill="#ce9178" opacity="0.4"/><rect x="2425" y="740.8" width="6" height="1.3" fill="#bbbbbb" opacity="0.4"/><rect x="2432" y="740.8" width="8" height="1.3" fill="#6a9955" opacity="0.4"/><rect x="2441" y="740.8" width="8" height="1.3" fill="#bbbbbb" opacity="0.4"/><rect x="2450" y="740.8" width="4" height="1.3" fill="#bbbbbb" opacity="0.4"/><rect x="2455" y="740.8" width="8" height="1.3" fill="#bbbbbb" opacity="0.4"/><rect x="2464" y="740.8" width="4" height="1.3" fill="#569cd6" opacity="0.4"/><rect x="2469" y="740.8" width="2" height="1.3" fill="#c586c0" opacity="0.4"/><rect x="2472" y="740.8" width="6" height="1.3" fill="#569cd6" opacity="0.4"/><rect x="2479" y="740.8" width="6" height="1.3" fill="#c586c0" opacity="0.4"/><rect x="2431" y="743.0" width="3" height="1.3" fill="#dcdcaa" opacity="0.4"/><rect x="2435" y="743.0" width="2" height="1.3" fill="#569cd6" opacity="0.4"/><rect x="2438" y="743.0" width="2" height="1.3" fill="#bbbbbb" opacity="0.4"/><rect x="2441" y="743.0" width="7" height="1.3" fill="#569cd6" opacity="0.4"/><rect x="2428" y="745.2" width="7" height="1.3" fill="#bbbbbb" opacity="0.4"/><rect x="2436" y="745.2" width="2" height="1.3" fill="#bbbbbb" opacity="0.4"/><rect x="2439" y="745.2" width="9" height="1.3" fill="#ce9178" opacity="0.4"/><rect x="2449" y="745.2" width="7" height="1.3" fill="#ce9178" opacity="0.4"/><rect x="2457" y="745.2" width="8" height="1.3" fill="#c586c0" opacity="0.4"/><rect x="2466" y="745.2" width="8" height="1.3" fill="#6a9955" opacity="0.4"/><rect x="2475" y="745.2" width="3" height="1.3" fill="#bbbbbb" opacity="0.4"/><rect x="2425" y="747.4" width="7" height="1.3" fill="#4ec9b0" opacity="0.4"/><rect x="2433" y="747.4" width="5" height="1.3" fill="#ce9178" opacity="0.4"/><rect x="2439" y="747.4" width="6" height="1.3" fill="#6a9955" opacity="0.4"/><rect x="2446" y="747.4" width="9" height="1.3" fill="#dcdcaa" opacity="0.4"/><rect x="2456" y="747.4" width="7" height="1.3" fill="#ce9178" opacity="0.4"/><rect x="2464" y="747.4" width="9" height="1.3" fill="#ce9178" opacity="0.4"/><rect x="2422" y="749.6" width="7" height="1.3" fill="#ce9178" opacity="0.4"/><rect x="2430" y="749.6" width="5" height="1.3" fill="#ce9178" opacity="0.4"/><rect x="2425" y="751.8" width="4" height="1.3" fill="#c586c0" opacity="0.4"/><rect x="2430" y="751.8" width="9" height="1.3" fill="#c586c0" opacity="0.4"/><rect x="2440" y="751.8" width="2" height="1.3" fill="#6a9955" opacity="0.4"/><rect x="2443" y="751.8" width="8" height="1.3" fill="#6a9955" opacity="0.4"/><rect x="2425" y="754.0" width="8" height="1.3" fill="#c586c0" opacity="0.4"/><rect x="2434" y="754.0" width="6" height="1.3" fill="#bbbbbb" opacity="0.4"/><rect x="2428" y="758.4" width="6" height="1.3" fill="#bbbbbb" opacity="0.4"/><rect x="2435" y="758.4" width="3" height="1.3" fill="#6a9955" opacity="0.4"/><rect x="2439" y="758.4" width="8" height="1.3" fill="#6a9955" opacity="0.4"/><rect x="2448" y="758.4" width="9" height="1.3" fill="#569cd6" opacity="0.4"/><rect x="2458" y="758.4" width="3" height="1.3" fill="#bbbbbb" opacity="0.4"/><rect x="2462" y="758.4" width="9" height="1.3" fill="#569cd6" opacity="0.4"/><rect x="2428" y="760.6" width="2" height="1.3" fill="#569cd6" opacity="0.4"/><rect x="2431" y="760.6" width="4" height="1.3" fill="#6a9955" opacity="0.4"/><rect x="2436" y="760.6" width="9" height="1.3" fill="#ce9178" opacity="0.4"/><rect x="2428" y="762.8" width="7" height="1.3" fill="#dcdcaa" opacity="0.4"/><rect x="2436" y="762.8" width="8" height="1.3" fill="#6a9955" opacity="0.4"/><rect x="2445" y="762.8" width="2" height="1.3" fill="#ce9178" opacity="0.4"/><rect x="2448" y="762.8" width="5" height="1.3" fill="#4ec9b0" opacity="0.4"/><rect x="2454" y="762.8" width="6" height="1.3" fill="#4ec9b0" opacity="0.4"/><rect x="2425" y="765.0" width="6" height="1.3" fill="#6a9955" opacity="0.4"/><rect x="2432" y="765.0" width="6" height="1.3" fill="#c586c0" opacity="0.4"/><rect x="2439" y="765.0" width="6" height="1.3" fill="#dcdcaa" opacity="0.4"/><rect x="2446" y="765.0" width="9" height="1.3" fill="#4ec9b0" opacity="0.4"/><rect x="2456" y="765.0" width="9" height="1.3" fill="#dcdcaa" opacity="0.4"/><rect x="2466" y="765.0" width="3" height="1.3" fill="#c586c0" opacity="0.4"/><rect x="2470" y="765.0" width="4" height="1.3" fill="#bbbbbb" opacity="0.4"/><rect x="2475" y="765.0" width="6" height="1.3" fill="#ce9178" opacity="0.4"/><rect x="2422" y="767.2" width="9" height="1.3" fill="#bbbbbb" opacity="0.4"/><rect x="2432" y="767.2" width="7" height="1.3" fill="#4ec9b0" opacity="0.4"/><rect x="2440" y="767.2" width="6" height="1.3" fill="#bbbbbb" opacity="0.4"/><rect x="2447" y="767.2" width="8" height="1.3" fill="#569cd6" opacity="0.4"/><rect x="2456" y="767.2" width="6" height="1.3" fill="#6a9955" opacity="0.4"/><rect x="2463" y="767.2" width="5" height="1.3" fill="#bbbbbb" opacity="0.4"/><rect x="2469" y="767.2" width="4" height="1.3" fill="#ce9178" opacity="0.4"/><rect x="2474" y="767.2" width="5" height="1.3" fill="#dcdcaa" opacity="0.4"/><rect x="2425" y="769.4" width="5" height="1.3" fill="#6a9955" opacity="0.4"/><rect x="2431" y="769.4" width="3" height="1.3" fill="#4ec9b0" opacity="0.4"/><rect x="2435" y="769.4" width="9" height="1.3" fill="#bbbbbb" opacity="0.4"/><rect x="2425" y="771.6" width="2" height="1.3" fill="#4ec9b0" opacity="0.4"/><rect x="2428" y="771.6" width="9" height="1.3" fill="#bbbbbb" opacity="0.4"/><rect x="2438" y="771.6" width="8" height="1.3" fill="#bbbbbb" opacity="0.4"/><rect x="2447" y="771.6" width="9" height="1.3" fill="#c586c0" opacity="0.4"/><rect x="2457" y="771.6" width="3" height="1.3" fill="#bbbbbb" opacity="0.4"/><rect x="2461" y="771.6" width="8" height="1.3" fill="#bbbbbb" opacity="0.4"/><rect x="2422" y="773.8" width="5" height="1.3" fill="#569cd6" opacity="0.4"/><rect x="2428" y="773.8" width="5" height="1.3" fill="#bbbbbb" opacity="0.4"/><rect x="2434" y="773.8" width="2" height="1.3" fill="#569cd6" opacity="0.4"/><rect x="2437" y="773.8" width="6" height="1.3" fill="#ce9178" opacity="0.4"/><rect x="2444" y="773.8" width="7" height="1.3" fill="#dcdcaa" opacity="0.4"/><rect x="2452" y="773.8" width="8" height="1.3" fill="#dcdcaa" opacity="0.4"/><rect x="2461" y="773.8" width="9" height="1.3" fill="#4ec9b0" opacity="0.4"/><rect x="2471" y="773.8" width="3" height="1.3" fill="#c586c0" opacity="0.4"/><rect x="2428" y="776.0" width="2" height="1.3" fill="#4ec9b0" opacity="0.4"/><rect x="2431" y="776.0" width="9" height="1.3" fill="#4ec9b0" opacity="0.4"/><rect x="2441" y="776.0" width="5" height="1.3" fill="#ce9178" opacity="0.4"/><rect x="2447" y="776.0" width="9" height="1.3" fill="#4ec9b0" opacity="0.4"/><rect x="2457" y="776.0" width="5" height="1.3" fill="#569cd6" opacity="0.4"/><rect x="2463" y="776.0" width="7" height="1.3" fill="#bbbbbb" opacity="0.4"/><rect x="2471" y="776.0" width="2" height="1.3" fill="#ce9178" opacity="0.4"/><rect x="2474" y="776.0" width="8" height="1.3" fill="#dcdcaa" opacity="0.4"/><rect x="2483" y="776.0" width="2" height="1.3" fill="#bbbbbb" opacity="0.4"/><rect x="2431" y="778.2" width="7" height="1.3" fill="#6a9955" opacity="0.4"/><rect x="2439" y="778.2" width="5" height="1.3" fill="#ce9178" opacity="0.4"/><rect x="2445" y="778.2" width="2" height="1.3" fill="#c586c0" opacity="0.4"/><rect x="2425" y="780.4" width="6" height="1.3" fill="#4ec9b0" opacity="0.4"/><rect x="2432" y="780.4" width="7" height="1.3" fill="#bbbbbb" opacity="0.4"/><rect x="2440" y="780.4" width="6" height="1.3" fill="#569cd6" opacity="0.4"/><rect x="2447" y="780.4" width="6" height="1.3" fill="#ce9178" opacity="0.4"/><rect x="2454" y="780.4" width="8" height="1.3" fill="#ce9178" opacity="0.4"/><rect x="2463" y="780.4" width="8" height="1.3" fill="#569cd6" opacity="0.4"/><rect x="2425" y="784.8" width="8" height="1.3" fill="#dcdcaa" opacity="0.4"/><rect x="2434" y="784.8" width="6" height="1.3" fill="#6a9955" opacity="0.4"/><rect x="2441" y="784.8" width="5" height="1.3" fill="#c586c0" opacity="0.4"/><rect x="2447" y="784.8" width="2" height="1.3" fill="#c586c0" opacity="0.4"/><rect x="2450" y="784.8" width="7" height="1.3" fill="#bbbbbb" opacity="0.4"/><rect x="2458" y="784.8" width="9" height="1.3" fill="#569cd6" opacity="0.4"/><rect x="2468" y="784.8" width="4" height="1.3" fill="#6a9955" opacity="0.4"/><rect x="2473" y="784.8" width="7" height="1.3" fill="#c586c0" opacity="0.4"/><rect x="2481" y="784.8" width="4" height="1.3" fill="#569cd6" opacity="0.4"/><rect x="2422" y="787.0" width="7" height="1.3" fill="#4ec9b0" opacity="0.4"/><rect x="2430" y="787.0" width="3" height="1.3" fill="#bbbbbb" opacity="0.4"/><rect x="2434" y="787.0" width="7" height="1.3" fill="#4ec9b0" opacity="0.4"/><rect x="2442" y="787.0" width="6" height="1.3" fill="#c586c0" opacity="0.4"/><rect x="2449" y="787.0" width="9" height="1.3" fill="#6a9955" opacity="0.4"/><rect x="2459" y="787.0" width="5" height="1.3" fill="#569cd6" opacity="0.4"/><rect x="2465" y="787.0" width="5" height="1.3" fill="#dcdcaa" opacity="0.4"/><rect x="2471" y="787.0" width="9" height="1.3" fill="#bbbbbb" opacity="0.4"/><rect x="2425" y="789.2" width="5" height="1.3" fill="#4ec9b0" opacity="0.4"/><rect x="2431" y="789.2" width="4" height="1.3" fill="#bbbbbb" opacity="0.4"/><rect x="2436" y="789.2" width="3" height="1.3" fill="#4ec9b0" opacity="0.4"/><rect x="2440" y="789.2" width="4" height="1.3" fill="#dcdcaa" opacity="0.4"/><rect x="2445" y="789.2" width="3" height="1.3" fill="#dcdcaa" opacity="0.4"/><rect x="2422" y="791.4" width="4" height="1.3" fill="#bbbbbb" opacity="0.4"/><rect x="2427" y="791.4" width="5" height="1.3" fill="#569cd6" opacity="0.4"/><rect x="2431" y="793.6" width="5" height="1.3" fill="#ce9178" opacity="0.4"/><rect x="2437" y="793.6" width="4" height="1.3" fill="#c586c0" opacity="0.4"/><rect x="2442" y="793.6" width="5" height="1.3" fill="#ce9178" opacity="0.4"/><rect x="2448" y="793.6" width="3" height="1.3" fill="#bbbbbb" opacity="0.4"/><rect x="2452" y="793.6" width="3" height="1.3" fill="#c586c0" opacity="0.4"/><rect x="2456" y="793.6" width="3" height="1.3" fill="#4ec9b0" opacity="0.4"/><rect x="2431" y="795.8" width="6" height="1.3" fill="#569cd6" opacity="0.4"/><rect x="2438" y="795.8" width="9" height="1.3" fill="#569cd6" opacity="0.4"/><rect x="2448" y="795.8" width="8" height="1.3" fill="#c586c0" opacity="0.4"/><rect x="2457" y="795.8" width="2" height="1.3" fill="#569cd6" opacity="0.4"/><rect x="2460" y="795.8" width="4" height="1.3" fill="#4ec9b0" opacity="0.4"/><rect x="2465" y="795.8" width="4" height="1.3" fill="#dcdcaa" opacity="0.4"/><rect x="2470" y="795.8" width="9" height="1.3" fill="#6a9955" opacity="0.4"/><rect x="2480" y="795.8" width="5" height="1.3" fill="#dcdcaa" opacity="0.4"/><rect x="2425" y="798.0" width="4" height="1.3" fill="#6a9955" opacity="0.4"/><rect x="2430" y="798.0" width="6" height="1.3" fill="#6a9955" opacity="0.4"/><rect x="2437" y="798.0" width="5" height="1.3" fill="#c586c0" opacity="0.4"/><rect x="2443" y="798.0" width="5" height="1.3" fill="#bbbbbb" opacity="0.4"/><rect x="2449" y="798.0" width="2" height="1.3" fill="#6a9955" opacity="0.4"/><rect x="2452" y="798.0" width="8" height="1.3" fill="#c586c0" opacity="0.4"/><rect x="2461" y="798.0" width="6" height="1.3" fill="#c586c0" opacity="0.4"/><rect x="2468" y="798.0" width="3" height="1.3" fill="#c586c0" opacity="0.4"/><rect x="2472" y="798.0" width="9" height="1.3" fill="#c586c0" opacity="0.4"/><rect x="2425" y="800.2" width="8" height="1.3" fill="#4ec9b0" opacity="0.4"/><rect x="2434" y="800.2" width="2" height="1.3" fill="#dcdcaa" opacity="0.4"/><rect x="2437" y="800.2" width="7" height="1.3" fill="#4ec9b0" opacity="0.4"/><rect x="2445" y="800.2" width="5" height="1.3" fill="#569cd6" opacity="0.4"/><rect x="2451" y="800.2" width="3" height="1.3" fill="#6a9955" opacity="0.4"/><rect x="2422" y="802.4" width="9" height="1.3" fill="#4ec9b0" opacity="0.4"/><rect x="2432" y="802.4" width="5" height="1.3" fill="#bbbbbb" opacity="0.4"/><rect x="2438" y="802.4" width="6" height="1.3" fill="#dcdcaa" opacity="0.4"/><rect x="2445" y="802.4" width="6" height="1.3" fill="#ce9178" opacity="0.4"/><rect x="2452" y="802.4" width="3" height="1.3" fill="#c586c0" opacity="0.4"/><rect x="2456" y="802.4" width="4" height="1.3" fill="#bbbbbb" opacity="0.4"/><rect x="2461" y="802.4" width="6" height="1.3" fill="#dcdcaa" opacity="0.4"/><rect x="2468" y="802.4" width="5" height="1.3" fill="#ce9178" opacity="0.4"/><rect x="2474" y="802.4" width="6" height="1.3" fill="#4ec9b0" opacity="0.4"/><rect x="2422" y="804.6" width="2" height="1.3" fill="#6a9955" opacity="0.4"/><rect x="2425" y="804.6" width="5" height="1.3" fill="#c586c0" opacity="0.4"/><rect x="2431" y="804.6" width="6" height="1.3" fill="#4ec9b0" opacity="0.4"/><rect x="2438" y="804.6" width="4" height="1.3" fill="#6a9955" opacity="0.4"/><rect x="2443" y="804.6" width="7" height="1.3" fill="#bbbbbb" opacity="0.4"/><rect x="2451" y="804.6" width="9" height="1.3" fill="#c586c0" opacity="0.4"/><rect x="2461" y="804.6" width="7" height="1.3" fill="#569cd6" opacity="0.4"/><rect x="2469" y="804.6" width="7" height="1.3" fill="#c586c0" opacity="0.4"/><rect x="2477" y="804.6" width="3" height="1.3" fill="#dcdcaa" opacity="0.4"/><rect x="2481" y="804.6" width="4" height="1.3" fill="#dcdcaa" opacity="0.4"/><rect x="2422" y="809.0" width="3" height="1.3" fill="#dcdcaa" opacity="0.4"/><rect x="2426" y="809.0" width="4" height="1.3" fill="#ce9178" opacity="0.4"/><rect x="2431" y="809.0" width="8" height="1.3" fill="#bbbbbb" opacity="0.4"/><rect x="2440" y="809.0" width="2" height="1.3" fill="#4ec9b0" opacity="0.4"/><rect x="2443" y="809.0" width="2" height="1.3" fill="#ce9178" opacity="0.4"/><rect x="2446" y="809.0" width="3" height="1.3" fill="#bbbbbb" opacity="0.4"/><rect x="2450" y="809.0" width="4" height="1.3" fill="#bbbbbb" opacity="0.4"/><rect x="2455" y="809.0" width="7" height="1.3" fill="#4ec9b0" opacity="0.4"/><rect x="2463" y="809.0" width="7" height="1.3" fill="#569cd6" opacity="0.4"/><rect x="2471" y="809.0" width="4" height="1.3" fill="#6a9955" opacity="0.4"/><rect x="2476" y="809.0" width="4" height="1.3" fill="#569cd6" opacity="0.4"/><rect x="2425" y="811.2" width="9" height="1.3" fill="#6a9955" opacity="0.4"/><rect x="2422" y="813.4" width="5" height="1.3" fill="#4ec9b0" opacity="0.4"/><rect x="2428" y="813.4" width="4" height="1.3" fill="#bbbbbb" opacity="0.4"/><rect x="2433" y="813.4" width="6" height="1.3" fill="#ce9178" opacity="0.4"/><rect x="2425" y="815.6" width="5" height="1.3" fill="#c586c0" opacity="0.4"/><rect x="2431" y="815.6" width="2" height="1.3" fill="#ce9178" opacity="0.4"/><rect x="2434" y="815.6" width="6" height="1.3" fill="#6a9955" opacity="0.4"/><rect x="2441" y="815.6" width="5" height="1.3" fill="#6a9955" opacity="0.4"/><rect x="2447" y="815.6" width="8" height="1.3" fill="#ce9178" opacity="0.4"/><rect x="2456" y="815.6" width="5" height="1.3" fill="#c586c0" opacity="0.4"/><rect x="2431" y="817.8" width="5" height="1.3" fill="#4ec9b0" opacity="0.4"/><rect x="2437" y="817.8" width="2" height="1.3" fill="#4ec9b0" opacity="0.4"/><rect x="2440" y="817.8" width="2" height="1.3" fill="#bbbbbb" opacity="0.4"/><rect x="2443" y="817.8" width="5" height="1.3" fill="#569cd6" opacity="0.4"/><rect x="2449" y="817.8" width="5" height="1.3" fill="#4ec9b0" opacity="0.4"/><rect x="2455" y="817.8" width="4" height="1.3" fill="#c586c0" opacity="0.4"/><rect x="2460" y="817.8" width="6" height="1.3" fill="#4ec9b0" opacity="0.4"/><rect x="2467" y="817.8" width="8" height="1.3" fill="#bbbbbb" opacity="0.4"/><rect x="2476" y="817.8" width="3" height="1.3" fill="#6a9955" opacity="0.4"/><rect x="2480" y="817.8" width="3" height="1.3" fill="#4ec9b0" opacity="0.4"/><rect x="2484" y="817.8" width="1" height="1.3" fill="#c586c0" opacity="0.4"/><rect x="2428" y="820.0" width="2" height="1.3" fill="#dcdcaa" opacity="0.4"/><rect x="2431" y="820.0" width="5" height="1.3" fill="#4ec9b0" opacity="0.4"/><rect x="2437" y="820.0" width="7" height="1.3" fill="#4ec9b0" opacity="0.4"/><rect x="2445" y="820.0" width="2" height="1.3" fill="#c586c0" opacity="0.4"/><rect x="2448" y="820.0" width="4" height="1.3" fill="#dcdcaa" opacity="0.4"/><rect x="2453" y="820.0" width="6" height="1.3" fill="#6a9955" opacity="0.4"/><rect x="2460" y="820.0" width="3" height="1.3" fill="#dcdcaa" opacity="0.4"/><rect x="2464" y="820.0" width="9" height="1.3" fill="#ce9178" opacity="0.4"/><rect x="2474" y="820.0" width="4" height="1.3" fill="#4ec9b0" opacity="0.4"/><rect x="2479" y="820.0" width="6" height="1.3" fill="#bbbbbb" opacity="0.4"/><rect x="2422" y="822.2" width="5" height="1.3" fill="#c586c0" opacity="0.4"/><rect x="2428" y="822.2" width="4" height="1.3" fill="#c586c0" opacity="0.4"/><rect x="2433" y="822.2" width="7" height="1.3" fill="#dcdcaa" opacity="0.4"/><rect x="2422" y="824.4" width="5" height="1.3" fill="#569cd6" opacity="0.4"/><rect x="2428" y="824.4" width="7" height="1.3" fill="#569cd6" opacity="0.4"/><rect x="2436" y="824.4" width="3" height="1.3" fill="#4ec9b0" opacity="0.4"/><rect x="2440" y="824.4" width="9" height="1.3" fill="#4ec9b0" opacity="0.4"/><rect x="2450" y="824.4" width="9" height="1.3" fill="#ce9178" opacity="0.4"/><rect x="2460" y="824.4" width="7" height="1.3" fill="#4ec9b0" opacity="0.4"/><rect x="2468" y="824.4" width="3" height="1.3" fill="#c586c0" opacity="0.4"/><rect x="2472" y="824.4" width="2" height="1.3" fill="#dcdcaa" opacity="0.4"/><rect x="2475" y="824.4" width="7" height="1.3" fill="#dcdcaa" opacity="0.4"/><rect x="2483" y="824.4" width="2" height="1.3" fill="#4ec9b0" opacity="0.4"/><rect x="2425" y="826.6" width="4" height="1.3" fill="#dcdcaa" opacity="0.4"/><rect x="2430" y="826.6" width="9" height="1.3" fill="#569cd6" opacity="0.4"/><rect x="2440" y="826.6" width="9" height="1.3" fill="#c586c0" opacity="0.4"/><rect x="2450" y="826.6" width="6" height="1.3" fill="#dcdcaa" opacity="0.4"/><rect x="2457" y="826.6" width="6" height="1.3" fill="#4ec9b0" opacity="0.4"/><rect x="2464" y="826.6" width="9" height="1.3" fill="#dcdcaa" opacity="0.4"/><rect x="2431" y="828.8" width="4" height="1.3" fill="#bbbbbb" opacity="0.4"/><rect x="2436" y="828.8" width="8" height="1.3" fill="#dcdcaa" opacity="0.4"/><rect x="2445" y="828.8" width="6" height="1.3" fill="#569cd6" opacity="0.4"/><rect x="2452" y="828.8" width="3" height="1.3" fill="#4ec9b0" opacity="0.4"/><rect x="2456" y="828.8" width="6" height="1.3" fill="#dcdcaa" opacity="0.4"/><rect x="2463" y="828.8" width="5" height="1.3" fill="#c586c0" opacity="0.4"/><rect x="2469" y="828.8" width="5" height="1.3" fill="#ce9178" opacity="0.4"/><rect x="2475" y="828.8" width="9" height="1.3" fill="#ce9178" opacity="0.4"/><rect x="2425" y="831.0" width="2" height="1.3" fill="#bbbbbb" opacity="0.4"/><rect x="2428" y="831.0" width="8" height="1.3" fill="#dcdcaa" opacity="0.4"/><rect x="2437" y="831.0" width="7" height="1.3" fill="#dcdcaa" opacity="0.4"/><rect x="2445" y="831.0" width="8" height="1.3" fill="#bbbbbb" opacity="0.4"/><rect x="2454" y="831.0" width="3" height="1.3" fill="#c586c0" opacity="0.4"/><rect x="2458" y="831.0" width="7" height="1.3" fill="#569cd6" opacity="0.4"/><rect x="2466" y="831.0" width="8" height="1.3" fill="#dcdcaa" opacity="0.4"/><rect x="2425" y="833.2" width="2" height="1.3" fill="#4ec9b0" opacity="0.4"/><rect x="2428" y="833.2" width="9" height="1.3" fill="#bbbbbb" opacity="0.4"/><rect x="2438" y="833.2" width="8" height="1.3" fill="#ce9178" opacity="0.4"/><rect x="2447" y="833.2" width="6" height="1.3" fill="#bbbbbb" opacity="0.4"/><rect x="2454" y="833.2" width="4" height="1.3" fill="#6a9955" opacity="0.4"/><rect x="2459" y="833.2" width="5" height="1.3" fill="#4ec9b0" opacity="0.4"/><rect x="2425" y="835.4" width="2" height="1.3" fill="#6a9955" opacity="0.4"/><rect x="2428" y="835.4" width="7" height="1.3" fill="#4ec9b0" opacity="0.4"/><rect x="2436" y="835.4" width="6" height="1.3" fill="#c586c0" opacity="0.4"/><rect x="2443" y="835.4" width="9" height="1.3" fill="#bbbbbb" opacity="0.4"/><rect x="2453" y="835.4" width="5" height="1.3" fill="#4ec9b0" opacity="0.4"/><rect x="2459" y="835.4" width="5" height="1.3" fill="#569cd6" opacity="0.4"/><rect x="2465" y="835.4" width="2" height="1.3" fill="#bbbbbb" opacity="0.4"/><rect x="2468" y="835.4" width="4" height="1.3" fill="#bbbbbb" opacity="0.4"/><rect x="2422" y="837.6" width="4" height="1.3" fill="#c586c0" opacity="0.4"/><rect x="2427" y="837.6" width="7" height="1.3" fill="#dcdcaa" opacity="0.4"/><rect x="2435" y="837.6" width="8" height="1.3" fill="#6a9955" opacity="0.4"/><rect x="2444" y="837.6" width="9" height="1.3" fill="#6a9955" opacity="0.4"/><rect x="2428" y="839.8" width="5" height="1.3" fill="#dcdcaa" opacity="0.4"/><rect x="2434" y="839.8" width="4" height="1.3" fill="#bbbbbb" opacity="0.4"/><rect x="2439" y="839.8" width="2" height="1.3" fill="#4ec9b0" opacity="0.4"/><rect x="2442" y="839.8" width="4" height="1.3" fill="#4ec9b0" opacity="0.4"/><rect x="2447" y="839.8" width="5" height="1.3" fill="#bbbbbb" opacity="0.4"/><rect x="2453" y="839.8" width="6" height="1.3" fill="#569cd6" opacity="0.4"/><rect x="2460" y="839.8" width="7" height="1.3" fill="#569cd6" opacity="0.4"/><rect x="2468" y="839.8" width="3" height="1.3" fill="#ce9178" opacity="0.4"/><rect x="2472" y="839.8" width="8" height="1.3" fill="#c586c0" opacity="0.4"/><rect x="2481" y="839.8" width="4" height="1.3" fill="#569cd6" opacity="0.4"/><rect x="2428" y="842.0" width="7" height="1.3" fill="#bbbbbb" opacity="0.4"/><rect x="2436" y="842.0" width="6" height="1.3" fill="#6a9955" opacity="0.4"/><rect x="2443" y="842.0" width="7" height="1.3" fill="#6a9955" opacity="0.4"/><rect x="2451" y="842.0" width="8" height="1.3" fill="#ce9178" opacity="0.4"/><rect x="2460" y="842.0" width="2" height="1.3" fill="#569cd6" opacity="0.4"/><rect x="2463" y="842.0" width="9" height="1.3" fill="#bbbbbb" opacity="0.4"/><rect x="2473" y="842.0" width="7" height="1.3" fill="#569cd6" opacity="0.4"/><rect x="2422" y="844.2" width="3" height="1.3" fill="#ce9178" opacity="0.4"/><rect x="2426" y="844.2" width="8" height="1.3" fill="#bbbbbb" opacity="0.4"/><rect x="2435" y="844.2" width="6" height="1.3" fill="#dcdcaa" opacity="0.4"/><rect x="2442" y="844.2" width="4" height="1.3" fill="#569cd6" opacity="0.4"/><rect x="2447" y="844.2" width="9" height="1.3" fill="#4ec9b0" opacity="0.4"/><rect x="2457" y="844.2" width="7" height="1.3" fill="#bbbbbb" opacity="0.4"/><rect x="2465" y="844.2" width="4" height="1.3" fill="#4ec9b0" opacity="0.4"/><rect x="2470" y="844.2" width="6" height="1.3" fill="#c586c0" opacity="0.4"/><rect x="2477" y="844.2" width="5" height="1.3" fill="#ce9178" opacity="0.4"/><rect x="2483" y="844.2" width="2" height="1.3" fill="#bbbbbb" opacity="0.4"/><rect x="2428" y="846.4" width="6" height="1.3" fill="#569cd6" opacity="0.4"/><rect x="2435" y="846.4" width="5" height="1.3" fill="#6a9955" opacity="0.4"/><rect x="2441" y="846.4" width="2" height="1.3" fill="#bbbbbb" opacity="0.4"/><rect x="2444" y="846.4" width="8" height="1.3" fill="#569cd6" opacity="0.4"/><rect x="2453" y="846.4" width="3" height="1.3" fill="#dcdcaa" opacity="0.4"/><rect x="2457" y="846.4" width="8" height="1.3" fill="#bbbbbb" opacity="0.4"/><rect x="2466" y="846.4" width="7" height="1.3" fill="#569cd6" opacity="0.4"/><rect x="2474" y="846.4" width="6" height="1.3" fill="#6a9955" opacity="0.4"/><rect x="2428" y="848.6" width="2" height="1.3" fill="#dcdcaa" opacity="0.4"/><rect x="2431" y="848.6" width="7" height="1.3" fill="#c586c0" opacity="0.4"/><rect x="2439" y="848.6" width="5" height="1.3" fill="#ce9178" opacity="0.4"/><rect x="2445" y="848.6" width="2" height="1.3" fill="#c586c0" opacity="0.4"/><rect x="2448" y="848.6" width="6" height="1.3" fill="#569cd6" opacity="0.4"/><rect x="2455" y="848.6" width="4" height="1.3" fill="#569cd6" opacity="0.4"/><rect x="2460" y="848.6" width="6" height="1.3" fill="#4ec9b0" opacity="0.4"/><rect x="2425" y="850.8" width="7" height="1.3" fill="#569cd6" opacity="0.4"/><rect x="2433" y="850.8" width="4" height="1.3" fill="#6a9955" opacity="0.4"/><rect x="2438" y="850.8" width="6" height="1.3" fill="#bbbbbb" opacity="0.4"/><rect x="2445" y="850.8" width="5" height="1.3" fill="#ce9178" opacity="0.4"/><rect x="2451" y="850.8" width="7" height="1.3" fill="#bbbbbb" opacity="0.4"/><rect x="2459" y="850.8" width="8" height="1.3" fill="#4ec9b0" opacity="0.4"/><rect x="2468" y="850.8" width="6" height="1.3" fill="#6a9955" opacity="0.4"/><rect x="2475" y="850.8" width="8" height="1.3" fill="#6a9955" opacity="0.4"/><rect x="2425" y="853.0" width="3" height="1.3" fill="#c586c0" opacity="0.4"/><rect x="2429" y="853.0" width="9" height="1.3" fill="#ce9178" opacity="0.4"/><rect x="2439" y="853.0" width="8" height="1.3" fill="#569cd6" opacity="0.4"/><rect x="2448" y="853.0" width="4" height="1.3" fill="#dcdcaa" opacity="0.4"/><rect x="2422" y="855.2" width="6" height="1.3" fill="#dcdcaa" opacity="0.4"/><rect x="2429" y="855.2" width="9" height="1.3" fill="#569cd6" opacity="0.4"/><rect x="2431" y="857.4" width="3" height="1.3" fill="#6a9955" opacity="0.4"/><rect x="2435" y="857.4" width="8" height="1.3" fill="#6a9955" opacity="0.4"/><rect x="2444" y="857.4" width="8" height="1.3" fill="#ce9178" opacity="0.4"/><rect x="2453" y="857.4" width="6" height="1.3" fill="#dcdcaa" opacity="0.4"/><rect x="2460" y="857.4" width="3" height="1.3" fill="#6a9955" opacity="0.4"/><rect x="2464" y="857.4" width="9" height="1.3" fill="#dcdcaa" opacity="0.4"/><rect x="2431" y="861.8" width="6" height="1.3" fill="#6a9955" opacity="0.4"/><rect x="2438" y="861.8" width="7" height="1.3" fill="#6a9955" opacity="0.4"/><rect x="2446" y="861.8" width="5" height="1.3" fill="#4ec9b0" opacity="0.4"/><rect x="2452" y="861.8" width="3" height="1.3" fill="#dcdcaa" opacity="0.4"/><rect x="2456" y="861.8" width="8" height="1.3" fill="#dcdcaa" opacity="0.4"/><rect x="2465" y="861.8" width="3" height="1.3" fill="#6a9955" opacity="0.4"/><rect x="2469" y="861.8" width="4" height="1.3" fill="#569cd6" opacity="0.4"/><rect x="2474" y="861.8" width="4" height="1.3" fill="#569cd6" opacity="0.4"/><rect x="2431" y="864.0" width="8" height="1.3" fill="#bbbbbb" opacity="0.4"/><rect x="2440" y="864.0" width="7" height="1.3" fill="#bbbbbb" opacity="0.4"/><rect x="2425" y="866.2" width="4" height="1.3" fill="#569cd6" opacity="0.4"/><rect x="2430" y="866.2" width="4" height="1.3" fill="#ce9178" opacity="0.4"/><rect x="2435" y="866.2" width="8" height="1.3" fill="#569cd6" opacity="0.4"/><rect x="2444" y="866.2" width="6" height="1.3" fill="#c586c0" opacity="0.4"/><rect x="2451" y="866.2" width="5" height="1.3" fill="#6a9955" opacity="0.4"/><rect x="2425" y="868.4" width="2" height="1.3" fill="#dcdcaa" opacity="0.4"/><rect x="2428" y="868.4" width="5" height="1.3" fill="#ce9178" opacity="0.4"/><rect x="2434" y="868.4" width="8" height="1.3" fill="#bbbbbb" opacity="0.4"/><rect x="2431" y="870.6" width="4" height="1.3" fill="#c586c0" opacity="0.4"/><rect x="2436" y="870.6" width="5" height="1.3" fill="#569cd6" opacity="0.4"/><rect x="2442" y="870.6" width="5" height="1.3" fill="#ce9178" opacity="0.4"/><rect x="2448" y="870.6" width="3" height="1.3" fill="#6a9955" opacity="0.4"/><rect x="2452" y="870.6" width="2" height="1.3" fill="#569cd6" opacity="0.4"/><rect x="2455" y="870.6" width="8" height="1.3" fill="#6a9955" opacity="0.4"/><rect x="2431" y="872.8" width="8" height="1.3" fill="#ce9178" opacity="0.4"/><rect x="2440" y="872.8" width="6" height="1.3" fill="#569cd6" opacity="0.4"/><rect x="2447" y="872.8" width="3" height="1.3" fill="#dcdcaa" opacity="0.4"/><rect x="2451" y="872.8" width="6" height="1.3" fill="#ce9178" opacity="0.4"/><rect x="2458" y="872.8" width="5" height="1.3" fill="#c586c0" opacity="0.4"/><rect x="2464" y="872.8" width="6" height="1.3" fill="#4ec9b0" opacity="0.4"/><rect x="2471" y="872.8" width="7" height="1.3" fill="#569cd6" opacity="0.4"/><rect x="2479" y="872.8" width="3" height="1.3" fill="#6a9955" opacity="0.4"/><rect x="2483" y="872.8" width="2" height="1.3" fill="#569cd6" opacity="0.4"/><rect x="2422" y="875.0" width="7" height="1.3" fill="#c586c0" opacity="0.4"/><rect x="2430" y="875.0" width="2" height="1.3" fill="#bbbbbb" opacity="0.4"/><rect x="2433" y="875.0" width="4" height="1.3" fill="#bbbbbb" opacity="0.4"/><rect x="2438" y="875.0" width="6" height="1.3" fill="#ce9178" opacity="0.4"/><rect x="2445" y="875.0" width="2" height="1.3" fill="#bbbbbb" opacity="0.4"/><rect x="2448" y="875.0" width="2" height="1.3" fill="#4ec9b0" opacity="0.4"/><rect x="2451" y="875.0" width="9" height="1.3" fill="#4ec9b0" opacity="0.4"/><rect x="2461" y="875.0" width="9" height="1.3" fill="#c586c0" opacity="0.4"/><rect x="2471" y="875.0" width="6" height="1.3" fill="#569cd6" opacity="0.4"/><rect x="2478" y="875.0" width="7" height="1.3" fill="#6a9955" opacity="0.4"/><rect x="2422" y="877.2" width="5" height="1.3" fill="#6a9955" opacity="0.4"/><rect x="2428" y="877.2" width="2" height="1.3" fill="#c586c0" opacity="0.4"/><rect x="2431" y="877.2" width="4" height="1.3" fill="#4ec9b0" opacity="0.4"/><rect x="2436" y="877.2" width="6" height="1.3" fill="#bbbbbb" opacity="0.4"/><rect x="2431" y="879.4" width="3" height="1.3" fill="#ce9178" opacity="0.4"/><rect x="2435" y="879.4" width="3" height="1.3" fill="#bbbbbb" opacity="0.4"/><rect x="2439" y="879.4" width="8" height="1.3" fill="#ce9178" opacity="0.4"/><rect x="2448" y="879.4" width="8" height="1.3" fill="#c586c0" opacity="0.4"/><rect x="2422" y="881.6" width="7" height="1.3" fill="#ce9178" opacity="0.4"/><rect x="2430" y="881.6" width="7" height="1.3" fill="#569cd6" opacity="0.4"/><rect x="2438" y="881.6" width="6" height="1.3" fill="#4ec9b0" opacity="0.4"/><rect x="2445" y="881.6" width="9" height="1.3" fill="#ce9178" opacity="0.4"/><rect x="2455" y="881.6" width="4" height="1.3" fill="#bbbbbb" opacity="0.4"/><rect x="2460" y="881.6" width="9" height="1.3" fill="#569cd6" opacity="0.4"/><rect x="2470" y="881.6" width="9" height="1.3" fill="#c586c0" opacity="0.4"/><rect x="2480" y="881.6" width="5" height="1.3" fill="#ce9178" opacity="0.4"/><rect x="2425" y="883.8" width="6" height="1.3" fill="#dcdcaa" opacity="0.4"/><rect x="2432" y="883.8" width="5" height="1.3" fill="#4ec9b0" opacity="0.4"/><rect x="2438" y="883.8" width="2" height="1.3" fill="#bbbbbb" opacity="0.4"/><rect x="2441" y="883.8" width="5" height="1.3" fill="#dcdcaa" opacity="0.4"/><rect x="2422" y="886.0" width="6" height="1.3" fill="#c586c0" opacity="0.4"/><rect x="2429" y="886.0" width="6" height="1.3" fill="#569cd6" opacity="0.4"/><rect x="2436" y="886.0" width="2" height="1.3" fill="#569cd6" opacity="0.4"/><rect x="2439" y="886.0" width="2" height="1.3" fill="#4ec9b0" opacity="0.4"/><rect x="2442" y="886.0" width="7" height="1.3" fill="#c586c0" opacity="0.4"/><rect x="2450" y="886.0" width="8" height="1.3" fill="#4ec9b0" opacity="0.4"/><rect x="2459" y="886.0" width="6" height="1.3" fill="#ce9178" opacity="0.4"/><rect x="2466" y="886.0" width="7" height="1.3" fill="#569cd6" opacity="0.4"/><rect x="2474" y="886.0" width="4" height="1.3" fill="#ce9178" opacity="0.4"/><rect x="2425" y="888.2" width="3" height="1.3" fill="#4ec9b0" opacity="0.4"/><rect x="2429" y="888.2" width="4" height="1.3" fill="#569cd6" opacity="0.4"/><rect x="2434" y="888.2" width="7" height="1.3" fill="#bbbbbb" opacity="0.4"/><rect x="2442" y="888.2" width="2" height="1.3" fill="#dcdcaa" opacity="0.4"/><rect x="2445" y="888.2" width="9" height="1.3" fill="#dcdcaa" opacity="0.4"/><rect x="2425" y="894.8" width="3" height="1.3" fill="#6a9955" opacity="0.4"/><rect x="2429" y="894.8" width="7" height="1.3" fill="#bbbbbb" opacity="0.4"/><rect x="2437" y="894.8" width="4" height="1.3" fill="#dcdcaa" opacity="0.4"/><rect x="2442" y="894.8" width="3" height="1.3" fill="#ce9178" opacity="0.4"/><rect x="2446" y="894.8" width="6" height="1.3" fill="#ce9178" opacity="0.4"/><rect x="2453" y="894.8" width="8" height="1.3" fill="#c586c0" opacity="0.4"/><rect x="2462" y="894.8" width="7" height="1.3" fill="#6a9955" opacity="0.4"/><rect x="2422" y="897.0" width="6" height="1.3" fill="#dcdcaa" opacity="0.4"/><rect x="2429" y="897.0" width="8" height="1.3" fill="#dcdcaa" opacity="0.4"/><rect x="2438" y="897.0" width="8" height="1.3" fill="#c586c0" opacity="0.4"/><rect x="2447" y="897.0" width="8" height="1.3" fill="#c586c0" opacity="0.4"/><rect x="2456" y="897.0" width="4" height="1.3" fill="#4ec9b0" opacity="0.4"/><rect x="2461" y="897.0" width="3" height="1.3" fill="#c586c0" opacity="0.4"/><rect x="2465" y="897.0" width="8" height="1.3" fill="#4ec9b0" opacity="0.4"/><rect x="2474" y="897.0" width="2" height="1.3" fill="#dcdcaa" opacity="0.4"/><rect x="2422" y="899.2" width="2" height="1.3" fill="#c586c0" opacity="0.4"/><rect x="2425" y="899.2" width="3" height="1.3" fill="#dcdcaa" opacity="0.4"/><rect x="2429" y="899.2" width="7" height="1.3" fill="#6a9955" opacity="0.4"/><rect x="2437" y="899.2" width="9" height="1.3" fill="#bbbbbb" opacity="0.4"/><rect x="2447" y="899.2" width="5" height="1.3" fill="#4ec9b0" opacity="0.4"/><rect x="2453" y="899.2" width="5" height="1.3" fill="#c586c0" opacity="0.4"/><rect x="2425" y="901.4" width="3" height="1.3" fill="#4ec9b0" opacity="0.4"/><rect x="2429" y="901.4" width="4" height="1.3" fill="#c586c0" opacity="0.4"/><rect x="2434" y="901.4" width="9" height="1.3" fill="#bbbbbb" opacity="0.4"/><rect x="2444" y="901.4" width="9" height="1.3" fill="#dcdcaa" opacity="0.4"/><rect x="2454" y="901.4" width="3" height="1.3" fill="#ce9178" opacity="0.4"/><rect x="2458" y="901.4" width="2" height="1.3" fill="#dcdcaa" opacity="0.4"/><rect x="2461" y="901.4" width="9" height="1.3" fill="#c586c0" opacity="0.4"/><rect x="2471" y="901.4" width="8" height="1.3" fill="#569cd6" opacity="0.4"/><rect x="2480" y="901.4" width="5" height="1.3" fill="#569cd6" opacity="0.4"/><rect x="2431" y="903.6" width="9" height="1.3" fill="#ce9178" opacity="0.4"/><rect x="2441" y="903.6" width="4" height="1.3" fill="#4ec9b0" opacity="0.4"/><rect x="2446" y="903.6" width="9" height="1.3" fill="#ce9178" opacity="0.4"/><rect x="2456" y="903.6" width="8" height="1.3" fill="#4ec9b0" opacity="0.4"/><rect x="2465" y="903.6" width="5" height="1.3" fill="#dcdcaa" opacity="0.4"/><rect x="2471" y="903.6" width="5" height="1.3" fill="#4ec9b0" opacity="0.4"/><rect x="2477" y="903.6" width="8" height="1.3" fill="#ce9178" opacity="0.4"/><rect x="2422" y="905.8" width="2" height="1.3" fill="#c586c0" opacity="0.4"/><rect x="2425" y="905.8" width="3" height="1.3" fill="#c586c0" opacity="0.4"/><rect x="2429" y="905.8" width="2" height="1.3" fill="#4ec9b0" opacity="0.4"/><rect x="2432" y="905.8" width="9" height="1.3" fill="#4ec9b0" opacity="0.4"/><rect x="2442" y="905.8" width="8" height="1.3" fill="#c586c0" opacity="0.4"/><rect x="2451" y="905.8" width="5" height="1.3" fill="#dcdcaa" opacity="0.4"/><rect x="2457" y="905.8" width="2" height="1.3" fill="#ce9178" opacity="0.4"/><rect x="2460" y="905.8" width="8" height="1.3" fill="#6a9955" opacity="0.4"/><rect x="2469" y="905.8" width="2" height="1.3" fill="#c586c0" opacity="0.4"/><rect x="2425" y="908.0" width="3" height="1.3" fill="#dcdcaa" opacity="0.4"/><rect x="2429" y="908.0" width="3" height="1.3" fill="#c586c0" opacity="0.4"/><rect x="2433" y="908.0" width="4" height="1.3" fill="#dcdcaa" opacity="0.4"/><rect x="2438" y="908.0" width="4" height="1.3" fill="#ce9178" opacity="0.4"/><rect x="2443" y="908.0" width="7" height="1.3" fill="#4ec9b0" opacity="0.4"/><rect x="2451" y="908.0" width="8" height="1.3" fill="#4ec9b0" opacity="0.4"/><rect x="2460" y="908.0" width="3" height="1.3" fill="#dcdcaa" opacity="0.4"/><rect x="2464" y="908.0" width="2" height="1.3" fill="#ce9178" opacity="0.4"/><rect x="2467" y="908.0" width="3" height="1.3" fill="#ce9178" opacity="0.4"/><rect x="2471" y="908.0" width="3" height="1.3" fill="#569cd6" opacity="0.4"/><rect x="2475" y="908.0" width="2" height="1.3" fill="#569cd6" opacity="0.4"/><rect x="2478" y="908.0" width="6" height="1.3" fill="#bbbbbb" opacity="0.4"/><rect x="2422" y="910.2" width="5" height="1.3" fill="#4ec9b0" opacity="0.4"/><rect x="2428" y="910.2" width="4" height="1.3" fill="#dcdcaa" opacity="0.4"/><rect x="2433" y="910.2" width="9" height="1.3" fill="#c586c0" opacity="0.4"/><rect x="2443" y="910.2" width="3" height="1.3" fill="#569cd6" opacity="0.4"/><rect x="2447" y="910.2" width="5" height="1.3" fill="#569cd6" opacity="0.4"/><rect x="2453" y="910.2" width="8" height="1.3" fill="#4ec9b0" opacity="0.4"/><rect x="2462" y="910.2" width="3" height="1.3" fill="#ce9178" opacity="0.4"/><rect x="2431" y="912.4" width="3" height="1.3" fill="#569cd6" opacity="0.4"/><rect x="2435" y="912.4" width="5" height="1.3" fill="#dcdcaa" opacity="0.4"/><rect x="2441" y="912.4" width="3" height="1.3" fill="#4ec9b0" opacity="0.4"/><rect x="2425" y="914.6" width="6" height="1.3" fill="#c586c0" opacity="0.4"/><rect x="2432" y="914.6" width="9" height="1.3" fill="#ce9178" opacity="0.4"/><rect x="2442" y="914.6" width="7" height="1.3" fill="#dcdcaa" opacity="0.4"/><rect x="2450" y="914.6" width="5" height="1.3" fill="#4ec9b0" opacity="0.4"/><rect x="2428" y="921.2" width="8" height="1.3" fill="#bbbbbb" opacity="0.4"/><rect x="2437" y="921.2" width="8" height="1.3" fill="#ce9178" opacity="0.4"/><rect x="2446" y="921.2" width="5" height="1.3" fill="#dcdcaa" opacity="0.4"/><rect x="2422" y="923.4" width="2" height="1.3" fill="#dcdcaa" opacity="0.4"/><rect x="2425" y="923.4" width="2" height="1.3" fill="#569cd6" opacity="0.4"/><rect x="2428" y="923.4" width="2" height="1.3" fill="#569cd6" opacity="0.4"/><rect x="2431" y="923.4" width="4" height="1.3" fill="#dcdcaa" opacity="0.4"/><rect x="2436" y="923.4" width="8" height="1.3" fill="#dcdcaa" opacity="0.4"/><rect x="2445" y="923.4" width="2" height="1.3" fill="#c586c0" opacity="0.4"/><rect x="2448" y="923.4" width="6" height="1.3" fill="#bbbbbb" opacity="0.4"/><rect x="2455" y="923.4" width="6" height="1.3" fill="#569cd6" opacity="0.4"/><rect x="2462" y="923.4" width="4" height="1.3" fill="#6a9955" opacity="0.4"/><rect x="2467" y="923.4" width="6" height="1.3" fill="#dcdcaa" opacity="0.4"/><rect x="2474" y="923.4" width="7" height="1.3" fill="#4ec9b0" opacity="0.4"/><rect x="2482" y="923.4" width="3" height="1.3" fill="#bbbbbb" opacity="0.4"/><rect x="2431" y="927.8" width="9" height="1.3" fill="#dcdcaa" opacity="0.4"/><rect x="2441" y="927.8" width="7" height="1.3" fill="#6a9955" opacity="0.4"/><rect x="2449" y="927.8" width="5" height="1.3" fill="#4ec9b0" opacity="0.4"/><rect x="2455" y="927.8" width="8" height="1.3" fill="#ce9178" opacity="0.4"/><rect x="2464" y="927.8" width="2" height="1.3" fill="#6a9955" opacity="0.4"/><rect x="2467" y="927.8" width="5" height="1.3" fill="#ce9178" opacity="0.4"/><rect x="2473" y="927.8" width="7" height="1.3" fill="#dcdcaa" opacity="0.4"/><rect x="2422" y="930.0" width="7" height="1.3" fill="#dcdcaa" opacity="0.4"/><rect x="2430" y="930.0" width="3" height="1.3" fill="#ce9178" opacity="0.4"/><rect x="2434" y="930.0" width="4" height="1.3" fill="#4ec9b0" opacity="0.4"/><rect x="2439" y="930.0" width="2" height="1.3" fill="#dcdcaa" opacity="0.4"/><rect x="2442" y="930.0" width="7" height="1.3" fill="#bbbbbb" opacity="0.4"/><rect x="2450" y="930.0" width="7" height="1.3" fill="#6a9955" opacity="0.4"/><rect x="2458" y="930.0" width="3" height="1.3" fill="#ce9178" opacity="0.4"/><rect x="2462" y="930.0" width="3" height="1.3" fill="#bbbbbb" opacity="0.4"/><rect x="2466" y="930.0" width="4" height="1.3" fill="#c586c0" opacity="0.4"/><rect x="2471" y="930.0" width="2" height="1.3" fill="#569cd6" opacity="0.4"/><rect x="2474" y="930.0" width="5" height="1.3" fill="#bbbbbb" opacity="0.4"/><rect x="2480" y="930.0" width="3" height="1.3" fill="#569cd6" opacity="0.4"/><rect x="2484" y="930.0" width="1" height="1.3" fill="#c586c0" opacity="0.4"/><rect x="2422" y="932.2" width="6" height="1.3" fill="#bbbbbb" opacity="0.4"/><rect x="2429" y="932.2" width="3" height="1.3" fill="#c586c0" opacity="0.4"/><rect x="2433" y="932.2" width="9" height="1.3" fill="#ce9178" opacity="0.4"/><rect x="2443" y="932.2" width="4" height="1.3" fill="#569cd6" opacity="0.4"/><rect x="2448" y="932.2" width="6" height="1.3" fill="#dcdcaa" opacity="0.4"/><rect x="2455" y="932.2" width="8" height="1.3" fill="#c586c0" opacity="0.4"/><rect x="2464" y="932.2" width="7" height="1.3" fill="#6a9955" opacity="0.4"/><rect x="2472" y="932.2" width="2" height="1.3" fill="#4ec9b0" opacity="0.4"/><rect x="2422" y="934.4" width="6" height="1.3" fill="#ce9178" opacity="0.4"/><rect x="2429" y="934.4" width="4" height="1.3" fill="#569cd6" opacity="0.4"/><rect x="2434" y="934.4" width="3" height="1.3" fill="#ce9178" opacity="0.4"/><rect x="2438" y="934.4" width="3" height="1.3" fill="#569cd6" opacity="0.4"/><rect x="2442" y="934.4" width="8" height="1.3" fill="#6a9955" opacity="0.4"/><rect x="2451" y="934.4" width="3" height="1.3" fill="#4ec9b0" opacity="0.4"/><rect x="2455" y="934.4" width="3" height="1.3" fill="#ce9178" opacity="0.4"/><rect x="2459" y="934.4" width="2" height="1.3" fill="#4ec9b0" opacity="0.4"/><rect x="2462" y="934.4" width="7" height="1.3" fill="#4ec9b0" opacity="0.4"/><rect x="2470" y="934.4" width="4" height="1.3" fill="#ce9178" opacity="0.4"/><rect x="2428" y="938.8" width="6" height="1.3" fill="#dcdcaa" opacity="0.4"/><rect x="2435" y="938.8" width="9" height="1.3" fill="#c586c0" opacity="0.4"/><rect x="2445" y="938.8" width="3" height="1.3" fill="#6a9955" opacity="0.4"/><rect x="2449" y="938.8" width="6" height="1.3" fill="#bbbbbb" opacity="0.4"/><rect x="2456" y="938.8" width="8" height="1.3" fill="#569cd6" opacity="0.4"/><rect x="2465" y="938.8" width="4" height="1.3" fill="#bbbbbb" opacity="0.4"/><rect x="2470" y="938.8" width="3" height="1.3" fill="#dcdcaa" opacity="0.4"/><rect x="2474" y="938.8" width="9" height="1.3" fill="#6a9955" opacity="0.4"/><rect x="2422" y="941.0" width="8" height="1.3" fill="#dcdcaa" opacity="0.4"/><rect x="2422" y="943.2" width="5" height="1.3" fill="#dcdcaa" opacity="0.4"/><rect x="2428" y="943.2" width="7" height="1.3" fill="#569cd6" opacity="0.4"/><rect x="2436" y="943.2" width="7" height="1.3" fill="#6a9955" opacity="0.4"/><rect x="2444" y="943.2" width="2" height="1.3" fill="#dcdcaa" opacity="0.4"/><rect x="2447" y="943.2" width="5" height="1.3" fill="#4ec9b0" opacity="0.4"/><rect x="2453" y="943.2" width="3" height="1.3" fill="#c586c0" opacity="0.4"/><rect x="2457" y="943.2" width="6" height="1.3" fill="#569cd6" opacity="0.4"/><rect x="2464" y="943.2" width="6" height="1.3" fill="#c586c0" opacity="0.4"/><rect x="2471" y="943.2" width="2" height="1.3" fill="#c586c0" opacity="0.4"/><rect x="2474" y="943.2" width="9" height="1.3" fill="#4ec9b0" opacity="0.4"/><rect x="2422" y="945.4" width="6" height="1.3" fill="#569cd6" opacity="0.4"/><rect x="2429" y="945.4" width="3" height="1.3" fill="#ce9178" opacity="0.4"/><rect x="2433" y="945.4" width="5" height="1.3" fill="#4ec9b0" opacity="0.4"/><rect x="2439" y="945.4" width="3" height="1.3" fill="#6a9955" opacity="0.4"/><rect x="2443" y="945.4" width="2" height="1.3" fill="#6a9955" opacity="0.4"/><rect x="2446" y="945.4" width="4" height="1.3" fill="#6a9955" opacity="0.4"/><rect x="2451" y="945.4" width="7" height="1.3" fill="#ce9178" opacity="0.4"/><rect x="2422" y="947.6" width="6" height="1.3" fill="#6a9955" opacity="0.4"/><rect x="2429" y="947.6" width="7" height="1.3" fill="#c586c0" opacity="0.4"/><rect x="2437" y="947.6" width="3" height="1.3" fill="#dcdcaa" opacity="0.4"/><rect x="2441" y="947.6" width="5" height="1.3" fill="#dcdcaa" opacity="0.4"/><rect x="2447" y="947.6" width="4" height="1.3" fill="#6a9955" opacity="0.4"/><rect x="2452" y="947.6" width="8" height="1.3" fill="#dcdcaa" opacity="0.4"/><rect x="2422" y="952.0" width="8" height="1.3" fill="#dcdcaa" opacity="0.4"/><rect x="2431" y="952.0" width="7" height="1.3" fill="#c586c0" opacity="0.4"/><rect x="2439" y="952.0" width="9" height="1.3" fill="#6a9955" opacity="0.4"/><rect x="2449" y="952.0" width="2" height="1.3" fill="#4ec9b0" opacity="0.4"/><rect x="2452" y="952.0" width="3" height="1.3" fill="#569cd6" opacity="0.4"/><rect x="2456" y="952.0" width="8" height="1.3" fill="#dcdcaa" opacity="0.4"/><rect x="2465" y="952.0" width="7" height="1.3" fill="#c586c0" opacity="0.4"/><rect x="2473" y="952.0" width="6" height="1.3" fill="#4ec9b0" opacity="0.4"/><rect x="2425" y="954.2" width="3" height="1.3" fill="#bbbbbb" opacity="0.4"/><rect x="2429" y="954.2" width="9" height="1.3" fill="#4ec9b0" opacity="0.4"/><rect x="2439" y="954.2" width="8" height="1.3" fill="#4ec9b0" opacity="0.4"/><rect x="2422" y="956.4" width="5" height="1.3" fill="#bbbbbb" opacity="0.4"/><rect x="2428" y="956.4" width="9" height="1.3" fill="#4ec9b0" opacity="0.4"/><rect x="2438" y="956.4" width="3" height="1.3" fill="#c586c0" opacity="0.4"/><rect x="2442" y="956.4" width="3" height="1.3" fill="#6a9955" opacity="0.4"/><rect x="2446" y="956.4" width="7" height="1.3" fill="#bbbbbb" opacity="0.4"/><rect x="2454" y="956.4" width="9" height="1.3" fill="#c586c0" opacity="0.4"/><rect x="2464" y="956.4" width="7" height="1.3" fill="#ce9178" opacity="0.4"/><rect x="2472" y="956.4" width="2" height="1.3" fill="#4ec9b0" opacity="0.4"/><rect x="2475" y="956.4" width="5" height="1.3" fill="#bbbbbb" opacity="0.4"/><rect x="2481" y="956.4" width="4" height="1.3" fill="#ce9178" opacity="0.4"/><rect x="2425" y="958.6" width="2" height="1.3" fill="#bbbbbb" opacity="0.4"/><rect x="2428" y="958.6" width="2" height="1.3" fill="#c586c0" opacity="0.4"/><rect x="2431" y="958.6" width="4" height="1.3" fill="#ce9178" opacity="0.4"/><rect x="2436" y="958.6" width="7" height="1.3" fill="#c586c0" opacity="0.4"/><rect x="2425" y="963.0" width="9" height="1.3" fill="#dcdcaa" opacity="0.4"/><rect x="2435" y="963.0" width="4" height="1.3" fill="#4ec9b0" opacity="0.4"/><rect x="2440" y="963.0" width="9" height="1.3" fill="#569cd6" opacity="0.4"/><rect x="2450" y="963.0" width="7" height="1.3" fill="#4ec9b0" opacity="0.4"/><rect x="2458" y="963.0" width="5" height="1.3" fill="#6a9955" opacity="0.4"/><rect x="2464" y="963.0" width="7" height="1.3" fill="#4ec9b0" opacity="0.4"/><rect x="2472" y="963.0" width="3" height="1.3" fill="#569cd6" opacity="0.4"/><rect x="2476" y="963.0" width="9" height="1.3" fill="#bbbbbb" opacity="0.4"/><rect x="2428" y="965.2" width="2" height="1.3" fill="#569cd6" opacity="0.4"/><rect x="2431" y="965.2" width="9" height="1.3" fill="#569cd6" opacity="0.4"/><rect x="2428" y="967.4" width="5" height="1.3" fill="#dcdcaa" opacity="0.4"/><rect x="2434" y="967.4" width="9" height="1.3" fill="#569cd6" opacity="0.4"/><rect x="2444" y="967.4" width="4" height="1.3" fill="#569cd6" opacity="0.4"/><rect x="2449" y="967.4" width="7" height="1.3" fill="#c586c0" opacity="0.4"/><rect x="2457" y="967.4" width="8" height="1.3" fill="#dcdcaa" opacity="0.4"/><rect x="2466" y="967.4" width="7" height="1.3" fill="#569cd6" opacity="0.4"/><rect x="2474" y="967.4" width="2" height="1.3" fill="#dcdcaa" opacity="0.4"/><rect x="2431" y="969.6" width="4" height="1.3" fill="#569cd6" opacity="0.4"/><rect x="2436" y="969.6" width="5" height="1.3" fill="#4ec9b0" opacity="0.4"/><rect x="2442" y="969.6" width="9" height="1.3" fill="#569cd6" opacity="0.4"/><rect x="2452" y="969.6" width="3" height="1.3" fill="#bbbbbb" opacity="0.4"/><rect x="2456" y="969.6" width="5" height="1.3" fill="#dcdcaa" opacity="0.4"/><rect x="2462" y="969.6" width="2" height="1.3" fill="#6a9955" opacity="0.4"/><rect x="2465" y="969.6" width="9" height="1.3" fill="#c586c0" opacity="0.4"/><rect x="2475" y="969.6" width="5" height="1.3" fill="#6a9955" opacity="0.4"/><rect x="2481" y="969.6" width="4" height="1.3" fill="#ce9178" opacity="0.4"/><rect x="2422" y="971.8" width="2" height="1.3" fill="#569cd6" opacity="0.4"/><rect x="2425" y="971.8" width="4" height="1.3" fill="#4ec9b0" opacity="0.4"/><rect x="2430" y="971.8" width="7" height="1.3" fill="#bbbbbb" opacity="0.4"/><rect x="2438" y="971.8" width="5" height="1.3" fill="#4ec9b0" opacity="0.4"/><rect x="2444" y="971.8" width="9" height="1.3" fill="#6a9955" opacity="0.4"/><rect x="2454" y="971.8" width="9" height="1.3" fill="#569cd6" opacity="0.4"/><rect x="2428" y="974.0" width="5" height="1.3" fill="#c586c0" opacity="0.4"/><rect x="2434" y="974.0" width="9" height="1.3" fill="#c586c0" opacity="0.4"/><rect x="2444" y="974.0" width="6" height="1.3" fill="#dcdcaa" opacity="0.4"/><rect x="2451" y="974.0" width="9" height="1.3" fill="#6a9955" opacity="0.4"/><rect x="2461" y="974.0" width="5" height="1.3" fill="#dcdcaa" opacity="0.4"/><rect x="2467" y="974.0" width="7" height="1.3" fill="#4ec9b0" opacity="0.4"/><rect x="2475" y="974.0" width="8" height="1.3" fill="#c586c0" opacity="0.4"/><rect x="2484" y="974.0" width="1" height="1.3" fill="#bbbbbb" opacity="0.4"/><rect x="2422" y="976.2" width="7" height="1.3" fill="#dcdcaa" opacity="0.4"/><rect x="2430" y="976.2" width="4" height="1.3" fill="#c586c0" opacity="0.4"/><rect x="2435" y="976.2" width="2" height="1.3" fill="#c586c0" opacity="0.4"/><rect x="2438" y="976.2" width="6" height="1.3" fill="#ce9178" opacity="0.4"/><rect x="2445" y="976.2" width="9" height="1.3" fill="#bbbbbb" opacity="0.4"/><rect x="2455" y="976.2" width="8" height="1.3" fill="#c586c0" opacity="0.4"/><rect x="2464" y="976.2" width="6" height="1.3" fill="#c586c0" opacity="0.4"/><rect x="2425" y="978.4" width="8" height="1.3" fill="#c586c0" opacity="0.4"/><rect x="2434" y="978.4" width="4" height="1.3" fill="#ce9178" opacity="0.4"/><rect x="2439" y="978.4" width="4" height="1.3" fill="#ce9178" opacity="0.4"/><rect x="2444" y="978.4" width="7" height="1.3" fill="#dcdcaa" opacity="0.4"/><rect x="2452" y="978.4" width="2" height="1.3" fill="#c586c0" opacity="0.4"/><rect x="2455" y="978.4" width="5" height="1.3" fill="#bbbbbb" opacity="0.4"/><rect x="2461" y="978.4" width="4" height="1.3" fill="#4ec9b0" opacity="0.4"/><rect x="2466" y="978.4" width="9" height="1.3" fill="#dcdcaa" opacity="0.4"/><rect x="2476" y="978.4" width="8" height="1.3" fill="#6a9955" opacity="0.4"/><rect x="2431" y="980.6" width="4" height="1.3" fill="#569cd6" opacity="0.4"/><rect x="2436" y="980.6" width="6" height="1.3" fill="#569cd6" opacity="0.4"/><rect x="2443" y="980.6" width="8" height="1.3" fill="#4ec9b0" opacity="0.4"/><rect x="2452" y="980.6" width="2" height="1.3" fill="#bbbbbb" opacity="0.4"/><rect x="2422" y="982.8" width="2" height="1.3" fill="#6a9955" opacity="0.4"/><rect x="2425" y="982.8" width="3" height="1.3" fill="#6a9955" opacity="0.4"/><rect x="2429" y="982.8" width="4" height="1.3" fill="#dcdcaa" opacity="0.4"/><rect x="2434" y="982.8" width="4" height="1.3" fill="#bbbbbb" opacity="0.4"/><rect x="2439" y="982.8" width="3" height="1.3" fill="#ce9178" opacity="0.4"/><rect x="2443" y="982.8" width="8" height="1.3" fill="#dcdcaa" opacity="0.4"/><rect x="2452" y="982.8" width="6" height="1.3" fill="#dcdcaa" opacity="0.4"/><rect x="2459" y="982.8" width="3" height="1.3" fill="#bbbbbb" opacity="0.4"/><rect x="2463" y="982.8" width="5" height="1.3" fill="#bbbbbb" opacity="0.4"/><rect x="2469" y="982.8" width="7" height="1.3" fill="#ce9178" opacity="0.4"/><rect x="2477" y="982.8" width="5" height="1.3" fill="#bbbbbb" opacity="0.4"/><rect x="2483" y="982.8" width="2" height="1.3" fill="#ce9178" opacity="0.4"/><rect x="2428" y="985.0" width="4" height="1.3" fill="#dcdcaa" opacity="0.4"/><rect x="2433" y="985.0" width="6" height="1.3" fill="#569cd6" opacity="0.4"/><rect x="2440" y="985.0" width="5" height="1.3" fill="#bbbbbb" opacity="0.4"/><rect x="2446" y="985.0" width="7" height="1.3" fill="#ce9178" opacity="0.4"/><rect x="2454" y="985.0" width="6" height="1.3" fill="#569cd6" opacity="0.4"/><rect x="2431" y="987.2" width="2" height="1.3" fill="#ce9178" opacity="0.4"/><rect x="2434" y="987.2" width="9" height="1.3" fill="#c586c0" opacity="0.4"/><rect x="2444" y="987.2" width="7" height="1.3" fill="#dcdcaa" opacity="0.4"/><rect x="2452" y="987.2" width="2" height="1.3" fill="#bbbbbb" opacity="0.4"/><rect x="2455" y="987.2" width="9" height="1.3" fill="#6a9955" opacity="0.4"/><rect x="2465" y="987.2" width="4" height="1.3" fill="#bbbbbb" opacity="0.4"/><rect x="2470" y="987.2" width="7" height="1.3" fill="#dcdcaa" opacity="0.4"/><rect x="2478" y="987.2" width="5" height="1.3" fill="#bbbbbb" opacity="0.4"/><rect x="2484" y="987.2" width="1" height="1.3" fill="#c586c0" opacity="0.4"/><rect x="2425" y="989.4" width="4" height="1.3" fill="#569cd6" opacity="0.4"/><rect x="2430" y="989.4" width="5" height="1.3" fill="#6a9955" opacity="0.4"/><rect x="2436" y="989.4" width="7" height="1.3" fill="#bbbbbb" opacity="0.4"/><rect x="2444" y="989.4" width="9" height="1.3" fill="#dcdcaa" opacity="0.4"/><rect x="2454" y="989.4" width="7" height="1.3" fill="#c586c0" opacity="0.4"/><rect x="2462" y="989.4" width="5" height="1.3" fill="#569cd6" opacity="0.4"/><rect x="2468" y="989.4" width="5" height="1.3" fill="#6a9955" opacity="0.4"/><rect x="2474" y="989.4" width="3" height="1.3" fill="#4ec9b0" opacity="0.4"/><rect x="2478" y="989.4" width="4" height="1.3" fill="#bbbbbb" opacity="0.4"/><rect x="2483" y="989.4" width="2" height="1.3" fill="#569cd6" opacity="0.4"/><rect x="2425" y="993.8" width="7" height="1.3" fill="#6a9955" opacity="0.4"/><rect x="2433" y="993.8" width="8" height="1.3" fill="#6a9955" opacity="0.4"/><rect x="2442" y="993.8" width="4" height="1.3" fill="#dcdcaa" opacity="0.4"/><rect x="2447" y="993.8" width="9" height="1.3" fill="#569cd6" opacity="0.4"/><rect x="2457" y="993.8" width="2" height="1.3" fill="#569cd6" opacity="0.4"/><rect x="2460" y="993.8" width="4" height="1.3" fill="#bbbbbb" opacity="0.4"/><rect x="2465" y="993.8" width="7" height="1.3" fill="#4ec9b0" opacity="0.4"/><rect x="2425" y="996.0" width="5" height="1.3" fill="#569cd6" opacity="0.4"/><rect x="2431" y="996.0" width="5" height="1.3" fill="#569cd6" opacity="0.4"/><rect x="2437" y="996.0" width="5" height="1.3" fill="#6a9955" opacity="0.4"/><rect x="2443" y="996.0" width="6" height="1.3" fill="#569cd6" opacity="0.4"/><rect x="2450" y="996.0" width="6" height="1.3" fill="#c586c0" opacity="0.4"/><rect x="2457" y="996.0" width="3" height="1.3" fill="#ce9178" opacity="0.4"/><rect x="2461" y="996.0" width="9" height="1.3" fill="#dcdcaa" opacity="0.4"/><rect x="2471" y="996.0" width="2" height="1.3" fill="#c586c0" opacity="0.4"/><rect x="2474" y="996.0" width="2" height="1.3" fill="#ce9178" opacity="0.4"/><rect x="2477" y="996.0" width="8" height="1.3" fill="#569cd6" opacity="0.4"/><rect x="2422" y="998.2" width="2" height="1.3" fill="#dcdcaa" opacity="0.4"/><rect x="2425" y="998.2" width="4" height="1.3" fill="#4ec9b0" opacity="0.4"/><rect x="2430" y="998.2" width="5" height="1.3" fill="#4ec9b0" opacity="0.4"/><rect x="2422" y="1000.4" width="5" height="1.3" fill="#4ec9b0" opacity="0.4"/><rect x="2428" y="1000.4" width="2" height="1.3" fill="#4ec9b0" opacity="0.4"/><rect x="2431" y="1000.4" width="3" height="1.3" fill="#4ec9b0" opacity="0.4"/><rect x="2435" y="1000.4" width="5" height="1.3" fill="#c586c0" opacity="0.4"/><rect x="2441" y="1000.4" width="9" height="1.3" fill="#6a9955" opacity="0.4"/><rect x="2425" y="1004.8" width="9" height="1.3" fill="#dcdcaa" opacity="0.4"/><rect x="2435" y="1004.8" width="6" height="1.3" fill="#6a9955" opacity="0.4"/><rect x="2442" y="1004.8" width="2" height="1.3" fill="#4ec9b0" opacity="0.4"/><rect x="2445" y="1004.8" width="6" height="1.3" fill="#c586c0" opacity="0.4"/><rect x="2452" y="1004.8" width="6" height="1.3" fill="#4ec9b0" opacity="0.4"/><rect x="2422" y="1011.4" width="7" height="1.3" fill="#6a9955" opacity="0.4"/><rect x="2430" y="1011.4" width="9" height="1.3" fill="#c586c0" opacity="0.4"/><rect x="2440" y="1011.4" width="5" height="1.3" fill="#ce9178" opacity="0.4"/><rect x="2446" y="1011.4" width="2" height="1.3" fill="#dcdcaa" opacity="0.4"/><rect x="2449" y="1011.4" width="4" height="1.3" fill="#dcdcaa" opacity="0.4"/><rect x="2454" y="1011.4" width="8" height="1.3" fill="#bbbbbb" opacity="0.4"/><rect x="2463" y="1011.4" width="6" height="1.3" fill="#569cd6" opacity="0.4"/><rect x="2470" y="1011.4" width="2" height="1.3" fill="#c586c0" opacity="0.4"/><rect x="2473" y="1011.4" width="6" height="1.3" fill="#dcdcaa" opacity="0.4"/><rect x="2422" y="1015.8" width="4" height="1.3" fill="#c586c0" opacity="0.4"/><rect x="2427" y="1015.8" width="9" height="1.3" fill="#dcdcaa" opacity="0.4"/><rect x="2437" y="1015.8" width="9" height="1.3" fill="#dcdcaa" opacity="0.4"/><rect x="2447" y="1015.8" width="5" height="1.3" fill="#ce9178" opacity="0.4"/><rect x="2453" y="1015.8" width="3" height="1.3" fill="#dcdcaa" opacity="0.4"/><rect x="2457" y="1015.8" width="9" height="1.3" fill="#ce9178" opacity="0.4"/><rect x="2422" y="1018.0" width="5" height="1.3" fill="#4ec9b0" opacity="0.4"/><rect x="2428" y="1018.0" width="9" height="1.3" fill="#c586c0" opacity="0.4"/><rect x="2438" y="1018.0" width="6" height="1.3" fill="#ce9178" opacity="0.4"/><rect x="2428" y="1020.2" width="2" height="1.3" fill="#4ec9b0" opacity="0.4"/><rect x="2431" y="1020.2" width="5" height="1.3" fill="#569cd6" opacity="0.4"/><rect x="2437" y="1020.2" width="2" height="1.3" fill="#c586c0" opacity="0.4"/><rect x="2440" y="1020.2" width="6" height="1.3" fill="#c586c0" opacity="0.4"/><rect x="2447" y="1020.2" width="9" height="1.3" fill="#ce9178" opacity="0.4"/><rect x="2422" y="1022.4" width="6" height="1.3" fill="#569cd6" opacity="0.4"/><rect x="2429" y="1022.4" width="6" height="1.3" fill="#c586c0" opacity="0.4"/><rect x="2436" y="1022.4" width="4" height="1.3" fill="#4ec9b0" opacity="0.4"/><rect x="2441" y="1022.4" width="5" height="1.3" fill="#bbbbbb" opacity="0.4"/><rect x="2431" y="1024.6" width="6" height="1.3" fill="#bbbbbb" opacity="0.4"/><rect x="2438" y="1024.6" width="7" height="1.3" fill="#ce9178" opacity="0.4"/><rect x="2446" y="1024.6" width="6" height="1.3" fill="#4ec9b0" opacity="0.4"/><rect x="2453" y="1024.6" width="7" height="1.3" fill="#4ec9b0" opacity="0.4"/><rect x="2461" y="1024.6" width="6" height="1.3" fill="#4ec9b0" opacity="0.4"/><rect x="2468" y="1024.6" width="7" height="1.3" fill="#ce9178" opacity="0.4"/><rect x="2476" y="1024.6" width="5" height="1.3" fill="#c586c0" opacity="0.4"/><rect x="2482" y="1024.6" width="3" height="1.3" fill="#569cd6" opacity="0.4"/><rect x="2425" y="1026.8" width="5" height="1.3" fill="#6a9955" opacity="0.4"/><rect x="2431" y="1026.8" width="3" height="1.3" fill="#dcdcaa" opacity="0.4"/><rect x="2428" y="1029.0" width="7" height="1.3" fill="#569cd6" opacity="0.4"/><rect x="2436" y="1029.0" width="9" height="1.3" fill="#ce9178" opacity="0.4"/><rect x="2446" y="1029.0" width="6" height="1.3" fill="#dcdcaa" opacity="0.4"/><rect x="2453" y="1029.0" width="3" height="1.3" fill="#4ec9b0" opacity="0.4"/><rect x="2457" y="1029.0" width="3" height="1.3" fill="#ce9178" opacity="0.4"/><rect x="2461" y="1029.0" width="8" height="1.3" fill="#bbbbbb" opacity="0.4"/><rect x="2470" y="1029.0" width="9" height="1.3" fill="#4ec9b0" opacity="0.4"/><rect x="2480" y="1029.0" width="5" height="1.3" fill="#dcdcaa" opacity="0.4"/></svg><div class="a" style="left:767px;top:1027px;width:1718px;height:448px;background:#181818"></div><div class="a" style="left:1047px;top:1027px;width:39px;height:2px;background:#0a76d2"></div><div class="a" style="left:774px;top:1067px;width:12px;height:12px;border:3px solid #5c5c5c;border-radius:50%"></div><style>.cj{display:inline-block;width:22px;text-align:center;font-size:20px;-webkit-text-stroke:0}</style><div class="a mono" style="left:794.5px;top:1062.9px;font-size:18.33px;line-height:26px;-webkit-text-stroke:0.3px currentColor"><span style="color:#cccccc">PS D:\codelist\code_stock&gt; &amp; </span><span style="color:#e5e07a">d:/codelist/code_stock/fcode/Scripts/python.exe</span><span style="color:#cccccc"> d:/codelist/code_stock/stock_prediction/stock_box.py</span></div><div class="a mono" style="left:794.5px;top:1088.9px;font-size:18.33px;line-height:26px;-webkit-text-stroke:0.3px currentColor"><span style="color:#cccccc"><span class="cj">请</span><span class="cj">输</span><span class="cj">入</span><span class="cj">股</span><span class="cj">票</span><span class="cj">代</span><span class="cj">码</span><span class="cj">（</span><span class="cj">例</span><span class="cj">如</span><span class="cj">：</span>MSFT<span class="cj">）</span><span class="cj">：</span>MSFT</span></div><div class="a mono" style="left:794.5px;top:1114.9px;font-size:18.33px;line-height:26px;-webkit-text-stroke:0.3px currentColor"><span style="color:#cccccc"><span class="cj">请</span><span class="cj">输</span><span class="cj">入</span><span class="cj">开</span><span class="cj">始</span><span class="cj">日</span><span class="cj">期</span><span class="cj">（</span>YYYYMMDD<span class="cj">）</span><span class="cj">：</span>20240101</span></div><div class="a mono" style="left:794.5px;top:1140.9px;font-size:18.33px;line-height:26px;-webkit-text-stroke:0.3px currentColor"><span style="color:#cccccc"><span class="cj">请</span><span class="cj">输</span><span class="cj">入</span><span class="cj">结</span><span class="cj">束</span><span class="cj">日</span><span class="cj">期</span><span class="cj">（</span>YYYYMMDD<span class="cj">）</span><span class="cj">：</span>20250101</span></div><div class="a mono" style="left:794.5px;top:1166.9px;font-size:18.33px;line-height:26px;-webkit-text-stroke:0.3px currentColor"><span style="color:#cccccc"><span class="cj">从</span><span class="cj">本</span><span class="cj">地</span><span class="cj">加</span><span class="cj">载</span>MSFT<span class="cj">的</span><span class="cj">历</span><span class="cj">史</span><span class="cj">数</span><span class="cj">据</span>...</span></div><div class="a mono" style="left:794.5px;top:1192.9px;font-size:18.33px;line-height:26px;-webkit-text-stroke:0.3px currentColor"><span style="color:#cccccc"><span class="cj">数</span><span class="cj">据</span><span class="cj">获</span><span class="cj">取</span><span class="cj">完</span><span class="cj">成</span><span class="cj">，</span><span class="cj">共</span> 252 <span class="cj">条</span><span class="cj">记</span><span class="cj">录</span></span></div><div class="a mono" style="left:794.5px;top:1218.8px;font-size:18.33px;line-height:26px;-webkit-text-stroke:0.3px currentColor"><span style="color:#cccccc"><span class="cj">数</span><span class="cj">据</span><span class="cj">预</span><span class="cj">处</span><span class="cj">理</span><span class="cj">完</span><span class="cj">成</span><span class="cj">，</span><span class="cj">训</span><span class="cj">练</span><span class="cj">集</span><span class="cj">大</span><span class="cj">小</span>: (201, 7), <span class="cj">测</span><span class="cj">试</span><span class="cj">集</span><span class="cj">大</span><span class="cj">小</span>: (50, 7)</span></div><div class="a mono" style="left:794.5px;top:1270.8px;font-size:18.33px;line-height:26px;-webkit-text-stroke:0.3px currentColor"><span style="color:#cccccc"><span class="cj">开</span><span class="cj">始</span><span class="cj">训</span><span class="cj">练</span><span class="cj">随</span><span class="cj">机</span><span class="cj">森</span><span class="cj">林</span><span class="cj">模</span><span class="cj">型</span>...</span></div><div class="a mono" style="left:794.5px;top:1322.8px;font-size:18.33px;line-height:26px;-webkit-text-stroke:0.3px currentColor"><span style="color:#cccccc"><span class="cj">模</span><span class="cj">型</span><span class="cj">评</span><span class="cj">估</span><span class="cj">结</span><span class="cj">果</span>:</span></div><div class="a mono" style="left:794.5px;top:1348.8px;font-size:18.33px;line-height:26px;-webkit-text-stroke:0.3px currentColor"><span style="color:#cccccc">R2<span class="cj">分</span><span class="cj">数</span>: 0.7110</span></div><div class="a mono" style="left:794.5px;top:1374.8px;font-size:18.33px;line-height:26px;-webkit-text-stroke:0.3px currentColor"><span style="color:#cccccc"><span class="cj">均</span><span class="cj">方</span><span class="cj">误</span><span class="cj">差</span>(MSE): 42.8114</span></div><div class="a mono" style="left:794.5px;top:1400.8px;font-size:18.33px;line-height:26px;-webkit-text-stroke:0.3px currentColor"><span style="color:#cccccc"><span class="cj">均</span><span class="cj">方</span><span class="cj">根</span><span class="cj">误</span><span class="cj">差</span>(RMSE): 6.5430</span></div><div class="a mono" style="left:794.5px;top:1426.8px;font-size:18.33px;line-height:26px;-webkit-text-stroke:0.3px currentColor"><span style="color:#cccccc"><span class="cj">平</span><span class="cj">均</span><span class="cj">绝</span><span class="cj">对</span><span class="cj">误</span><span class="cj">差</span>(MAE): 4.6516</span></div><div class="a" style="left:794.5px;top:1449px;width:10px;height:25px;background:#c8c8c8"></div><div class="a" style="left:2354px;top:1052px;width:1px;height:423px;background:#0c0c0c"></div><div class="a" style="left:2355px;top:1059px;width:6px;height:8px;background:#5a5a5a"></div><div class="a" style="left:2375px;top:1040px;width:1px;height:435px;background:#2b2b2b"></div><div class="a" style="left:2376px;top:1071px;width:109px;height:33px;background:#37373d"></div><div class="a" style="left:2376px;top:1071px;width:2px;height:33px;background:#0a76d2"></div><svg style="left:2390px;top:1043px" width="28" height="60" viewBox="0 0 28 60"><g fill="none" stroke-width="1.6"><path d="M3 2 H25 L23 22 H1 Z" stroke="#c8c8c8"/><path d="M6 7 L11 11 L6 15 M12 17 H19" stroke="#c8c8c8"/><rect x="2" y="35" width="22" height="21" stroke="#d7ba30"/><path d="M6 41 L11 45 L6 49 M12 51 H19" stroke="#d7ba30"/></g></svg><div class="a" style="left:2422px;top:1043px;font-size:20px;line-height:24px;color:#cca832">powershell</div><div class="a" style="left:2422px;top:1076px;font-size:20px;line-height:24px;color:#cca832">Python</div><div class="a" style="left:2163px;top:1424px;font-size:24.6px;line-height:30px;color:#d8d8d8">掘金技术社区 @ 半浮小生</div><div class="a" style="left:0;top:1475px;width:2485px;height:14px;background:#181818;border-top:1px solid #2b2b2b"></div><div class="a" style="left:0;top:1476px;width:45px;height:13px;background:#0078d4"></div><svg style="left:10px;top:1478px" width="20" height="12" viewBox="0 0 20 12"><path d="M2 8 L7 12 M7 12 L17 2" stroke="#fff" stroke-width="2"/></svg><div class="a" style="left:56px;top:1481px;font-size:18px;line-height:24px;color:#cccccc">⚲ main* ↻ &nbsp;&nbsp;⊗ 0 ⚠ 0 &nbsp;&nbsp;(ꞏ) 0</div><div class="a" style="left:1722px;top:1481px;font-size:18px;line-height:24px;color:#cccccc;word-spacing:2px">◢ MarsCode AI &nbsp;&nbsp;行 227，列 44 &nbsp;&nbsp;空格: 4 &nbsp;&nbsp;UTF-8 &nbsp;&nbsp;CRLF &nbsp;&nbsp;{} Python &nbsp;&nbsp;3.12.0 ('fcode': venv)</div><div class="a" style="left:770px;top:196px;width:1704px;height:831px;border-radius:8px;overflow:hidden;background:#ffffff;box-shadow:0 0 0 1px rgba(70,70,70,0.8)"><div style="position:absolute;left:0;top:0;width:100%;height:42.6px;background:#f3f3f3"></div><div style="position:absolute;left:0;top:781px;width:100%;height:50px;background:#f0f0f0"></div></div><svg style="left:781px;top:204px" width="24" height="24" viewBox="0 0 24 24"><circle cx="12" cy="12" r="11" fill="#fff" stroke="#9a9a9a" stroke-width="1"/><path d="M12 12 L4 6 L6 3 Z" fill="#f08a24"/><path d="M12 12 L3 14 L3 10 Z" fill="#f0b030"/><path d="M12 12 L19 20 L16 21 Z" fill="#e06a30"/><path d="M12 12 L14 19 L11 19 Z" fill="#7ab060"/><path d="M12 12 L18 5 L19 8 Z" fill="#60a050"/><path d="M12 12 L10 3 L13 3 Z" fill="#3070b0"/></svg><div class="a" style="left:813px;top:205px;font-size:17.5px;line-height:22px;color:#8c8c8c">Figure 1</div><svg style="left:2285px;top:205px" width="170" height="24" viewBox="0 0 170 24"><g stroke="#7a7a7a" stroke-width="1.3" fill="none"><path d="M7 11.5 H22"/><rect x="76" y="4" width="15" height="15" rx="2"/><path d="M147 4 L162 19 M162 4 L147 19"/></g></svg><svg style="left:0;top:0" width="2485" height="1489" viewBox="0 0 2485 1489"><defs><clipPath id="cv"><rect x="770" y="238.6" width="1704" height="738.4"/></clipPath><clipPath id="ax"><rect x="852" y="292.8" width="1605.7" height="579.7"/></clipPath></defs><g clip-path="url(#cv)"><text x="1653.5" y="250" text-anchor="middle" font-family="Liberation Sans" font-size="28.8" fill="#000">股价预测结果和实际股价对比图</text><line x1="901.9" y1="292.8" x2="901.9" y2="873.5" stroke="#e0e0e0" stroke-width="1.5"/><line x1="901.9" y1="873.5" x2="901.9" y2="880.5" stroke="#000" stroke-width="1.6"/><line x1="1052.4" y1="292.8" x2="1052.4" y2="873.5" stroke="#e0e0e0" stroke-width="1.5"/><line x1="1052.4" y1="873.5" x2="1052.4" y2="880.5" stroke="#000" stroke-width="1.6"/><line x1="1202.9" y1="292.8" x2="1202.9" y2="873.5" stroke="#e0e0e0" stroke-width="1.5"/><line x1="1202.9" y1="873.5" x2="1202.9" y2="880.5" stroke="#000" stroke-width="1.6"/><line x1="1353.4" y1="292.8" x2="1353.4" y2="873.5" stroke="#e0e0e0" stroke-width="1.5"/><line x1="1353.4" y1="873.5" x2="1353.4" y2="880.5" stroke="#000" stroke-width="1.6"/><line x1="1503.9" y1="292.8" x2="1503.9" y2="873.5" stroke="#e0e0e0" stroke-width="1.5"/><line x1="1503.9" y1="873.5" x2="1503.9" y2="880.5" stroke="#000" stroke-width="1.6"/><line x1="1654.4" y1="292.8" x2="1654.4" y2="873.5" stroke="#e0e0e0" stroke-width="1.5"/><line x1="1654.4" y1="873.5" x2="1654.4" y2="880.5" stroke="#000" stroke-width="1.6"/><line x1="1804.9" y1="292.8" x2="1804.9" y2="873.5" stroke="#e0e0e0" stroke-width="1.5"/><line x1="1804.9" y1="873.5" x2="1804.9" y2="880.5" stroke="#000" stroke-width="1.6"/><line x1="1955.4" y1="292.8" x2="1955.4" y2="873.5" stroke="#e0e0e0" stroke-width="1.5"/><line x1="1955.4" y1="873.5" x2="1955.4" y2="880.5" stroke="#000" stroke-width="1.6"/><line x1="2105.9" y1="292.8" x2="2105.9" y2="873.5" stroke="#e0e0e0" stroke-width="1.5"/><line x1="2105.9" y1="873.5" x2="2105.9" y2="880.5" stroke="#000" stroke-width="1.6"/><line x1="2256.4" y1="292.8" x2="2256.4" y2="873.5" stroke="#e0e0e0" stroke-width="1.5"/><line x1="2256.4" y1="873.5" x2="2256.4" y2="880.5" stroke="#000" stroke-width="1.6"/><line x1="2406.9" y1="292.8" x2="2406.9" y2="873.5" stroke="#e0e0e0" stroke-width="1.5"/><line x1="2406.9" y1="873.5" x2="2406.9" y2="880.5" stroke="#000" stroke-width="1.6"/><line x1="852" y1="340.9" x2="2457.7" y2="340.9" stroke="#e0e0e0" stroke-width="1.5"/><line x1="852" y1="407.3" x2="2457.7" y2="407.3" stroke="#e0e0e0" stroke-width="1.5"/><line x1="852" y1="473.8" x2="2457.7" y2="473.8" stroke="#e0e0e0" stroke-width="1.5"/><line x1="852" y1="540.2" x2="2457.7" y2="540.2" stroke="#e0e0e0" stroke-width="1.5"/><line x1="852" y1="606.7" x2="2457.7" y2="606.7" stroke="#e0e0e0" stroke-width="1.5"/><line x1="852" y1="673.1" x2="2457.7" y2="673.1" stroke="#e0e0e0" stroke-width="1.5"/><line x1="852" y1="739.6" x2="2457.7" y2="739.6" stroke="#e0e0e0" stroke-width="1.5"/><line x1="852" y1="806.0" x2="2457.7" y2="806.0" stroke="#e0e0e0" stroke-width="1.5"/><line x1="844.5" y1="340.9" x2="852" y2="340.9" stroke="#000" stroke-width="1.6"/><text x="837" y="348.8" text-anchor="end" font-family="Liberation Sans" font-size="22" letter-spacing="0.4" fill="#000">470</text><line x1="844.5" y1="407.3" x2="852" y2="407.3" stroke="#000" stroke-width="1.6"/><text x="837" y="415.2" text-anchor="end" font-family="Liberation Sans" font-size="22" letter-spacing="0.4" fill="#000">460</text><line x1="844.5" y1="473.8" x2="852" y2="473.8" stroke="#000" stroke-width="1.6"/><text x="837" y="481.7" text-anchor="end" font-family="Liberation Sans" font-size="22" letter-spacing="0.4" fill="#000">450</text><line x1="844.5" y1="540.2" x2="852" y2="540.2" stroke="#000" stroke-width="1.6"/><text x="837" y="548.1" text-anchor="end" font-family="Liberation Sans" font-size="22" letter-spacing="0.4" fill="#000">440</text><line x1="844.5" y1="606.7" x2="852" y2="606.7" stroke="#000" stroke-width="1.6"/><text x="837" y="614.6" text-anchor="end" font-family="Liberation Sans" font-size="22" letter-spacing="0.4" fill="#000">430</text><line x1="844.5" y1="673.1" x2="852" y2="673.1" stroke="#000" stroke-width="1.6"/><text x="837" y="681.0" text-anchor="end" font-family="Liberation Sans" font-size="22" letter-spacing="0.4" fill="#000">420</text><line x1="844.5" y1="739.6" x2="852" y2="739.6" stroke="#000" stroke-width="1.6"/><text x="837" y="747.5" text-anchor="end" font-family="Liberation Sans" font-size="22" letter-spacing="0.4" fill="#000">410</text><line x1="844.5" y1="806.0" x2="852" y2="806.0" stroke="#000" stroke-width="1.6"/><text x="837" y="813.9" text-anchor="end" font-family="Liberation Sans" font-size="22" letter-spacing="0.4" fill="#000">400</text><line x1="844.5" y1="872.5" x2="852" y2="872.5" stroke="#000" stroke-width="1.6"/><text x="837" y="880.4" text-anchor="end" font-family="Liberation Sans" font-size="22" letter-spacing="0.4" fill="#000">390</text><text x="947.9" y="900.5" text-anchor="end" transform="rotate(-45 947.9 900.5)" font-family="Liberation Sans" font-size="22.5" letter-spacing="1.3" fill="#000">2024-11-15</text><text x="1098.4" y="900.5" text-anchor="end" transform="rotate(-45 1098.4 900.5)" font-family="Liberation Sans" font-size="22.5" letter-spacing="1.3" fill="#000">2024-11-20</text><text x="1248.9" y="900.5" text-anchor="end" transform="rotate(-45 1248.9 900.5)" font-family="Liberation Sans" font-size="22.5" letter-spacing="1.3" fill="#000">2024-11-25</text><text x="1399.4" y="900.5" text-anchor="end" transform="rotate(-45 1399.4 900.5)" font-family="Liberation Sans" font-size="22.5" letter-spacing="1.3" fill="#000">2024-11-29</text><text x="1549.9" y="900.5" text-anchor="end" transform="rotate(-45 1549.9 900.5)" font-family="Liberation Sans" font-size="22.5" letter-spacing="1.3" fill="#000">2024-12-04</text><text x="1700.4" y="900.5" text-anchor="end" transform="rotate(-45 1700.4 900.5)" font-family="Liberation Sans" font-size="22.5" letter-spacing="1.3" fill="#000">2024-12-09</text><text x="1850.9" y="900.5" text-anchor="end" transform="rotate(-45 1850.9 900.5)" font-family="Liberation Sans" font-size="22.5" letter-spacing="1.3" fill="#000">2024-12-12</text><text x="2001.4" y="900.5" text-anchor="end" transform="rotate(-45 2001.4 900.5)" font-family="Liberation Sans" font-size="22.5" letter-spacing="1.3" fill="#000">2024-12-17</text><text x="2151.9" y="900.5" text-anchor="end" transform="rotate(-45 2151.9 900.5)" font-family="Liberation Sans" font-size="22.5" letter-spacing="1.3" fill="#000">2024-12-20</text><text x="2302.4" y="900.5" text-anchor="end" transform="rotate(-45 2302.4 900.5)" font-family="Liberation Sans" font-size="22.5" letter-spacing="1.3" fill="#000">2024-12-26</text><text x="2452.9" y="900.5" text-anchor="end" transform="rotate(-45 2452.9 900.5)" font-family="Liberation Sans" font-size="22.5" letter-spacing="1.3" fill="#000">2024-12-31</text><text x="787" y="584" text-anchor="middle" transform="rotate(-90 787 584)" font-family="Liberation Sans" font-size="21" fill="#000">股价</text><g clip-path="url(#ax)"><circle cx="901.9" cy="706.8" r="7.8" fill="#000" fill-opacity="0.55" stroke="#000" stroke-opacity="0.45" stroke-width="1.6"/><circle cx="952.1" cy="693" r="7.8" fill="#000" fill-opacity="0.55" stroke="#000" stroke-opacity="0.45" stroke-width="1.6"/><circle cx="1002.2" cy="708.4" r="7.8" fill="#000" fill-opacity="0.55" stroke="#000" stroke-opacity="0.45" stroke-width="1.6"/><circle cx="1052.4" cy="720.5" r="7.8" fill="#000" fill-opacity="0.55" stroke="#000" stroke-opacity="0.45" stroke-width="1.6"/><circle cx="1102.6" cy="693" r="7.8" fill="#000" fill-opacity="0.55" stroke="#000" stroke-opacity="0.45" stroke-width="1.6"/><circle cx="1152.8" cy="681" r="7.8" fill="#000" fill-opacity="0.55" stroke="#000" stroke-opacity="0.45" stroke-width="1.6"/><circle cx="1202.9" cy="620.4" r="7.8" fill="#000" fill-opacity="0.55" stroke="#000" stroke-opacity="0.45" stroke-width="1.6"/><circle cx="1253.1" cy="652.8" r="7.8" fill="#000" fill-opacity="0.55" stroke="#000" stroke-opacity="0.45" stroke-width="1.6"/><circle cx="1303.3" cy="649.6" r="7.8" fill="#000" fill-opacity="0.55" stroke="#000" stroke-opacity="0.45" stroke-width="1.6"/><circle cx="1353.4" cy="600.3" r="7.8" fill="#000" fill-opacity="0.55" stroke="#000" stroke-opacity="0.45" stroke-width="1.6"/><circle cx="1403.6" cy="599.5" r="7.8" fill="#000" fill-opacity="0.55" stroke="#000" stroke-opacity="0.45" stroke-width="1.6"/><circle cx="1453.8" cy="556.7" r="7.8" fill="#000" fill-opacity="0.55" stroke="#000" stroke-opacity="0.45" stroke-width="1.6"/><circle cx="1503.9" cy="522.8" r="7.8" fill="#000" fill-opacity="0.55" stroke="#000" stroke-opacity="0.45" stroke-width="1.6"/><circle cx="1554.1" cy="516.3" r="7.8" fill="#000" fill-opacity="0.55" stroke="#000" stroke-opacity="0.45" stroke-width="1.6"/><circle cx="1604.3" cy="500.0" r="7.8" fill="#000" fill-opacity="0.55" stroke="#000" stroke-opacity="0.45" stroke-width="1.6"/><circle cx="1654.5" cy="517.7" r="7.8" fill="#000" fill-opacity="0.55" stroke="#000" stroke-opacity="0.45" stroke-width="1.6"/><circle cx="1704.6" cy="479.7" r="7.8" fill="#000" fill-opacity="0.55" stroke="#000" stroke-opacity="0.45" stroke-width="1.6"/><circle cx="1754.8" cy="476.5" r="7.8" fill="#000" fill-opacity="0.55" stroke="#000" stroke-opacity="0.45" stroke-width="1.6"/><circle cx="1805.0" cy="492.7" r="7.8" fill="#000" fill-opacity="0.55" stroke="#000" stroke-opacity="0.45" stroke-width="1.6"/><circle cx="1855.1" cy="462.8" r="7.8" fill="#000" fill-opacity="0.55" stroke="#000" stroke-opacity="0.45" stroke-width="1.6"/><circle cx="1905.3" cy="444.2" r="7.8" fill="#000" fill-opacity="0.55" stroke="#000" stroke-opacity="0.45" stroke-width="1.6"/><circle cx="1955.5" cy="557.2" r="7.8" fill="#000" fill-opacity="0.55" stroke="#000" stroke-opacity="0.45" stroke-width="1.6"/><circle cx="2005.6" cy="559.9" r="7.8" fill="#000" fill-opacity="0.55" stroke="#000" stroke-opacity="0.45" stroke-width="1.6"/><circle cx="2055.8" cy="564.4" r="7.8" fill="#000" fill-opacity="0.55" stroke="#000" stroke-opacity="0.45" stroke-width="1.6"/><circle cx="2106.0" cy="570.8" r="7.8" fill="#000" fill-opacity="0.55" stroke="#000" stroke-opacity="0.45" stroke-width="1.6"/><circle cx="2156.2" cy="545.4" r="7.8" fill="#000" fill-opacity="0.55" stroke="#000" stroke-opacity="0.45" stroke-width="1.6"/><circle cx="2206.3" cy="552.6" r="7.8" fill="#000" fill-opacity="0.55" stroke="#000" stroke-opacity="0.45" stroke-width="1.6"/><circle cx="2256.5" cy="603.5" r="7.8" fill="#000" fill-opacity="0.55" stroke="#000" stroke-opacity="0.45" stroke-width="1.6"/><circle cx="2306.7" cy="640.7" r="7.8" fill="#000" fill-opacity="0.55" stroke="#000" stroke-opacity="0.45" stroke-width="1.6"/><circle cx="2356.8" cy="663.5" r="7.8" fill="#000" fill-opacity="0.55" stroke="#000" stroke-opacity="0.45" stroke-width="1.6"/><polyline points="901.9,706.8 952.1,693 1002.2,708.4 1052.4,720.5 1102.6,693 1152.8,681 1202.9,620.4 1253.1,652.8 1303.3,649.6 1353.4,600.3 1403.6,599.5 1453.8,556.7 1503.9,522.8 1554.1,516.3 1604.3,500.0 1654.5,517.7 1704.6,479.7 1754.8,476.5 1805.0,492.7 1855.1,462.8 1905.3,444.2 1955.5,557.2 2005.6,559.9 2055.8,564.4 2106.0,570.8 2156.2,545.4 2206.3,552.6 2256.5,603.5 2306.7,640.7 2356.8,663.5" fill="none" stroke="#000" stroke-width="4.6" stroke-linejoin="miter"/><circle cx="901.9" cy="714.8" r="7.8" fill="#0000ff" fill-opacity="0.6" stroke="#0000ff" stroke-opacity="0.45" stroke-width="1.6"/><circle cx="952.1" cy="738.3" r="7.8" fill="#0000ff" fill-opacity="0.6" stroke="#0000ff" stroke-opacity="0.45" stroke-width="1.6"/><circle cx="1002.2" cy="721.3" r="7.8" fill="#0000ff" fill-opacity="0.6" stroke="#0000ff" stroke-opacity="0.45" stroke-width="1.6"/><circle cx="1052.4" cy="715.6" r="7.8" fill="#0000ff" fill-opacity="0.6" stroke="#0000ff" stroke-opacity="0.45" stroke-width="1.6"/><circle cx="1102.6" cy="711.6" r="7.8" fill="#0000ff" fill-opacity="0.6" stroke="#0000ff" stroke-opacity="0.45" stroke-width="1.6"/><circle cx="1152.8" cy="735" r="7.8" fill="#0000ff" fill-opacity="0.6" stroke="#0000ff" stroke-opacity="0.45" stroke-width="1.6"/><circle cx="1202.9" cy="683.4" r="7.8" fill="#0000ff" fill-opacity="0.6" stroke="#0000ff" stroke-opacity="0.45" stroke-width="1.6"/><circle cx="1253.1" cy="642.7" r="7.8" fill="#0000ff" fill-opacity="0.6" stroke="#0000ff" stroke-opacity="0.45" stroke-width="1.6"/><circle cx="1303.3" cy="663.3" r="7.8" fill="#0000ff" fill-opacity="0.6" stroke="#0000ff" stroke-opacity="0.45" stroke-width="1.6"/><circle cx="1353.4" cy="654.4" r="7.8" fill="#0000ff" fill-opacity="0.6" stroke="#0000ff" stroke-opacity="0.45" stroke-width="1.6"/><circle cx="1403.6" cy="607.6" r="7.8" fill="#0000ff" fill-opacity="0.6" stroke="#0000ff" stroke-opacity="0.45" stroke-width="1.6"/><circle cx="1453.8" cy="604.3" r="7.8" fill="#0000ff" fill-opacity="0.6" stroke="#0000ff" stroke-opacity="0.45" stroke-width="1.6"/><circle cx="1503.9" cy="568.8" r="7.8" fill="#0000ff" fill-opacity="0.6" stroke="#0000ff" stroke-opacity="0.45" stroke-width="1.6"/><circle cx="1554.1" cy="536.5" r="7.8" fill="#0000ff" fill-opacity="0.6" stroke="#0000ff" stroke-opacity="0.45" stroke-width="1.6"/><circle cx="1604.3" cy="552.1" r="7.8" fill="#0000ff" fill-opacity="0.6" stroke="#0000ff" stroke-opacity="0.45" stroke-width="1.6"/><circle cx="1654.5" cy="541.1" r="7.8" fill="#0000ff" fill-opacity="0.6" stroke="#0000ff" stroke-opacity="0.45" stroke-width="1.6"/><circle cx="1704.6" cy="498.3" r="7.8" fill="#0000ff" fill-opacity="0.6" stroke="#0000ff" stroke-opacity="0.45" stroke-width="1.6"/><circle cx="1754.8" cy="492.7" r="7.8" fill="#0000ff" fill-opacity="0.6" stroke="#0000ff" stroke-opacity="0.45" stroke-width="1.6"/><circle cx="1805.0" cy="450.7" r="7.8" fill="#0000ff" fill-opacity="0.6" stroke="#0000ff" stroke-opacity="0.45" stroke-width="1.6"/><circle cx="1855.1" cy="483.8" r="7.8" fill="#0000ff" fill-opacity="0.6" stroke="#0000ff" stroke-opacity="0.45" stroke-width="1.6"/><circle cx="1905.3" cy="482.2" r="7.8" fill="#0000ff" fill-opacity="0.6" stroke="#0000ff" stroke-opacity="0.45" stroke-width="1.6"/><circle cx="1955.5" cy="465.7" r="7.8" fill="#0000ff" fill-opacity="0.6" stroke="#0000ff" stroke-opacity="0.45" stroke-width="1.6"/><circle cx="2005.6" cy="499" r="7.8" fill="#0000ff" fill-opacity="0.6" stroke="#0000ff" stroke-opacity="0.45" stroke-width="1.6"/><circle cx="2055.8" cy="553.5" r="7.8" fill="#0000ff" fill-opacity="0.6" stroke="#0000ff" stroke-opacity="0.45" stroke-width="1.6"/><circle cx="2106.0" cy="579.9" r="7.8" fill="#0000ff" fill-opacity="0.6" stroke="#0000ff" stroke-opacity="0.45" stroke-width="1.6"/><circle cx="2156.2" cy="569" r="7.8" fill="#0000ff" fill-opacity="0.6" stroke="#0000ff" stroke-opacity="0.45" stroke-width="1.6"/><circle cx="2206.3" cy="565.4" r="7.8" fill="#0000ff" fill-opacity="0.6" stroke="#0000ff" stroke-opacity="0.45" stroke-width="1.6"/><circle cx="2256.5" cy="560.8" r="7.8" fill="#0000ff" fill-opacity="0.6" stroke="#0000ff" stroke-opacity="0.45" stroke-width="1.6"/><circle cx="2306.7" cy="617.1" r="7.8" fill="#0000ff" fill-opacity="0.6" stroke="#0000ff" stroke-opacity="0.45" stroke-width="1.6"/><circle cx="2356.8" cy="631.7" r="7.8" fill="#0000ff" fill-opacity="0.6" stroke="#0000ff" stroke-opacity="0.45" stroke-width="1.6"/><polyline points="901.9,714.8 952.1,738.3 1002.2,721.3 1052.4,715.6 1102.6,711.6 1152.8,735 1202.9,683.4 1253.1,642.7 1303.3,663.3 1353.4,654.4 1403.6,607.6 1453.8,604.3 1503.9,568.8 1554.1,536.5 1604.3,552.1 1654.5,541.1 1704.6,498.3 1754.8,492.7 1805.0,450.7 1855.1,483.8 1905.3,482.2 1955.5,465.7 2005.6,499 2055.8,553.5 2106.0,579.9 2156.2,569 2206.3,565.4 2256.5,560.8 2306.7,617.1 2356.8,631.7" fill="none" stroke="#0000ff" stroke-opacity="0.7" stroke-width="4.6"/></g><rect x="852" y="292.8" width="1605.7" height="580.7" fill="none" stroke="#000" stroke-width="2"/><rect x="2309.5" y="302.8" width="137" height="66" rx="5" fill="#fff" fill-opacity="0.8" stroke="#d0d0d0" stroke-width="1.5"/><line x1="2315" y1="320.8" x2="2361" y2="320.8" stroke="#000" stroke-width="4.6"/><line x1="2315" y1="349.8" x2="2361" y2="349.8" stroke="#0000ff" stroke-opacity="0.7" stroke-width="4.6"/><text x="2377" y="328.5" font-family="Liberation Sans" font-size="20.5" fill="#000">实际值</text><text x="2377" y="357.5" font-family="Liberation Sans" font-size="20.5" fill="#000">预测值</text></g></svg><svg style="left:0;top:0" width="2485" height="1489" viewBox="0 0 2485 1489"><path d="M777 1004 L792 990 L807 1004 L804 1007 L792 996 L780 1007 Z" fill="#000"/><path d="M781 1004 L792 994 L803 1004 V1017 H796 V1008 H788 V1017 H781 Z" fill="#000"/><rect x="799" y="991" width="4" height="7" fill="#000"/><defs><pattern id="dith" width="2" height="2" patternUnits="userSpaceOnUse"><rect width="1" height="1" fill="#222"/><rect x="1" y="1" width="1" height="1" fill="#222"/></pattern></defs><path d="M846 1003 H826 M834 991 L822 1003 L834 1015" stroke="url(#dith)" stroke-width="7" fill="none" stroke-linecap="square"/><path d="M858 1003 H878 M870 991 L882 1003 L870 1015" stroke="url(#dith)" stroke-width="7" fill="none" stroke-linecap="square"/><line x1="898.5" y1="984" x2="898.5" y2="1020" stroke="#bdbdbd" stroke-width="1"/><line x1="1035.5" y1="984" x2="1035.5" y2="1020" stroke="#bdbdbd" stroke-width="1"/><path d="M926 992 V1014 M915 1003 H937" stroke="#000" stroke-width="5"/><path d="M926 985 L933 993 H919 Z M926 1021 L933 1013 H919 Z M908 1003 L916 996 V1010 Z M944 1003 L936 996 V1010 Z" fill="#000"/><circle cx="965" cy="1000" r="10" stroke="#000" stroke-width="4" fill="none"/><path d="M972 1007 L982 1017" stroke="#000" stroke-width="5" stroke-linecap="round"/><g stroke="#000" stroke-width="2.2"><path d="M995 994 H1024 M995 1004 H1024 M995 1014 H1024"/></g><rect x="1000" y="989" width="6" height="10" fill="#000"/><rect x="1012" y="999" width="6" height="10" fill="#000"/><rect x="1003" y="1009" width="6" height="10" fill="#000"/><path d="M1048 990 H1071 L1077 996 V1017 H1048 Z" stroke="#000" stroke-width="3" fill="none" stroke-linejoin="round"/><rect x="1053" y="990" width="14" height="9" fill="#000"/><rect x="1062" y="991" width="3" height="6" fill="#f0f0f0"/><rect x="1053" y="1006" width="19" height="9" stroke="#000" stroke-width="2.5" fill="none"/></svg><div class="a" style="left:2264px;top:988px;font-family:'Liberation Serif',serif;font-size:20px;line-height:24px;color:#000;letter-spacing:1.9px;word-spacing:2.5px">(x, y) = (, 454.9)</div></body></html>
